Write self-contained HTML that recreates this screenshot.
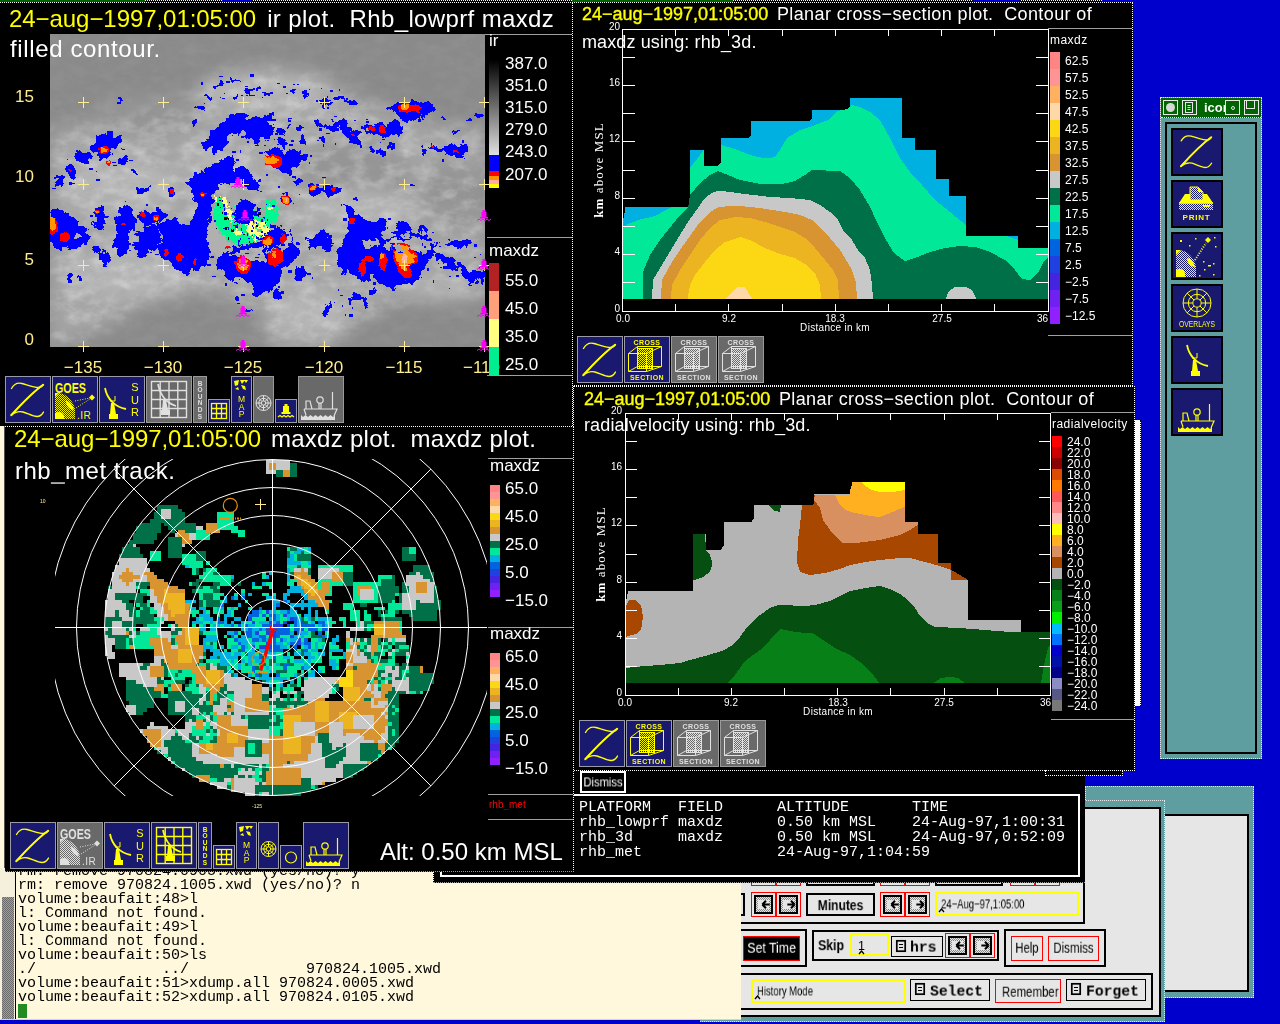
<!DOCTYPE html><html><head><meta charset="utf-8"><title>zeb</title><style>
html,body{margin:0;padding:0;}
body{width:1280px;height:1024px;overflow:hidden;background:#0000cd;position:relative;font-family:"Liberation Sans",sans-serif;}
div{position:absolute;box-sizing:border-box;}
svg{position:absolute;left:0;top:0;overflow:visible;}
.t{white-space:pre;line-height:1;transform:translateY(-0.847em);will-change:transform;}
.m{white-space:pre;line-height:1;font-family:"Liberation Mono",monospace;transform:translateY(-0.7665em);will-change:transform;}
.dot{border:1px dotted #fff;}
.ic{background:#191970;border:1px solid #9a9aa8;}
.ig{background:#696969;border:1px solid #9a9a9a;}
</style></head><body>
<div style="left:1085px;top:786px;width:169px;height:212px;background:#5f9ea0;border:1px dotted #e8e8e8;"></div>
<div style="left:1164px;top:814px;width:85px;height:178px;background:#e6e6e6;border:2px solid #000;border-left:none;"></div>
<div style="left:700px;top:800px;width:465px;height:222px;background:#5f9ea0;border:1px dotted #e8e8e8;"></div>
<div style="left:700px;top:807px;width:461px;height:210px;background:#e6e6e6;border:2px solid #000;"></div>
<div style="left:751px;top:870px;width:25px;height:16px;border:1px solid #f00;"></div>
<div style="left:776px;top:870px;width:25px;height:16px;border:1px solid #f00;"></div>
<div style="left:806px;top:870px;width:69px;height:16px;border:2px solid #000;"></div>
<div style="left:880px;top:870px;width:25px;height:16px;border:1px solid #f00;"></div>
<div style="left:905px;top:870px;width:25px;height:16px;border:1px solid #f00;"></div>
<div style="left:935px;top:870px;width:68px;height:16px;border:2px solid #000;"></div>
<div style="left:1010px;top:870px;width:25px;height:16px;border:1px solid #f00;"></div>
<div style="left:1035px;top:870px;width:25px;height:16px;border:1px solid #f00;"></div>
<div style="left:700px;top:860px;width:385px;height:64px;border:2px solid #000;"></div>
<div style="left:700px;top:893px;width:45px;height:23px;border:2px solid #000;"></div>
<div style="left:751px;top:892px;width:25px;height:25px;border:1px solid #f00;background:#e6e6e6"><div style="left:2px;top:2px;right:2px;bottom:2px;border:2px solid #000;background:#bdbdbd;background-image:conic-gradient(#888 25%,#e6e6e6 0 50%,#888 0 75%,#e6e6e6 0);background-size:2px 2px;"><div style="left:2px;top:3px;right:2px;bottom:3px;background:#e6e6e6"></div></div><svg width="25" height="25" viewBox="0 0 20 24" preserveAspectRatio="xMidYMid" style="left:2px;top:-1px"><path d="M13 12h-7M6 12l3.5-3.5M6 12l3.5 3.5" stroke="#000" stroke-width="2" fill="none"/></svg></div>
<div style="left:776px;top:892px;width:25px;height:25px;border:1px solid #f00;background:#e6e6e6"><div style="left:2px;top:2px;right:2px;bottom:2px;border:2px solid #000;background:#bdbdbd;background-image:conic-gradient(#888 25%,#e6e6e6 0 50%,#888 0 75%,#e6e6e6 0);background-size:2px 2px;"><div style="left:2px;top:3px;right:2px;bottom:3px;background:#e6e6e6"></div></div><svg width="25" height="25" viewBox="0 0 20 24" preserveAspectRatio="xMidYMid" style="left:2px;top:-1px"><path d="M6 12h7M13 12l-3.5-3.5M13 12l-3.5 3.5" stroke="#000" stroke-width="2" fill="none"/></svg></div>
<div style="left:806px;top:893px;width:69px;height:23px;border:2px solid #000;"></div>
<div class="t" style="left:806px;width:69px;text-align:center;top:909.5px;font-size:14px;color:#000;font-weight:bold;transform:translateY(-0.847em) scaleX(0.86);">Minutes</div>
<div style="left:880px;top:892px;width:25px;height:25px;border:1px solid #f00;background:#e6e6e6"><div style="left:2px;top:2px;right:2px;bottom:2px;border:2px solid #000;background:#bdbdbd;background-image:conic-gradient(#888 25%,#e6e6e6 0 50%,#888 0 75%,#e6e6e6 0);background-size:2px 2px;"><div style="left:2px;top:3px;right:2px;bottom:3px;background:#e6e6e6"></div></div><svg width="25" height="25" viewBox="0 0 20 24" preserveAspectRatio="xMidYMid" style="left:2px;top:-1px"><path d="M13 12h-7M6 12l3.5-3.5M6 12l3.5 3.5" stroke="#000" stroke-width="2" fill="none"/></svg></div>
<div style="left:905px;top:892px;width:25px;height:25px;border:1px solid #f00;background:#e6e6e6"><div style="left:2px;top:2px;right:2px;bottom:2px;border:2px solid #000;background:#bdbdbd;background-image:conic-gradient(#888 25%,#e6e6e6 0 50%,#888 0 75%,#e6e6e6 0);background-size:2px 2px;"><div style="left:2px;top:3px;right:2px;bottom:3px;background:#e6e6e6"></div></div><svg width="25" height="25" viewBox="0 0 20 24" preserveAspectRatio="xMidYMid" style="left:2px;top:-1px"><path d="M6 12h7M13 12l-3.5-3.5M13 12l-3.5 3.5" stroke="#000" stroke-width="2" fill="none"/></svg></div>
<div style="left:935px;top:892px;width:144px;height:24px;border:2px solid #ffff00;"></div>
<div class="t" style="left:941px;top:909px;font-size:12.5px;color:#000;transform-origin:0 0;transform:translateY(-0.847em) scaleX(0.76);">24−Aug−97,1:05:00</div>
<svg width="1280" height="1024"><path d="M939 912l2.5-3l2.5 3" stroke="#000" stroke-width="1.3" fill="none"/></svg>
<div style="left:700px;top:929px;width:107px;height:38px;border:2px solid #000;"></div>
<div style="left:743px;top:936px;width:57px;height:25px;background:#000;border:1px solid #f00;"></div>
<div class="t" style="left:743px;width:57px;text-align:center;top:953px;font-size:14.5px;color:#fff;transform:translateY(-0.847em) scaleX(0.85)">Set Time</div>
<div style="left:812px;top:930px;width:187px;height:31px;border:2px solid #000;"></div>
<div class="t" style="left:815px;width:32px;text-align:center;top:950px;font-size:14px;color:#000;font-weight:bold;transform:translateY(-0.847em) scaleX(0.88);">Skip</div>
<div style="left:850px;top:933px;width:39px;height:23px;border:2px solid #ffff00;"></div>
<div class="t" style="left:858px;top:951px;font-size:12.5px;color:#000;">1</div>
<svg width="1280" height="1024"><path d="M859 954l2.5-3l2.5 3" stroke="#000" stroke-width="1.3" fill="none"/></svg>
<div style="left:891px;top:936px;width:52px;height:21px;border:1px solid #000;"></div><svg width="1280" height="1024"><rect x="896.8" y="940.8" width="8.4" height="10.4" fill="none" stroke="#000" stroke-width="1.7"/><path d="M899 944.5h4M899 947.5h4" stroke="#000" stroke-width="1"/></svg><div class="m" style="left:910px;top:951.5px;font-size:15px;font-weight:bold;color:#000;font-family:'Liberation Mono';transform-origin:0 0;transform:translateY(-0.766em) scaleX(0.98)">hrs</div>
<div style="left:945px;top:933px;width:25px;height:25px;border:1px solid #f00;background:#e6e6e6"><div style="left:2px;top:2px;right:2px;bottom:2px;border:2px solid #000;background:#bdbdbd;background-image:conic-gradient(#888 25%,#e6e6e6 0 50%,#888 0 75%,#e6e6e6 0);background-size:2px 2px;"><div style="left:2px;top:3px;right:2px;bottom:3px;background:#e6e6e6"></div></div><svg width="25" height="25" viewBox="0 0 20 24" preserveAspectRatio="xMidYMid" style="left:2px;top:-1px"><path d="M13 12h-7M6 12l3.5-3.5M6 12l3.5 3.5" stroke="#000" stroke-width="2" fill="none"/></svg></div>
<div style="left:970px;top:933px;width:25px;height:25px;border:1px solid #f00;background:#e6e6e6"><div style="left:2px;top:2px;right:2px;bottom:2px;border:2px solid #000;background:#bdbdbd;background-image:conic-gradient(#888 25%,#e6e6e6 0 50%,#888 0 75%,#e6e6e6 0);background-size:2px 2px;"><div style="left:2px;top:3px;right:2px;bottom:3px;background:#e6e6e6"></div></div><svg width="25" height="25" viewBox="0 0 20 24" preserveAspectRatio="xMidYMid" style="left:2px;top:-1px"><path d="M6 12h7M13 12l-3.5-3.5M13 12l-3.5 3.5" stroke="#000" stroke-width="2" fill="none"/></svg></div>
<div style="left:1004px;top:929px;width:102px;height:38px;border:2px solid #000;"></div>
<div style="left:1011px;top:936px;width:32px;height:25px;border:1px solid #f00;"></div>
<div class="t" style="left:1011px;width:32px;text-align:center;top:953px;font-size:14.5px;color:#000;transform:translateY(-0.847em) scaleX(0.78);">Help</div>
<div style="left:1048px;top:936px;width:51px;height:25px;border:1px solid #f00;"></div>
<div class="t" style="left:1048px;width:51px;text-align:center;top:953px;font-size:14.5px;color:#000;transform:translateY(-0.847em) scaleX(0.8);">Dismiss</div>
<div style="left:700px;top:973px;width:453px;height:37px;border:2px solid #000;"></div>
<div style="left:751px;top:979px;width:155px;height:24px;border:2px solid #ffff00;"></div>
<div class="t" style="left:757px;top:996px;font-size:12.5px;color:#000;transform-origin:0 0;transform:translateY(-0.847em) scaleX(0.76);">History Mode</div>
<svg width="1280" height="1024"><path d="M755 999l2.5-3l2.5 3" stroke="#000" stroke-width="1.3" fill="none"/></svg>
<div style="left:910px;top:979px;width:80px;height:22px;border:1px solid #000;"></div><svg width="1280" height="1024"><rect x="915.8" y="983.8" width="8.4" height="10.4" fill="none" stroke="#000" stroke-width="1.7"/><path d="M918 987.5h4M918 990.5h4" stroke="#000" stroke-width="1"/></svg><div class="m" style="left:930px;top:995.5px;font-size:15px;font-weight:bold;color:#000;font-family:'Liberation Mono';transform-origin:0 0;transform:translateY(-0.766em) scaleX(0.98)">Select</div>
<div style="left:995px;top:979px;width:66px;height:24px;border:1px solid #f00;"></div>
<div class="t" style="left:995px;width:66px;text-align:center;top:997px;font-size:14.5px;color:#000;transform:translateY(-0.847em) scaleX(0.79);">Remember</div>
<div style="left:1066px;top:979px;width:80px;height:22px;border:1px solid #000;"></div><svg width="1280" height="1024"><rect x="1071.8" y="983.8" width="8.4" height="10.4" fill="none" stroke="#000" stroke-width="1.7"/><path d="M1074 987.5h4M1074 990.5h4" stroke="#000" stroke-width="1"/></svg><div class="m" style="left:1086px;top:995.5px;font-size:15px;font-weight:bold;color:#000;font-family:'Liberation Mono';transform-origin:0 0;transform:translateY(-0.766em) scaleX(0.98)">Forget</div>
<div style="left:0px;top:426px;width:741px;height:594px;background:#fff8dc;"></div>
<div style="left:4px;top:426px;width:1px;height:445px;background:#555;"></div>
<div style="left:0px;top:868px;width:16px;height:152px;background:#f4f0dc;"></div>
<div style="left:2px;top:897px;width:12px;height:122px;background:#808080;background-image:conic-gradient(#6a6a6a 25%,#a0a0a0 0 50%,#6a6a6a 0 75%,#a0a0a0 0);background-size:2px 2px;"></div>
<div style="left:15px;top:868px;width:1px;height:151px;background:#000;"></div>
<div style="left:0px;top:1019px;width:741px;height:1px;background:#d8d4c0;"></div>
<div class="m" style="left:18px;top:875px;font-size:15px;color:#000;">rm: remove 970824.0905.xwd (yes/no)? y</div>
<div class="m" style="left:18px;top:889px;font-size:15px;color:#000;">rm: remove 970824.1005.xwd (yes/no)? n</div>
<div class="m" style="left:18px;top:903px;font-size:15px;color:#000;">volume:beaufait:48&gt;l</div>
<div class="m" style="left:18px;top:917px;font-size:15px;color:#000;">l: Command not found.</div>
<div class="m" style="left:18px;top:931px;font-size:15px;color:#000;">volume:beaufait:49&gt;l</div>
<div class="m" style="left:18px;top:945px;font-size:15px;color:#000;">l: Command not found.</div>
<div class="m" style="left:18px;top:959px;font-size:15px;color:#000;">volume:beaufait:50&gt;ls</div>
<div class="m" style="left:18px;top:973px;font-size:15px;color:#000;">./              ../             970824.1005.xwd</div>
<div class="m" style="left:18px;top:987px;font-size:15px;color:#000;">volume:beaufait:51&gt;xdump.all 970824.0005.xwd</div>
<div class="m" style="left:18px;top:1001px;font-size:15px;color:#000;">volume:beaufait:52&gt;xdump.all 970824.0105.xwd</div>
<div style="left:18px;top:1004px;width:9px;height:14px;background:#228b22;"></div>
<div style="left:433px;top:770px;width:652px;height:113px;background:#000;border-left:1px dotted #fff;border-bottom:1px dotted #999;"></div>
<div style="left:440px;top:794px;width:640px;height:83px;border:2px solid #fff;"></div>
<div style="left:580px;top:771px;width:46px;height:22px;border:2px solid #fff;"></div>
<div class="t" style="left:580px;width:46px;text-align:center;top:787px;font-size:12.5px;color:#fff;transform:translateY(-0.847em) scaleX(0.9)">Dismiss</div>
<div class="m" style="left:579px;top:811px;font-size:15px;color:#fff;">PLATFORM   FIELD      ALTITUDE       TIME</div>
<div class="m" style="left:579px;top:826px;font-size:15px;color:#fff;">rhb_lowprf maxdz      0.50 km MSL    24-Aug-97,1:00:31</div>
<div class="m" style="left:579px;top:841px;font-size:15px;color:#fff;">rhb_3d     maxdz      0.50 km MSL    24-Aug-97,0:52:09</div>
<div class="m" style="left:579px;top:856px;font-size:15px;color:#fff;">rhb_met               24-Aug-97,1:04:59</div>
<div class="dot" style="left:573px;top:386px;width:562px;height:385px;background:#000;"></div>
<svg width="1280" height="1024" shape-rendering="crispEdges"><path d="M625.0 682.5 L625.0 608.0 L628.0 591.0 L692.5 591.0 L692.5 534.0 L706.2 534.0 L706.2 550.0 L720.5 550.0 L723.5 546.0 L723.5 522.0 L751.2 522.0 L753.5 519.0 L753.5 505.0 L812.5 505.0 L814.0 503.0 L814.0 494.0 L850.0 494.0 L852.5 491.0 L852.5 482.0 L904.5 482.0 L904.5 522.0 L917.5 522.0 L917.5 534.0 L938.2 534.0 L938.2 562.8 L951.2 562.8 L951.2 580.0 L968.2 580.0 L968.2 619.5 L1020.5 619.5 L1020.5 631.5 L1050.5 631.5 L1050.5 682.5Z" fill="#b4b4b4"/><path d="M692.5 534.0 L705.0 534.0 L706.0 550.0 L710.0 555.0 L712.5 563.0 L710.0 572.0 L703.0 577.0 L692.5 580.5Z" fill="#055010"/><path d="M768.5 505.0 L781.0 505.0 L780.0 512.0 L775.0 511.0Z" fill="#055010"/><path d="M625.0 682.5 L625.0 668.0 L640.0 666.5 L660.0 665.0 L680.0 663.0 L690.0 660.0 L705.0 656.0 L722.0 651.0 L733.0 645.0 L740.0 637.0 L745.0 630.0 L752.0 622.0 L760.0 615.0 L770.0 608.0 L780.0 604.5 L790.0 605.0 L800.0 606.5 L815.0 605.0 L830.0 601.0 L840.0 596.0 L850.0 591.0 L865.0 588.0 L880.0 586.0 L890.0 589.0 L900.0 594.0 L908.0 600.0 L915.0 608.0 L920.0 616.0 L927.0 623.0 L935.0 627.0 L960.0 628.0 L985.0 630.0 L1010.0 632.0 L1030.0 632.5 L1050.5 632.0 L1050.5 682.5Z" fill="#055010"/><path d="M728.0 682.5 L735.0 675.0 L745.0 661.0 L760.0 650.0 L770.0 640.0 L780.0 629.0 L795.0 632.0 L813.0 633.5 L820.0 638.0 L835.0 648.0 L850.0 655.0 L860.0 662.0 L870.0 671.0 L879.0 682.5Z" fill="#088018"/><path d="M934.0 682.5 L940.0 678.5 L950.0 676.5 L958.0 678.0 L964.0 682.5Z" fill="#088018"/><path d="M1041.0 682.5 L1045.0 660.0 L1048.0 648.0 L1050.5 645.0 L1050.5 682.5Z" fill="#088018"/><path d="M625.0 608.0 L629.0 600.0 L635.0 599.5 L641.0 605.0 L643.0 617.0 L641.0 630.0 L636.0 634.0 L625.0 637.0Z" fill="#a84800"/><path d="M802.0 505.0 L800.0 525.0 L798.0 540.0 L797.0 562.0 L800.0 572.0 L810.0 575.0 L825.0 573.0 L840.0 569.0 L850.0 565.0 L865.0 562.0 L880.0 560.0 L900.0 558.0 L912.0 558.5 L925.0 562.0 L940.0 566.0 L951.2 570.0 L960.0 575.0 L968.0 580.0 L951.2 580.0 L951.2 562.8 L938.2 562.8 L938.2 534.0 L917.5 534.0 L917.5 522.0 L904.5 522.0 L904.5 482.0 L852.5 482.0 L850.0 491.0 L850.0 494.5 L814.0 494.5 L814.0 503.0 L812.5 505.0Z" fill="#a84800"/><path d="M815.0 494.5 L814.0 500.0 L820.0 508.0 L823.0 520.0 L830.0 530.0 L837.0 538.0 L843.0 543.0 L860.0 542.5 L880.0 540.0 L900.0 535.0 L910.0 530.0 L917.5 525.0 L917.5 522.0 L904.5 522.0 L904.5 482.0 L852.5 482.0 L850.0 491.0 L850.0 494.5Z" fill="#d89060"/><path d="M835.0 494.5 L840.0 505.0 L845.0 510.0 L855.0 513.0 L870.0 516.0 L880.0 517.0 L890.0 513.0 L904.5 507.0 L904.5 482.0 L852.5 482.0 L850.0 491.0 L850.0 494.5Z" fill="#ffb020"/><path d="M861.0 482.0 L865.0 486.0 L872.0 490.0 L880.0 492.0 L890.0 492.5 L904.5 490.0 L904.5 482.0Z" fill="#ffff00"/><g stroke="#fff" stroke-width="1" fill="none"><rect x="625" y="413" width="425.5" height="282"/><path d="M625 441.2h12M1050.5 441.2h-12"/><path d="M625 469.4h12M1050.5 469.4h-12"/><path d="M625 497.6h12M1050.5 497.6h-12"/><path d="M625 525.8h12M1050.5 525.8h-12"/><path d="M625 554.0h12M1050.5 554.0h-12"/><path d="M625 582.2h12M1050.5 582.2h-12"/><path d="M625 610.4h12M1050.5 610.4h-12"/><path d="M625 638.6h12M1050.5 638.6h-12"/><path d="M625 666.8h12M1050.5 666.8h-12"/><path d="M678.2 413v7M678.2 695v-7"/><path d="M731.4 413v7M731.4 695v-7"/><path d="M784.6 413v7M784.6 695v-7"/><path d="M837.8 413v7M837.8 695v-7"/><path d="M890.9 413v7M890.9 695v-7"/><path d="M944.1 413v7M944.1 695v-7"/><path d="M997.3 413v7M997.3 695v-7"/></g><path d="M1050.5 412.5H1134M1050.5 719.5H1134" stroke="#a0a0a0" stroke-width="1"/><rect x="1052" y="436" width="10" height="11" fill="#ff0000"/><rect x="1052" y="447" width="10" height="11" fill="#cc0000"/><rect x="1052" y="458" width="10" height="11" fill="#8b0000"/><rect x="1052" y="469" width="10" height="11" fill="#dc4c00"/><rect x="1052" y="480" width="10" height="11" fill="#ff7800"/><rect x="1052" y="491" width="10" height="11" fill="#ff5858"/><rect x="1052" y="502" width="10" height="11" fill="#ff8888"/><rect x="1052" y="513" width="10" height="11" fill="#ffbcbc"/><rect x="1052" y="524" width="10" height="11" fill="#ffff00"/><rect x="1052" y="535" width="10" height="11" fill="#ffb020"/><rect x="1052" y="546" width="10" height="11" fill="#d89060"/><rect x="1052" y="557" width="10" height="11" fill="#a84800"/><rect x="1052" y="568" width="10" height="11" fill="#b4b4b4"/><rect x="1052" y="579" width="10" height="11" fill="#055010"/><rect x="1052" y="590" width="10" height="11" fill="#088018"/><rect x="1052" y="601" width="10" height="11" fill="#08a018"/><rect x="1052" y="612" width="10" height="11" fill="#00ee00"/><rect x="1052" y="623" width="10" height="11" fill="#00bcff"/><rect x="1052" y="634" width="10" height="11" fill="#0070ff"/><rect x="1052" y="645" width="10" height="11" fill="#0000cc"/><rect x="1052" y="656" width="10" height="11" fill="#0010a8"/><rect x="1052" y="667" width="10" height="11" fill="#000088"/><rect x="1052" y="678" width="10" height="11" fill="#8c8cc4"/><rect x="1052" y="689" width="10" height="11" fill="#585888"/><rect x="1052" y="700" width="10" height="11" fill="#787878"/></svg>
<div class="t" style="left:584px;top:405px;font-size:18px;color:#fff;letter-spacing:0.38px;"><span style="color:#ffff00;letter-spacing:0;margin-right:-2px;-webkit-text-stroke:0.35px #ffff00">24−aug−1997,01:05:00</span>  Planar cross−section plot.  Contour of</div>
<div class="t" style="left:584px;top:431px;font-size:18px;color:#fff;letter-spacing:0.12px;">radialvelocity using: rhb_3d.</div>
<div class="t" style="left:592px;width:30px;text-align:right;top:413.5px;font-size:10px;color:#fff">20</div>
<div class="t" style="left:592px;width:30px;text-align:right;top:469.9px;font-size:10px;color:#fff">16</div>
<div class="t" style="left:592px;width:30px;text-align:right;top:526.3px;font-size:10px;color:#fff">12</div>
<div class="t" style="left:592px;width:30px;text-align:right;top:582.7px;font-size:10px;color:#fff">8</div>
<div class="t" style="left:592px;width:30px;text-align:right;top:639.1px;font-size:10px;color:#fff">4</div>
<div class="t" style="left:592px;width:30px;text-align:right;top:695.5px;font-size:10px;color:#fff">0</div>
<div class="t" style="left:605.0px;width:40px;text-align:center;top:706px;font-size:10px;color:#fff">0.0</div>
<div class="t" style="left:711.4px;width:40px;text-align:center;top:706px;font-size:10px;color:#fff">9.2</div>
<div class="t" style="left:817.8px;width:40px;text-align:center;top:706px;font-size:10px;color:#fff">18.3</div>
<div class="t" style="left:924.1px;width:40px;text-align:center;top:706px;font-size:10px;color:#fff">27.5</div>
<div class="t" style="left:1039.5px;width:11px;overflow:hidden;top:706px;font-size:10px;color:#fff">36</div>
<div class="t" style="left:797.8px;width:80px;text-align:center;top:715px;font-size:10px;color:#fff;letter-spacing:0.3px">Distance in km</div>
<div style="left:601px;top:554.0px;width:0;height:0;"><div style="left:-60px;top:-8px;width:120px;height:16px;line-height:16px;text-align:center;transform:rotate(-90deg);color:#fff;font-family:'Liberation Serif',serif;font-size:13px;white-space:pre;letter-spacing:1.1px"><b>km</b> above MSL</div></div>
<div class="t" style="left:1052px;top:428px;font-size:12px;color:#fff;letter-spacing:0.45px;">radialvelocity</div>
<div class="t" style="left:1067px;top:446.0px;font-size:12px;color:#fff;">24.0</div>
<div class="t" style="left:1067px;top:457.0px;font-size:12px;color:#fff;">22.0</div>
<div class="t" style="left:1067px;top:468.0px;font-size:12px;color:#fff;">20.0</div>
<div class="t" style="left:1067px;top:479.0px;font-size:12px;color:#fff;">18.0</div>
<div class="t" style="left:1067px;top:490.0px;font-size:12px;color:#fff;">16.0</div>
<div class="t" style="left:1067px;top:501.0px;font-size:12px;color:#fff;">14.0</div>
<div class="t" style="left:1067px;top:512.0px;font-size:12px;color:#fff;">12.0</div>
<div class="t" style="left:1067px;top:523.0px;font-size:12px;color:#fff;">10.0</div>
<div class="t" style="left:1067px;top:534.0px;font-size:12px;color:#fff;">8.0</div>
<div class="t" style="left:1067px;top:545.0px;font-size:12px;color:#fff;">6.0</div>
<div class="t" style="left:1067px;top:556.0px;font-size:12px;color:#fff;">4.0</div>
<div class="t" style="left:1067px;top:567.0px;font-size:12px;color:#fff;">2.0</div>
<div class="t" style="left:1067px;top:578.0px;font-size:12px;color:#fff;">0.0</div>
<div class="t" style="left:1067px;top:589.0px;font-size:12px;color:#fff;">−2.0</div>
<div class="t" style="left:1067px;top:600.0px;font-size:12px;color:#fff;">−4.0</div>
<div class="t" style="left:1067px;top:611.0px;font-size:12px;color:#fff;">−6.0</div>
<div class="t" style="left:1067px;top:622.0px;font-size:12px;color:#fff;">−8.0</div>
<div class="t" style="left:1067px;top:633.0px;font-size:12px;color:#fff;">−10.0</div>
<div class="t" style="left:1067px;top:644.0px;font-size:12px;color:#fff;">−12.0</div>
<div class="t" style="left:1067px;top:655.0px;font-size:12px;color:#fff;">−14.0</div>
<div class="t" style="left:1067px;top:666.0px;font-size:12px;color:#fff;">−16.0</div>
<div class="t" style="left:1067px;top:677.0px;font-size:12px;color:#fff;">−18.0</div>
<div class="t" style="left:1067px;top:688.0px;font-size:12px;color:#fff;">−20.0</div>
<div class="t" style="left:1067px;top:699.0px;font-size:12px;color:#fff;">−22.0</div>
<div class="t" style="left:1067px;top:710.0px;font-size:12px;color:#fff;">−24.0</div>
<div class="ic" style="left:579px;top:720px;width:46px;height:47px;"><svg width="46" height="47" viewBox="0 0 46 47" style="left:-1px;top:-1px"><path d="M6.5 12.5C9 8 13 6.5 17 7.5S27 11 32 11.5S37 10 38.5 8.5C28 16 20 24 6 39.5C10 36 14 35 18 36S28 40.5 32 40.5S37 38.5 38.5 36" fill="none" stroke="#ffff00" stroke-width="1.4" stroke-linejoin="round" stroke-linecap="round"/><path d="M38.5 8.5C28 16 20 24 6 39.5" fill="none" stroke="#ffff00" stroke-width="2.0"/></svg></div>
<div class="ic" style="left:626px;top:720px;width:46px;height:47px;"><svg width="46" height="47" viewBox="0 0 46 47" style="left:-1px;top:-1px"><defs><pattern id="dots1" width="2" height="2" patternUnits="userSpaceOnUse"><rect width="1" height="1" fill="#ffff00"/><rect x="1" y="1" width="1" height="1" fill="#ffff00"/></pattern><pattern id="dots2" width="2" height="2" patternUnits="userSpaceOnUse"><rect width="1" height="1" fill="#e0e0e0"/><rect x="1" y="1" width="1" height="1" fill="#e0e0e0"/></pattern></defs><g fill="none" stroke="#ffff00" stroke-width="1"><path d="M4.5 17.5h18v18h-18zM13.5 10.5h24v20h-24zM4.5 17.5l9-7M22.5 17.5l15-7M22.5 35.5l15-5M4.5 35.5l9-5"/></g><rect x="13" y="12" width="15" height="20" fill="url(#dots1)"/><rect x="13.5" y="12.5" width="15" height="20" fill="none" stroke="#ffff00" stroke-width="1"/><text x="23" y="9" font-family="Liberation Sans" font-weight="bold" font-size="7" text-anchor="middle" fill="#ffff00" letter-spacing="0.4">CROSS</text><text x="23" y="44" font-family="Liberation Sans" font-weight="bold" font-size="7" text-anchor="middle" fill="#ffff00" letter-spacing="0.4">SECTION</text></svg></div>
<div class="ig" style="left:673px;top:720px;width:46px;height:47px;"><svg width="46" height="47" viewBox="0 0 46 47" style="left:-1px;top:-1px"><defs><pattern id="dots1" width="2" height="2" patternUnits="userSpaceOnUse"><rect width="1" height="1" fill="#ffff00"/><rect x="1" y="1" width="1" height="1" fill="#ffff00"/></pattern><pattern id="dots2" width="2" height="2" patternUnits="userSpaceOnUse"><rect width="1" height="1" fill="#e0e0e0"/><rect x="1" y="1" width="1" height="1" fill="#e0e0e0"/></pattern></defs><g fill="none" stroke="#e0e0e0" stroke-width="1"><path d="M4.5 17.5h18v18h-18zM13.5 10.5h24v20h-24zM4.5 17.5l9-7M22.5 17.5l15-7M22.5 35.5l15-5M4.5 35.5l9-5"/></g><rect x="13" y="12" width="15" height="20" fill="url(#dots2)"/><rect x="13.5" y="12.5" width="15" height="20" fill="none" stroke="#e0e0e0" stroke-width="1"/><text x="23" y="9" font-family="Liberation Sans" font-weight="bold" font-size="7" text-anchor="middle" fill="#e0e0e0" letter-spacing="0.4">CROSS</text><text x="23" y="44" font-family="Liberation Sans" font-weight="bold" font-size="7" text-anchor="middle" fill="#e0e0e0" letter-spacing="0.4">SECTION</text></svg></div>
<div class="ig" style="left:720px;top:720px;width:46px;height:47px;"><svg width="46" height="47" viewBox="0 0 46 47" style="left:-1px;top:-1px"><defs><pattern id="dots1" width="2" height="2" patternUnits="userSpaceOnUse"><rect width="1" height="1" fill="#ffff00"/><rect x="1" y="1" width="1" height="1" fill="#ffff00"/></pattern><pattern id="dots2" width="2" height="2" patternUnits="userSpaceOnUse"><rect width="1" height="1" fill="#e0e0e0"/><rect x="1" y="1" width="1" height="1" fill="#e0e0e0"/></pattern></defs><g fill="none" stroke="#e0e0e0" stroke-width="1"><path d="M4.5 17.5h18v18h-18zM13.5 10.5h24v20h-24zM4.5 17.5l9-7M22.5 17.5l15-7M22.5 35.5l15-5M4.5 35.5l9-5"/></g><rect x="13" y="12" width="15" height="20" fill="url(#dots2)"/><rect x="13.5" y="12.5" width="15" height="20" fill="none" stroke="#e0e0e0" stroke-width="1"/><text x="23" y="9" font-family="Liberation Sans" font-weight="bold" font-size="7" text-anchor="middle" fill="#e0e0e0" letter-spacing="0.4">CROSS</text><text x="23" y="44" font-family="Liberation Sans" font-weight="bold" font-size="7" text-anchor="middle" fill="#e0e0e0" letter-spacing="0.4">SECTION</text></svg></div>
<div class="dot" style="left:1045px;top:770px;width:78px;height:6px;background:#000;"></div>
<div class="dot" style="left:572px;top:2px;width:561px;height:384px;background:#000;"></div>
<svg width="1280" height="1024" shape-rendering="crispEdges"><path d="M622.5 299.0 L622.5 224.0 L625.5 207.0 L690.0 207.0 L690.0 150.0 L703.8 150.0 L703.8 166.0 L718.0 166.0 L721.0 162.0 L721.0 138.0 L748.8 138.0 L751.0 135.0 L751.0 121.0 L810.0 121.0 L811.5 119.0 L811.5 110.0 L847.5 110.0 L850.0 107.0 L850.0 98.0 L902.0 98.0 L902.0 138.0 L915.0 138.0 L915.0 150.0 L935.8 150.0 L935.8 178.8 L948.8 178.8 L948.8 196.0 L965.8 196.0 L965.8 235.5 L1018.0 235.5 L1018.0 247.5 L1048.0 247.5 L1048.0 299.0Z" fill="#00b0e0"/><path d="M622.5 299.0 L622.5 229.0 L628.0 224.0 L640.0 219.5 L655.0 216.0 L668.0 209.0 L672.0 207.0 L690.0 207.0 L690.0 168.0 L703.8 150.0 L703.8 166.0 L718.0 166.0 L721.0 162.0 L721.0 145.0 L735.0 149.0 L750.0 155.0 L765.0 158.5 L775.0 157.0 L780.0 150.0 L787.0 138.0 L800.0 130.0 L815.0 125.0 L828.0 120.0 L838.0 111.0 L847.0 109.0 L852.0 105.0 L860.0 107.0 L870.0 112.0 L880.0 120.0 L890.0 138.0 L900.0 158.0 L910.0 172.0 L922.0 185.0 L935.0 200.0 L950.0 212.0 L965.8 225.0 L965.8 235.5 L1005.0 235.5 L1018.0 240.0 L1018.0 247.5 L1048.0 247.5 L1048.0 299.0Z" fill="#00e898"/><path d="M642.5 299.0 L643.0 272.0 L650.0 255.0 L660.0 240.0 L672.0 225.0 L680.0 215.0 L688.0 208.0 L690.0 195.0 L700.0 183.0 L710.0 175.0 L718.0 171.0 L728.0 175.0 L740.0 180.0 L760.0 184.0 L780.0 184.5 L795.0 181.0 L805.0 175.0 L812.0 170.0 L840.0 171.0 L850.0 178.0 L860.0 190.0 L870.0 207.0 L877.0 222.0 L885.0 238.0 L892.0 250.0 L895.0 254.0 L905.0 261.0 L915.0 258.0 L930.0 252.0 L945.0 248.0 L960.0 246.0 L975.0 247.0 L990.0 252.0 L1005.0 260.0 L1015.0 270.0 L1022.0 279.0 L1030.0 280.0 L1038.0 273.0 L1043.0 263.0 L1048.0 257.0 L1048.0 299.0Z" fill="#007048"/><path d="M652.0 299.0 L653.0 280.0 L660.0 268.0 L668.0 255.0 L678.0 238.0 L688.0 222.0 L700.0 205.0 L705.0 198.0 L712.0 193.0 L718.0 190.5 L730.0 192.0 L745.0 194.0 L770.0 197.0 L790.0 198.0 L810.0 200.0 L820.0 205.0 L830.0 212.0 L838.0 220.0 L843.0 230.0 L852.0 240.0 L858.0 250.0 L865.0 258.0 L870.0 270.0 L872.0 285.0 L873.0 299.0Z" fill="#c8c8c8"/><path d="M660.8 299.0 L662.0 280.0 L672.0 262.0 L680.0 250.0 L690.0 236.0 L700.0 222.0 L710.0 212.0 L718.0 207.5 L728.0 206.0 L740.0 206.0 L760.0 208.0 L785.0 212.0 L800.0 215.0 L812.0 220.0 L820.0 227.0 L830.0 238.0 L840.0 250.0 L845.0 258.0 L852.0 270.0 L856.0 282.0 L857.0 299.0Z" fill="#d89430"/><path d="M670.8 299.0 L672.0 285.0 L680.0 270.0 L690.0 255.0 L700.0 240.0 L710.0 228.0 L720.0 220.0 L735.0 217.0 L750.0 218.0 L765.0 222.0 L780.0 227.0 L795.0 232.0 L808.0 240.0 L815.0 248.0 L825.0 260.0 L833.0 270.0 L838.0 280.0 L839.0 299.0Z" fill="#ecb420"/><path d="M687.5 299.0 L690.0 285.0 L695.0 275.0 L705.0 262.0 L715.0 250.0 L725.0 242.0 L740.0 237.0 L750.0 240.0 L765.0 248.0 L780.0 254.0 L795.0 258.0 L805.0 264.0 L815.0 273.0 L820.0 285.0 L821.0 299.0Z" fill="#fcd814"/><path d="M725.0 299.0 L738.0 287.0 L745.0 287.0 L752.0 299.0Z" fill="#ffd8a8"/><path d="M946.0 299.0 L948.0 292.0 L955.0 287.0 L965.0 286.5 L972.0 290.0 L976.5 299.0Z" fill="#c8c8c8"/><g stroke="#fff" stroke-width="1" fill="none"><rect x="622.5" y="29" width="425.5" height="282"/><path d="M622.5 57.2h12M1048 57.2h-12"/><path d="M622.5 85.4h12M1048 85.4h-12"/><path d="M622.5 113.6h12M1048 113.6h-12"/><path d="M622.5 141.8h12M1048 141.8h-12"/><path d="M622.5 170.0h12M1048 170.0h-12"/><path d="M622.5 198.2h12M1048 198.2h-12"/><path d="M622.5 226.4h12M1048 226.4h-12"/><path d="M622.5 254.6h12M1048 254.6h-12"/><path d="M622.5 282.8h12M1048 282.8h-12"/><path d="M675.7 29v7M675.7 311v-7"/><path d="M728.9 29v7M728.9 311v-7"/><path d="M782.1 29v7M782.1 311v-7"/><path d="M835.2 29v7M835.2 311v-7"/><path d="M888.4 29v7M888.4 311v-7"/><path d="M941.6 29v7M941.6 311v-7"/><path d="M994.8 29v7M994.8 311v-7"/></g><path d="M1048 28.5H1132M1048 335.5H1132" stroke="#a0a0a0" stroke-width="1"/><rect x="1050" y="52" width="10" height="17" fill="#ff8484"/><rect x="1050" y="69" width="10" height="17" fill="#ff9494"/><rect x="1050" y="86" width="10" height="17" fill="#ffb060"/><rect x="1050" y="103" width="10" height="17" fill="#ffd8a8"/><rect x="1050" y="120" width="10" height="17" fill="#fcd814"/><rect x="1050" y="137" width="10" height="17" fill="#ecb420"/><rect x="1050" y="154" width="10" height="17" fill="#d89430"/><rect x="1050" y="171" width="10" height="17" fill="#c8c8c8"/><rect x="1050" y="188" width="10" height="17" fill="#007048"/><rect x="1050" y="205" width="10" height="17" fill="#00e898"/><rect x="1050" y="222" width="10" height="17" fill="#00b0e0"/><rect x="1050" y="239" width="10" height="17" fill="#0064e0"/><rect x="1050" y="256" width="10" height="17" fill="#2040e0"/><rect x="1050" y="273" width="10" height="17" fill="#4424e0"/><rect x="1050" y="290" width="10" height="17" fill="#7020f0"/><rect x="1050" y="307" width="10" height="17" fill="#9020ff"/></svg>
<div class="t" style="left:582px;top:20px;font-size:18px;color:#fff;letter-spacing:0.38px;"><span style="color:#ffff00;letter-spacing:0;margin-right:-2px;-webkit-text-stroke:0.35px #ffff00">24−aug−1997,01:05:00</span>  Planar cross−section plot.  Contour of</div>
<div class="t" style="left:582px;top:47.5px;font-size:18px;color:#fff;letter-spacing:0.12px;">maxdz using: rhb_3d.</div>
<div class="t" style="left:589.5px;width:30px;text-align:right;top:29.5px;font-size:10px;color:#fff">20</div>
<div class="t" style="left:589.5px;width:30px;text-align:right;top:85.9px;font-size:10px;color:#fff">16</div>
<div class="t" style="left:589.5px;width:30px;text-align:right;top:142.3px;font-size:10px;color:#fff">12</div>
<div class="t" style="left:589.5px;width:30px;text-align:right;top:198.7px;font-size:10px;color:#fff">8</div>
<div class="t" style="left:589.5px;width:30px;text-align:right;top:255.1px;font-size:10px;color:#fff">4</div>
<div class="t" style="left:589.5px;width:30px;text-align:right;top:311.5px;font-size:10px;color:#fff">0</div>
<div class="t" style="left:602.5px;width:40px;text-align:center;top:322px;font-size:10px;color:#fff">0.0</div>
<div class="t" style="left:708.9px;width:40px;text-align:center;top:322px;font-size:10px;color:#fff">9.2</div>
<div class="t" style="left:815.2px;width:40px;text-align:center;top:322px;font-size:10px;color:#fff">18.3</div>
<div class="t" style="left:921.6px;width:40px;text-align:center;top:322px;font-size:10px;color:#fff">27.5</div>
<div class="t" style="left:1037.0px;width:11px;overflow:hidden;top:322px;font-size:10px;color:#fff">36</div>
<div class="t" style="left:795.2px;width:80px;text-align:center;top:331px;font-size:10px;color:#fff;letter-spacing:0.3px">Distance in km</div>
<div style="left:598.5px;top:170.0px;width:0;height:0;"><div style="left:-60px;top:-8px;width:120px;height:16px;line-height:16px;text-align:center;transform:rotate(-90deg);color:#fff;font-family:'Liberation Serif',serif;font-size:13px;white-space:pre;letter-spacing:1.1px"><b>km</b> above MSL</div></div>
<div class="t" style="left:1050px;top:44px;font-size:12px;color:#fff;letter-spacing:0.45px;">maxdz</div>
<div class="t" style="left:1065px;top:65.0px;font-size:12px;color:#fff;">62.5</div>
<div class="t" style="left:1065px;top:82.0px;font-size:12px;color:#fff;">57.5</div>
<div class="t" style="left:1065px;top:99.0px;font-size:12px;color:#fff;">52.5</div>
<div class="t" style="left:1065px;top:116.0px;font-size:12px;color:#fff;">47.5</div>
<div class="t" style="left:1065px;top:133.0px;font-size:12px;color:#fff;">42.5</div>
<div class="t" style="left:1065px;top:150.0px;font-size:12px;color:#fff;">37.5</div>
<div class="t" style="left:1065px;top:167.0px;font-size:12px;color:#fff;">32.5</div>
<div class="t" style="left:1065px;top:184.0px;font-size:12px;color:#fff;">27.5</div>
<div class="t" style="left:1065px;top:201.0px;font-size:12px;color:#fff;">22.5</div>
<div class="t" style="left:1065px;top:218.0px;font-size:12px;color:#fff;">17.5</div>
<div class="t" style="left:1065px;top:235.0px;font-size:12px;color:#fff;">12.5</div>
<div class="t" style="left:1065px;top:252.0px;font-size:12px;color:#fff;">7.5</div>
<div class="t" style="left:1065px;top:269.0px;font-size:12px;color:#fff;">2.5</div>
<div class="t" style="left:1065px;top:286.0px;font-size:12px;color:#fff;">−2.5</div>
<div class="t" style="left:1065px;top:303.0px;font-size:12px;color:#fff;">−7.5</div>
<div class="t" style="left:1065px;top:320.0px;font-size:12px;color:#fff;">−12.5</div>
<div class="ic" style="left:577px;top:336px;width:46px;height:47px;"><svg width="46" height="47" viewBox="0 0 46 47" style="left:-1px;top:-1px"><path d="M6.5 12.5C9 8 13 6.5 17 7.5S27 11 32 11.5S37 10 38.5 8.5C28 16 20 24 6 39.5C10 36 14 35 18 36S28 40.5 32 40.5S37 38.5 38.5 36" fill="none" stroke="#ffff00" stroke-width="1.4" stroke-linejoin="round" stroke-linecap="round"/><path d="M38.5 8.5C28 16 20 24 6 39.5" fill="none" stroke="#ffff00" stroke-width="2.0"/></svg></div>
<div class="ic" style="left:624px;top:336px;width:46px;height:47px;"><svg width="46" height="47" viewBox="0 0 46 47" style="left:-1px;top:-1px"><defs><pattern id="dots1" width="2" height="2" patternUnits="userSpaceOnUse"><rect width="1" height="1" fill="#ffff00"/><rect x="1" y="1" width="1" height="1" fill="#ffff00"/></pattern><pattern id="dots2" width="2" height="2" patternUnits="userSpaceOnUse"><rect width="1" height="1" fill="#e0e0e0"/><rect x="1" y="1" width="1" height="1" fill="#e0e0e0"/></pattern></defs><g fill="none" stroke="#ffff00" stroke-width="1"><path d="M4.5 17.5h18v18h-18zM13.5 10.5h24v20h-24zM4.5 17.5l9-7M22.5 17.5l15-7M22.5 35.5l15-5M4.5 35.5l9-5"/></g><rect x="13" y="12" width="15" height="20" fill="url(#dots1)"/><rect x="13.5" y="12.5" width="15" height="20" fill="none" stroke="#ffff00" stroke-width="1"/><text x="23" y="9" font-family="Liberation Sans" font-weight="bold" font-size="7" text-anchor="middle" fill="#ffff00" letter-spacing="0.4">CROSS</text><text x="23" y="44" font-family="Liberation Sans" font-weight="bold" font-size="7" text-anchor="middle" fill="#ffff00" letter-spacing="0.4">SECTION</text></svg></div>
<div class="ig" style="left:671px;top:336px;width:46px;height:47px;"><svg width="46" height="47" viewBox="0 0 46 47" style="left:-1px;top:-1px"><defs><pattern id="dots1" width="2" height="2" patternUnits="userSpaceOnUse"><rect width="1" height="1" fill="#ffff00"/><rect x="1" y="1" width="1" height="1" fill="#ffff00"/></pattern><pattern id="dots2" width="2" height="2" patternUnits="userSpaceOnUse"><rect width="1" height="1" fill="#e0e0e0"/><rect x="1" y="1" width="1" height="1" fill="#e0e0e0"/></pattern></defs><g fill="none" stroke="#e0e0e0" stroke-width="1"><path d="M4.5 17.5h18v18h-18zM13.5 10.5h24v20h-24zM4.5 17.5l9-7M22.5 17.5l15-7M22.5 35.5l15-5M4.5 35.5l9-5"/></g><rect x="13" y="12" width="15" height="20" fill="url(#dots2)"/><rect x="13.5" y="12.5" width="15" height="20" fill="none" stroke="#e0e0e0" stroke-width="1"/><text x="23" y="9" font-family="Liberation Sans" font-weight="bold" font-size="7" text-anchor="middle" fill="#e0e0e0" letter-spacing="0.4">CROSS</text><text x="23" y="44" font-family="Liberation Sans" font-weight="bold" font-size="7" text-anchor="middle" fill="#e0e0e0" letter-spacing="0.4">SECTION</text></svg></div>
<div class="ig" style="left:718px;top:336px;width:46px;height:47px;"><svg width="46" height="47" viewBox="0 0 46 47" style="left:-1px;top:-1px"><defs><pattern id="dots1" width="2" height="2" patternUnits="userSpaceOnUse"><rect width="1" height="1" fill="#ffff00"/><rect x="1" y="1" width="1" height="1" fill="#ffff00"/></pattern><pattern id="dots2" width="2" height="2" patternUnits="userSpaceOnUse"><rect width="1" height="1" fill="#e0e0e0"/><rect x="1" y="1" width="1" height="1" fill="#e0e0e0"/></pattern></defs><g fill="none" stroke="#e0e0e0" stroke-width="1"><path d="M4.5 17.5h18v18h-18zM13.5 10.5h24v20h-24zM4.5 17.5l9-7M22.5 17.5l15-7M22.5 35.5l15-5M4.5 35.5l9-5"/></g><rect x="13" y="12" width="15" height="20" fill="url(#dots2)"/><rect x="13.5" y="12.5" width="15" height="20" fill="none" stroke="#e0e0e0" stroke-width="1"/><text x="23" y="9" font-family="Liberation Sans" font-weight="bold" font-size="7" text-anchor="middle" fill="#e0e0e0" letter-spacing="0.4">CROSS</text><text x="23" y="44" font-family="Liberation Sans" font-weight="bold" font-size="7" text-anchor="middle" fill="#e0e0e0" letter-spacing="0.4">SECTION</text></svg></div>
<div style="left:0px;top:2px;width:573px;height:424px;background:#000;border-top:1px dotted #fff;border-right:1px dotted #fff;"></div>
<svg width="1280" height="1024"><defs><clipPath id="irclip"><rect x="50" y="34" width="435" height="313"/></clipPath><filter id="rag" x="-5%" y="-5%" width="110%" height="110%"><feTurbulence type="fractalNoise" baseFrequency="0.11" numOctaves="3" seed="7" result="n"/><feDisplacementMap in="SourceGraphic" in2="n" scale="13" xChannelSelector="R" yChannelSelector="G"/></filter><filter id="rag2" x="-5%" y="-5%" width="110%" height="110%"><feTurbulence type="fractalNoise" baseFrequency="0.2" numOctaves="2" seed="3" result="n"/><feDisplacementMap in="SourceGraphic" in2="n" scale="5" xChannelSelector="R" yChannelSelector="G"/></filter><filter id="rag3" x="-5%" y="-5%" width="110%" height="110%"><feTurbulence type="fractalNoise" baseFrequency="0.3" numOctaves="2" seed="9" result="n"/><feDisplacementMap in="SourceGraphic" in2="n" scale="7" xChannelSelector="R" yChannelSelector="G"/></filter><filter id="blur8" x="-20%" y="-20%" width="140%" height="140%"><feGaussianBlur stdDeviation="9"/></filter><filter id="tex" x="0" y="0" width="100%" height="100%"><feTurbulence type="fractalNoise" baseFrequency="0.06 0.09" numOctaves="4" seed="11"/><feColorMatrix type="matrix" values="0 0 0 0 1  0 0 0 0 1  0 0 0 0 1  1.6 0 0 0 -0.62"/></filter><filter id="tex2" x="0" y="0" width="100%" height="100%"><feTurbulence type="fractalNoise" baseFrequency="0.05 0.07" numOctaves="4" seed="23"/><feColorMatrix type="matrix" values="0 0 0 0 0.35  0 0 0 0 0.35  0 0 0 0 0.35  0 1.4 0 0 -0.55"/></filter></defs><g clip-path="url(#irclip)"><rect x="50" y="34" width="435" height="313" fill="#8a8a8a"/><g filter="url(#blur8)"><path d="M50 130 L120 120 L180 105 L215 78 L270 70 L330 80 L360 100 L420 120 L485 130 L485 300 L440 290 L400 300 L360 320 L330 347 L270 347 L260 310 L200 290 L150 300 L100 330 L50 347Z" fill="#a6a6a6"/><path d="M300.0 177.5a55.0 37.5 0 1 0 110.0 0a55.0 37.5 0 1 0 -110.0 0Z M90.0 115.0a55.0 20.0 0 1 0 110.0 0a55.0 20.0 0 1 0 -110.0 0Z M420.0 195.0a32.5 35.0 0 1 0 65.0 0a32.5 35.0 0 1 0 -65.0 0Z" fill="#949494"/><path d="M60.0 185.0a60.0 25.0 0 1 0 120.0 0a60.0 25.0 0 1 0 -120.0 0Z M60.0 275.0a70.0 25.0 0 1 0 140.0 0a70.0 25.0 0 1 0 -140.0 0Z M270.0 315.0a40.0 25.0 0 1 0 80.0 0a40.0 25.0 0 1 0 -80.0 0Z M200.0 90.0a65.0 20.0 0 1 0 130.0 0a65.0 20.0 0 1 0 -130.0 0Z M180.0 165.0a40.0 15.0 0 1 0 80.0 0a40.0 15.0 0 1 0 -80.0 0Z M300.0 207.5a60.0 17.5 0 1 0 120.0 0a60.0 17.5 0 1 0 -120.0 0Z M395.0 290.0a45.0 10.0 0 1 0 90.0 0a45.0 10.0 0 1 0 -90.0 0Z" fill="#b6b6b6"/></g><mask id="cm" maskUnits="userSpaceOnUse" x="50" y="34" width="435" height="313"><rect x="50" y="34" width="435" height="313" fill="#303030"/><g filter="url(#blur8)"><path d="M50 130 L120 120 L180 105 L215 78 L270 70 L330 80 L360 100 L420 120 L485 130 L485 300 L440 290 L400 300 L360 320 L330 347 L270 347 L260 310 L200 290 L150 300 L100 330 L50 347Z" fill="#fff"/></g></mask><g mask="url(#cm)"><rect x="50" y="34" width="435" height="313" filter="url(#tex)" opacity="0.42"/><rect x="50" y="34" width="435" height="313" filter="url(#tex2)" opacity="0.6"/></g><g filter="url(#rag)" shape-rendering="crispEdges"><path d="M96 141a12 8 0 1 0 24 0a12 8 0 1 0 -24 0Z M97 153a8 6 0 1 0 16 0a8 6 0 1 0 -16 0Z M116 160a6 5 0 1 0 12 0a6 5 0 1 0 -12 0Z M74 157a10 5 0 1 0 20 0a10 5 0 1 0 -20 0Z M66 172a5 8 0 1 0 10 0a5 8 0 1 0 -10 0Z M55 181a4 6 0 1 0 8 0a4 6 0 1 0 -8 0Z M130 172a3 3 0 1 0 6 0a3 3 0 1 0 -6 0Z M137 190a5 5 0 1 0 10 0a5 5 0 1 0 -10 0Z M167 192a5 5 0 1 0 10 0a5 5 0 1 0 -10 0Z M92 147a4 6 0 1 0 8 0a4 6 0 1 0 -8 0Z M240 112 L246 118 L255 115 L262 118 L270 114 L275 125 L270 140 L262 138 L255 142 L248 137 L240 130 L232 135 L225 148 L215 153 L207 148 L203 143 L210 135 L220 125 L228 118Z M187 182 L200 173 L212 167 L222 160 L232 158 L237 165 L233 172 L245 168 L252 172 L252 182 L247 186 L238 180 L230 183 L222 186 L214 192 L212 214 L207 222 L205 235 L212 252 L200 254 L195 240 L190 225 L194 215 L197 200 L192 190Z M233.0 213.0a12.0 10.0 0 1 0 24.0 0a12.0 10.0 0 1 0 -24.0 0Z M250.0 185.0a6.0 5.0 0 1 0 12.0 0a6.0 5.0 0 1 0 -12.0 0Z M230.0 252.0a25.0 10.0 0 1 0 50.0 0a25.0 10.0 0 1 0 -50.0 0Z M262.0 235.0a11.5 10.0 0 1 0 23.0 0a11.5 10.0 0 1 0 -23.0 0Z M50 212 L58 208 L62 215 L70 212 L75 222 L85 228 L90 235 L88 243 L75 247 L62 248 L50 245Z M94 218a7 12 0 1 0 14 0a7 12 0 1 0 -14 0Z M115 222a10 16 0 1 0 20 0a10 16 0 1 0 -20 0Z M114.0 243.5a7.5 13.5 0 1 0 15.0 0a7.5 13.5 0 1 0 -15.0 0Z M138.0 216.0a14.0 7.0 0 1 0 28.0 0a14.0 7.0 0 1 0 -28.0 0Z M141.0 238.0a10.5 14.0 0 1 0 21.0 0a10.5 14.0 0 1 0 -21.0 0Z M134.0 244.0a8.0 12.0 0 1 0 16.0 0a8.0 12.0 0 1 0 -16.0 0Z M160 222 L175 220 L190 224 L205 220 L210 236 L200 248 L180 250 L165 248 L158 238Z M205.0 243.0a33.5 9.0 0 1 0 67.0 0a33.5 9.0 0 1 0 -67.0 0Z M232.0 213.5a12.0 13.5 0 1 0 24.0 0a12.0 13.5 0 1 0 -24.0 0Z M90.0 251.0a5.0 5.0 0 1 0 10.0 0a5.0 5.0 0 1 0 -10.0 0Z M100.0 258.0a5.0 6.0 0 1 0 10.0 0a5.0 6.0 0 1 0 -10.0 0Z M385 107 L395 104 L410 102 L425 102 L433 105 L435 111 L428 115 L418 118 L410 122 L403 120 L395 113Z M359 128 L370 125 L385 124 L392 122 L400 123 L403 130 L402 135 L395 138 L390 134 L383 137 L375 133 L365 131Z M310 122 L320 120 L325 125 L332 122 L345 120 L350 125 L352 132 L360 133 L360 143 L353 143 L350 138 L345 135 L340 128 L332 130 L325 128 L318 126Z M430 144 L440 147 L450 147 L455 144 L467 145 L467 150 L462 155 L462 161 L455 160 L448 153 L440 150 L432 149Z M420.0 150.0a3.0 3.0 0 1 0 6.0 0a3.0 3.0 0 1 0 -6.0 0Z M265 150 L275 149 L285 152 L295 153 L305 152 L308 156 L300 162 L298 168 L290 174 L283 172 L275 165 L265 160Z M309.0 189.5a6.5 5.5 0 1 0 13.0 0a6.5 5.5 0 1 0 -13.0 0Z M323.0 191.0a9.0 6.0 0 1 0 18.0 0a9.0 6.0 0 1 0 -18.0 0Z M281.0 200.0a5.5 5.0 0 1 0 11.0 0a5.5 5.0 0 1 0 -11.0 0Z M345 202 L352 208 L355 215 L365 218 L372 222 L380 218 L388 222 L385 230 L378 235 L372 245 L365 252 L341 252 L345 240 L348 230 L348 220Z M397.0 229.5a8.0 8.5 0 1 0 16.0 0a8.0 8.5 0 1 0 -16.0 0Z M418.0 231.0a4.5 5.0 0 1 0 9.0 0a4.5 5.0 0 1 0 -9.0 0Z M385.0 245.0a26.0 7.0 0 1 0 52.0 0a26.0 7.0 0 1 0 -52.0 0Z M445.0 243.5a13.0 3.5 0 1 0 26.0 0a13.0 3.5 0 1 0 -26.0 0Z M265.0 239.5a13.5 12.5 0 1 0 27.0 0a13.5 12.5 0 1 0 -27.0 0Z M308.0 240.5a13.0 7.5 0 1 0 26.0 0a13.0 7.5 0 1 0 -26.0 0Z M205.0 97.0a3.5 2.0 0 1 0 7.0 0a3.5 2.0 0 1 0 -7.0 0Z M215.0 86.0a3.5 2.0 0 1 0 7.0 0a3.5 2.0 0 1 0 -7.0 0Z M232.0 79.5a3.0 1.5 0 1 0 6.0 0a3.0 1.5 0 1 0 -6.0 0Z M243.0 92.0a3.5 2.0 0 1 0 7.0 0a3.5 2.0 0 1 0 -7.0 0Z M256.0 90.0a2.0 2.0 0 1 0 4.0 0a2.0 2.0 0 1 0 -4.0 0Z M276.0 84.0a2.5 2.0 0 1 0 5.0 0a2.5 2.0 0 1 0 -5.0 0Z M290.0 91.0a3.0 3.0 0 1 0 6.0 0a3.0 3.0 0 1 0 -6.0 0Z M303.0 94.0a3.5 2.0 0 1 0 7.0 0a3.5 2.0 0 1 0 -7.0 0Z M320.0 100.5a4.0 2.5 0 1 0 8.0 0a4.0 2.5 0 1 0 -8.0 0Z M334.0 98.5a5.0 2.5 0 1 0 10.0 0a5.0 2.5 0 1 0 -10.0 0Z M348.0 103.0a4.0 3.0 0 1 0 8.0 0a4.0 3.0 0 1 0 -8.0 0Z M323.0 106.0a3.5 2.0 0 1 0 7.0 0a3.5 2.0 0 1 0 -7.0 0Z M268.0 124.5a3.5 2.5 0 1 0 7.0 0a3.5 2.5 0 1 0 -7.0 0Z M276.0 131.0a4.0 3.0 0 1 0 8.0 0a4.0 3.0 0 1 0 -8.0 0Z M286.0 124.0a2.0 2.0 0 1 0 4.0 0a2.0 2.0 0 1 0 -4.0 0Z M266.0 138.0a3.0 2.0 0 1 0 6.0 0a3.0 2.0 0 1 0 -6.0 0Z M280.0 143.0a3.0 3.0 0 1 0 6.0 0a3.0 3.0 0 1 0 -6.0 0Z M300.0 141.0a3.0 3.0 0 1 0 6.0 0a3.0 3.0 0 1 0 -6.0 0Z M298.0 128.0a2.5 2.0 0 1 0 5.0 0a2.5 2.0 0 1 0 -5.0 0Z M319.0 142.5a2.5 3.5 0 1 0 5.0 0a2.5 3.5 0 1 0 -5.0 0Z M368.0 150.0a4.0 2.0 0 1 0 8.0 0a4.0 2.0 0 1 0 -8.0 0Z M378.0 152.5a4.0 2.5 0 1 0 8.0 0a4.0 2.5 0 1 0 -8.0 0Z M388.0 146.0a3.5 2.0 0 1 0 7.0 0a3.5 2.0 0 1 0 -7.0 0Z M440.0 119.5a4.0 1.5 0 1 0 8.0 0a4.0 1.5 0 1 0 -8.0 0Z M452.0 132.5a4.0 1.5 0 1 0 8.0 0a4.0 1.5 0 1 0 -8.0 0Z M466.0 121.5a3.0 1.5 0 1 0 6.0 0a3.0 1.5 0 1 0 -6.0 0Z M478.0 115.0a3.5 2.0 0 1 0 7.0 0a3.5 2.0 0 1 0 -7.0 0Z M292.0 180.5a6.0 3.5 0 1 0 12.0 0a6.0 3.5 0 1 0 -12.0 0Z M353.0 198.5a3.0 2.5 0 1 0 6.0 0a3.0 2.5 0 1 0 -6.0 0Z M410.0 185.5a3.0 2.5 0 1 0 6.0 0a3.0 2.5 0 1 0 -6.0 0Z M118.0 100.0a2.0 2.0 0 1 0 4.0 0a2.0 2.0 0 1 0 -4.0 0Z M230.0 98.0a3.0 2.0 0 1 0 6.0 0a3.0 2.0 0 1 0 -6.0 0Z M196.0 106.5a3.5 2.5 0 1 0 7.0 0a3.5 2.5 0 1 0 -7.0 0Z M193.0 123.0a3.0 3.0 0 1 0 6.0 0a3.0 3.0 0 1 0 -6.0 0Z M157 245 L165 243 L175 236 L190 232 L205 232 L210 240 L208 250 L212 258 L205 265 L195 270 L185 272 L175 270 L170 262 L160 258Z M215 237 L225 240 L240 243 L270 240 L272 290 L262 292 L258 298 L254 295 L252 285 L245 280 L235 278 L228 280 L222 272 L216 268 L218 258 L224 250 L220 243Z M67.0 278.5a3.0 3.5 0 1 0 6.0 0a3.0 3.5 0 1 0 -6.0 0Z M79.0 279.0a1.5 3.0 0 1 0 3.0 0a1.5 3.0 0 1 0 -3.0 0Z M235.0 299.0a2.5 3.0 0 1 0 5.0 0a2.5 3.0 0 1 0 -5.0 0Z M245.0 310.0a2.5 2.0 0 1 0 5.0 0a2.5 2.0 0 1 0 -5.0 0Z M265 228 L290 230 L295 240 L300 255 L293 262 L285 268 L280 278 L272 286 L265 288Z M296.0 273.5a4.5 6.5 0 1 0 9.0 0a4.5 6.5 0 1 0 -9.0 0Z M320.0 242.5a6.0 7.5 0 1 0 12.0 0a6.0 7.5 0 1 0 -12.0 0Z M348 228 L380 230 L383 240 L395 238 L405 232 L425 232 L430 238 L428 245 L436 252 L432 260 L425 265 L420 275 L412 285 L400 287 L390 290 L382 285 L375 275 L365 282 L355 280 L350 270 L342 275 L337 265 L340 250 L343 240Z M430 255 L440 262 L450 265 L460 270 L465 278 L472 284 L478 280 L485 283 L485 270 L475 272 L462 268 L455 262 L445 258 L437 252Z M445.0 244.0a8.5 3.0 0 1 0 17.0 0a8.5 3.0 0 1 0 -17.0 0Z M273.0 296.0a4.5 6.0 0 1 0 9.0 0a4.5 6.0 0 1 0 -9.0 0Z M350.0 296.0a4.0 4.0 0 1 0 8.0 0a4.0 4.0 0 1 0 -8.0 0Z M363.0 301.5a2.5 6.5 0 1 0 5.0 0a2.5 6.5 0 1 0 -5.0 0Z M325.0 309.5a2.5 6.5 0 1 0 5.0 0a2.5 6.5 0 1 0 -5.0 0Z M370.0 293.0a2.0 3.0 0 1 0 4.0 0a2.0 3.0 0 1 0 -4.0 0Z" fill="#0000ff"/><path d="M207 226 L215 219 L225 223 L232 233 L230 246 L222 256 L212 253 L206 240Z M362 240 L380 238 L378 246 L366 250Z M238.0 252.0a4.0 2.0 0 1 0 8.0 0a4.0 2.0 0 1 0 -8.0 0Z M224.0 139.0a4.0 3.0 0 1 0 8.0 0a4.0 3.0 0 1 0 -8.0 0Z M75.0 235.0a3.5 3.0 0 1 0 7.0 0a3.5 3.0 0 1 0 -7.0 0Z" fill="#b0b0b0"/></g><path d="M108.3 148.4h2.6v1.3h-2.6zM113.3 164.5h3.9v1.3h-3.9zM107.4 148.8h1.3v1.3h-1.3zM111.8 162.1h3.9v1.3h-3.9zM106.0 136.3h2.6v1.3h-2.6zM100.8 152.3h1.3v1.3h-1.3zM106.5 142.2h1.3v1.3h-1.3zM120.5 147.8h1.3v1.3h-1.3zM129.1 160.0h3.9v1.3h-3.9zM116.8 136.4h3.9v1.3h-3.9zM121.5 148.5h3.9v1.3h-3.9zM118.0 139.0h2.6v2.6h-2.6zM111.6 153.2h1.3v1.3h-1.3zM95.6 170.6h1.3v1.3h-1.3zM72.4 182.5h2.6v1.3h-2.6zM70.1 175.7h2.6v2.6h-2.6zM89.0 167.8h3.9v2.6h-3.9zM83.1 182.7h1.3v1.3h-1.3zM52.0 187.6h3.9v1.3h-3.9zM66.9 158.8h1.3v1.3h-1.3zM83.3 159.8h2.6v1.3h-2.6zM96.2 178.7h3.9v2.6h-3.9zM68.9 182.1h2.6v2.6h-2.6zM225.2 137.4h1.3v2.6h-1.3zM225.9 131.5h3.9v1.3h-3.9zM255.8 127.7h1.3v1.3h-1.3zM231.5 134.7h1.3v1.3h-1.3zM246.6 140.8h2.6v2.6h-2.6zM257.6 139.6h2.6v2.6h-2.6zM239.8 150.2h1.3v2.6h-1.3zM234.6 117.1h3.9v1.3h-3.9zM242.1 124.1h2.6v1.3h-2.6zM240.9 135.8h2.6v2.6h-2.6zM241.7 120.8h1.3v2.6h-1.3zM231.7 151.3h3.9v1.3h-3.9zM259.0 151.7h3.9v2.6h-3.9zM263.0 127.1h2.6v1.3h-2.6zM254.1 142.4h2.6v1.3h-2.6zM277.4 143.8h1.3v1.3h-1.3zM235.9 113.1h3.9v1.3h-3.9zM255.3 144.8h3.9v1.3h-3.9zM236.3 159.2h2.6v1.3h-2.6zM269.5 126.3h1.3v2.6h-1.3zM215.9 171.3h2.6v1.3h-2.6zM257.3 127.2h1.3v1.3h-1.3zM243.7 136.0h3.9v1.3h-3.9zM238.0 134.2h1.3v1.3h-1.3zM244.5 136.2h2.6v1.3h-2.6zM224.3 134.1h2.6v1.3h-2.6zM209.7 130.3h3.9v2.6h-3.9zM206.3 138.6h2.6v1.3h-2.6zM263.7 144.8h2.6v1.3h-2.6zM192.1 197.7h1.3v2.6h-1.3zM203.9 170.8h1.3v1.3h-1.3zM211.7 163.7h1.3v1.3h-1.3zM221.0 198.9h1.3v1.3h-1.3zM221.1 197.2h1.3v1.3h-1.3zM224.5 162.9h1.3v1.3h-1.3zM205.3 172.8h1.3v1.3h-1.3zM238.5 174.6h1.3v1.3h-1.3zM205.7 185.7h2.6v1.3h-2.6zM215.5 185.7h2.6v1.3h-2.6zM236.2 175.6h2.6v1.3h-2.6zM207.8 166.7h3.9v2.6h-3.9zM213.5 178.2h2.6v1.3h-2.6zM232.4 181.9h3.9v1.3h-3.9zM214.9 180.9h3.9v1.3h-3.9zM188.6 184.6h1.3v1.3h-1.3zM220.4 183.8h1.3v1.3h-1.3zM198.3 174.9h1.3v1.3h-1.3zM235.7 202.3h1.3v2.6h-1.3zM199.4 175.7h2.6v2.6h-2.6zM55.8 222.5h2.6v1.3h-2.6zM64.3 221.2h2.6v1.3h-2.6zM83.2 237.5h2.6v1.3h-2.6zM98.5 218.9h1.3v1.3h-1.3zM57.4 220.0h1.3v1.3h-1.3zM54.4 225.5h1.3v1.3h-1.3zM90.3 215.4h2.6v1.3h-2.6zM84.0 242.3h2.6v2.6h-2.6zM94.4 226.3h3.9v1.3h-3.9zM61.5 218.0h1.3v1.3h-1.3zM67.4 246.8h3.9v1.3h-3.9zM67.4 240.1h2.6v1.3h-2.6zM59.9 211.7h3.9v1.3h-3.9zM69.8 247.7h1.3v1.3h-1.3zM53.1 215.4h1.3v1.3h-1.3zM121.8 233.5h2.6v1.3h-2.6zM124.2 212.8h2.6v2.6h-2.6zM129.7 228.3h1.3v2.6h-1.3zM136.2 230.6h3.9v1.3h-3.9zM121.8 229.5h2.6v1.3h-2.6zM131.6 223.1h1.3v2.6h-1.3zM141.7 240.6h2.6v2.6h-2.6zM124.9 200.6h1.3v1.3h-1.3zM146.7 224.7h2.6v1.3h-2.6zM136.7 252.6h2.6v2.6h-2.6zM139.4 211.5h2.6v1.3h-2.6zM126.3 222.4h1.3v1.3h-1.3zM128.8 249.8h2.6v1.3h-2.6zM117.7 248.1h1.3v1.3h-1.3zM132.8 229.2h2.6v1.3h-2.6zM145.6 204.4h2.6v1.3h-2.6zM117.4 218.6h3.9v1.3h-3.9zM130.5 225.8h2.6v1.3h-2.6zM124.9 217.4h1.3v1.3h-1.3zM145.9 226.5h2.6v1.3h-2.6zM143.7 224.2h2.6v2.6h-2.6zM156.3 234.9h2.6v1.3h-2.6zM133.4 229.6h1.3v1.3h-1.3zM128.4 242.7h2.6v2.6h-2.6zM145.9 250.8h2.6v2.6h-2.6zM150.5 242.0h2.6v2.6h-2.6zM153.2 237.3h2.6v2.6h-2.6zM171.8 226.2h1.3v2.6h-1.3zM143.9 227.5h1.3v1.3h-1.3zM152.1 242.8h3.9v2.6h-3.9zM147.4 222.3h2.6v2.6h-2.6zM158.1 243.6h1.3v2.6h-1.3zM167.4 238.4h3.9v1.3h-3.9zM179.6 246.3h1.3v2.6h-1.3zM174.9 265.7h1.3v1.3h-1.3zM226.3 256.6h3.9v1.3h-3.9zM155.0 254.1h3.9v1.3h-3.9zM182.1 237.9h2.6v1.3h-2.6zM198.7 260.8h1.3v1.3h-1.3zM190.3 266.6h3.9v1.3h-3.9zM195.8 250.5h1.3v1.3h-1.3zM196.2 256.7h3.9v2.6h-3.9zM154.7 233.5h2.6v2.6h-2.6zM197.6 227.7h2.6v2.6h-2.6zM176.7 250.1h2.6v1.3h-2.6zM184.3 255.9h2.6v2.6h-2.6zM174.0 248.8h2.6v1.3h-2.6zM182.5 240.5h2.6v1.3h-2.6zM189.8 245.3h1.3v1.3h-1.3zM178.6 252.1h1.3v1.3h-1.3zM173.4 252.8h2.6v1.3h-2.6zM211.2 255.6h2.6v2.6h-2.6zM187.8 247.3h3.9v1.3h-3.9zM149.5 251.6h2.6v1.3h-2.6zM272.0 243.4h2.6v2.6h-2.6zM244.6 253.0h3.9v1.3h-3.9zM230.7 270.8h2.6v1.3h-2.6zM224.5 282.9h2.6v2.6h-2.6zM255.3 283.0h1.3v2.6h-1.3zM206.7 263.7h3.9v2.6h-3.9zM241.1 265.2h2.6v1.3h-2.6zM252.6 263.7h2.6v1.3h-2.6zM235.7 283.1h2.6v1.3h-2.6zM237.2 302.7h2.6v1.3h-2.6zM255.3 256.9h3.9v1.3h-3.9zM261.7 270.0h1.3v2.6h-1.3zM249.4 270.8h1.3v1.3h-1.3zM258.3 254.1h1.3v1.3h-1.3zM236.2 271.1h1.3v1.3h-1.3zM235.4 248.1h1.3v2.6h-1.3zM221.6 256.0h1.3v1.3h-1.3zM253.4 268.6h1.3v1.3h-1.3zM210.1 256.5h2.6v1.3h-2.6zM256.2 266.8h3.9v2.6h-3.9zM251.5 261.2h2.6v2.6h-2.6zM237.6 266.0h3.9v1.3h-3.9zM234.1 281.7h2.6v1.3h-2.6zM228.6 269.5h2.6v1.3h-2.6zM281.1 291.2h2.6v2.6h-2.6zM251.4 276.9h3.9v2.6h-3.9zM240.9 294.3h3.9v1.3h-3.9zM212.2 275.5h3.9v1.3h-3.9zM239.1 279.1h1.3v1.3h-1.3zM254.9 263.2h2.6v2.6h-2.6zM276.0 246.6h1.3v1.3h-1.3zM289.5 248.1h1.3v1.3h-1.3zM288.2 243.2h3.9v2.6h-3.9zM296.2 243.2h3.9v1.3h-3.9zM301.4 266.0h2.6v2.6h-2.6zM285.9 234.3h2.6v1.3h-2.6zM286.4 249.2h1.3v1.3h-1.3zM281.3 244.2h3.9v1.3h-3.9zM270.4 257.8h2.6v2.6h-2.6zM274.4 251.1h2.6v1.3h-2.6zM282.0 264.2h1.3v1.3h-1.3zM295.9 266.4h1.3v1.3h-1.3zM287.9 270.2h3.9v2.6h-3.9zM257.4 233.4h1.3v1.3h-1.3zM286.1 263.4h1.3v2.6h-1.3zM275.6 252.7h1.3v2.6h-1.3zM277.5 286.3h2.6v1.3h-2.6zM295.9 242.4h2.6v1.3h-2.6zM277.9 258.1h1.3v1.3h-1.3zM297.8 249.4h1.3v1.3h-1.3zM360.5 263.0h1.3v1.3h-1.3zM407.1 277.6h2.6v1.3h-2.6zM401.3 261.7h2.6v2.6h-2.6zM364.3 250.2h3.9v1.3h-3.9zM366.8 267.0h3.9v1.3h-3.9zM379.3 281.6h3.9v2.6h-3.9zM421.0 276.9h1.3v1.3h-1.3zM383.0 254.6h1.3v2.6h-1.3zM391.5 262.5h2.6v2.6h-2.6zM374.5 255.1h1.3v1.3h-1.3zM380.6 239.5h2.6v1.3h-2.6zM370.4 230.6h3.9v2.6h-3.9zM395.0 252.6h1.3v2.6h-1.3zM392.0 270.4h2.6v1.3h-2.6zM402.2 265.9h2.6v2.6h-2.6zM389.8 242.5h2.6v1.3h-2.6zM414.4 278.1h2.6v1.3h-2.6zM363.7 261.9h1.3v2.6h-1.3zM413.2 266.0h2.6v2.6h-2.6zM390.0 268.6h3.9v2.6h-3.9zM474.4 244.0h2.6v2.6h-2.6zM426.6 268.3h2.6v2.6h-2.6zM360.9 234.8h1.3v2.6h-1.3zM352.0 272.8h1.3v1.3h-1.3zM378.3 273.0h1.3v1.3h-1.3zM373.4 282.2h2.6v2.6h-2.6zM428.8 252.7h3.9v1.3h-3.9zM371.2 265.7h2.6v1.3h-2.6zM412.5 259.2h3.9v1.3h-3.9zM374.6 246.3h2.6v1.3h-2.6zM398.1 275.1h2.6v2.6h-2.6zM383.2 263.7h2.6v2.6h-2.6zM402.6 271.1h2.6v1.3h-2.6zM421.2 265.8h1.3v2.6h-1.3zM405.5 277.9h3.9v1.3h-3.9zM448.5 287.9h1.3v1.3h-1.3zM420.7 254.9h1.3v1.3h-1.3zM407.0 256.9h2.6v1.3h-2.6zM422.0 225.8h1.3v1.3h-1.3zM369.0 257.3h3.9v2.6h-3.9zM389.7 253.9h1.3v1.3h-1.3zM396.3 232.9h2.6v2.6h-2.6zM454.9 268.5h2.6v2.6h-2.6zM437.6 262.7h1.3v1.3h-1.3zM442.9 266.3h3.9v2.6h-3.9zM432.5 280.2h1.3v2.6h-1.3zM455.9 275.4h2.6v1.3h-2.6zM448.7 275.7h2.6v1.3h-2.6zM478.9 267.0h1.3v1.3h-1.3zM461.8 267.1h3.9v1.3h-3.9zM473.8 256.8h2.6v1.3h-2.6zM440.3 266.7h1.3v1.3h-1.3zM479.6 253.6h1.3v1.3h-1.3zM457.1 262.2h3.9v2.6h-3.9zM405.6 113.5h2.6v2.6h-2.6zM418.4 107.5h2.6v2.6h-2.6zM405.5 102.1h3.9v1.3h-3.9zM402.7 109.0h2.6v1.3h-2.6zM409.7 105.6h1.3v2.6h-1.3zM408.2 109.4h1.3v2.6h-1.3zM409.0 113.4h2.6v1.3h-2.6zM406.5 117.6h1.3v1.3h-1.3zM392.9 110.5h1.3v1.3h-1.3zM418.4 119.3h2.6v2.6h-2.6zM373.5 123.6h3.9v1.3h-3.9zM382.1 138.5h2.6v1.3h-2.6zM365.6 118.9h2.6v1.3h-2.6zM376.5 126.8h2.6v1.3h-2.6zM391.3 129.6h2.6v2.6h-2.6zM380.0 141.6h1.3v1.3h-1.3zM383.9 127.7h2.6v2.6h-2.6zM372.8 133.9h2.6v1.3h-2.6zM399.6 128.8h2.6v1.3h-2.6zM361.2 126.3h1.3v2.6h-1.3zM334.1 115.8h2.6v1.3h-2.6zM324.1 125.6h1.3v2.6h-1.3zM334.9 142.6h1.3v2.6h-1.3zM352.3 136.0h1.3v1.3h-1.3zM335.9 128.1h2.6v2.6h-2.6zM357.3 142.1h2.6v2.6h-2.6zM326.3 132.5h3.9v1.3h-3.9zM302.4 126.8h1.3v1.3h-1.3zM365.9 120.7h2.6v2.6h-2.6zM353.6 120.1h2.6v1.3h-2.6zM359.8 145.1h2.6v2.6h-2.6zM317.4 139.9h1.3v1.3h-1.3zM318.9 128.1h2.6v2.6h-2.6zM319.3 137.3h2.6v1.3h-2.6zM443.8 146.0h3.9v2.6h-3.9zM442.2 159.3h1.3v2.6h-1.3zM461.8 140.2h2.6v2.6h-2.6zM444.5 153.8h1.3v1.3h-1.3zM456.0 151.9h1.3v2.6h-1.3zM458.7 157.0h3.9v1.3h-3.9zM433.5 147.0h2.6v2.6h-2.6zM461.3 156.1h2.6v1.3h-2.6zM461.3 153.2h2.6v1.3h-2.6zM310.3 154.6h1.3v2.6h-1.3zM265.5 174.4h2.6v1.3h-2.6zM278.0 163.5h1.3v1.3h-1.3zM292.8 163.4h3.9v1.3h-3.9zM296.6 162.5h1.3v2.6h-1.3zM292.1 176.3h3.9v1.3h-3.9zM263.8 151.5h1.3v1.3h-1.3zM288.6 144.3h3.9v1.3h-3.9zM278.4 185.5h1.3v2.6h-1.3zM285.0 165.6h1.3v1.3h-1.3zM308.7 161.5h1.3v2.6h-1.3zM281.3 165.0h1.3v1.3h-1.3zM284.1 149.0h1.3v1.3h-1.3zM272.9 162.7h3.9v1.3h-3.9zM275.9 161.9h3.9v1.3h-3.9zM321.7 177.0h3.9v1.3h-3.9zM298.9 194.0h1.3v1.3h-1.3zM331.4 184.8h1.3v1.3h-1.3zM322.3 183.7h1.3v1.3h-1.3zM322.0 188.6h2.6v2.6h-2.6zM316.1 184.4h2.6v1.3h-2.6zM337.9 189.8h2.6v2.6h-2.6zM321.2 188.3h1.3v2.6h-1.3zM351.5 211.3h1.3v1.3h-1.3zM355.7 230.6h2.6v1.3h-2.6zM347.4 239.5h2.6v1.3h-2.6zM361.0 236.5h1.3v2.6h-1.3zM369.5 225.9h1.3v1.3h-1.3zM344.7 236.2h2.6v1.3h-2.6zM348.2 222.5h3.9v2.6h-3.9zM361.7 233.4h2.6v2.6h-2.6zM378.2 223.5h1.3v1.3h-1.3zM354.9 221.4h3.9v2.6h-3.9zM369.6 245.1h1.3v1.3h-1.3zM354.9 240.4h1.3v1.3h-1.3zM343.1 218.2h3.9v2.6h-3.9zM350.4 216.7h1.3v2.6h-1.3zM387.9 218.3h2.6v1.3h-2.6zM373.9 244.9h2.6v1.3h-2.6zM359.9 234.1h1.3v2.6h-1.3zM362.2 224.2h1.3v1.3h-1.3zM364.8 219.6h2.6v1.3h-2.6zM358.0 237.7h2.6v2.6h-2.6zM387.0 227.2h1.3v1.3h-1.3zM410.1 233.6h1.3v1.3h-1.3zM396.7 238.8h3.9v1.3h-3.9zM401.9 238.7h3.9v1.3h-3.9zM406.3 239.0h3.9v1.3h-3.9zM398.6 234.9h1.3v1.3h-1.3zM414.5 235.8h1.3v1.3h-1.3zM431.7 231.7h2.6v1.3h-2.6zM409.2 236.8h2.6v1.3h-2.6zM421.5 242.7h1.3v2.6h-1.3zM391.3 232.0h2.6v1.3h-2.6zM392.3 243.4h2.6v1.3h-2.6zM265.4 92.6h2.6v2.6h-2.6zM245.5 94.6h2.6v1.3h-2.6zM285.8 92.8h2.6v1.3h-2.6zM296.5 84.1h2.6v1.3h-2.6zM263.6 93.1h2.6v2.6h-2.6zM267.7 93.4h2.6v2.6h-2.6zM262.0 96.6h1.3v1.3h-1.3zM261.6 91.8h3.9v1.3h-3.9zM308.9 88.9h1.3v1.3h-1.3zM303.0 94.8h1.3v2.6h-1.3zM316.3 100.3h1.3v1.3h-1.3zM330.3 89.5h2.6v2.6h-2.6zM282.5 85.5h3.9v2.6h-3.9zM245.4 85.7h2.6v1.3h-2.6zM240.8 94.5h2.6v1.3h-2.6zM250.7 89.0h1.3v1.3h-1.3zM269.9 92.4h2.6v1.3h-2.6zM346.4 97.6h1.3v2.6h-1.3zM249.3 88.7h3.9v2.6h-3.9zM338.9 89.2h1.3v1.3h-1.3zM321.1 87.8h1.3v1.3h-1.3zM245.0 87.7h1.3v1.3h-1.3zM343.9 99.8h2.6v2.6h-2.6zM326.6 96.4h1.3v1.3h-1.3zM249.7 74.2h3.9v2.6h-3.9zM252.5 88.4h2.6v1.3h-2.6zM251.4 95.0h3.9v1.3h-3.9zM293.2 83.6h1.3v1.3h-1.3zM248.7 95.1h2.6v1.3h-2.6zM226.4 81.3h3.9v1.3h-3.9zM220.1 96.9h1.3v1.3h-1.3zM221.9 98.1h2.6v1.3h-2.6zM200.7 82.0h2.6v2.6h-2.6zM211.0 97.4h1.3v2.6h-1.3zM219.4 76.1h3.9v1.3h-3.9zM220.4 85.0h2.6v1.3h-2.6zM223.9 92.9h1.3v1.3h-1.3zM246.4 87.8h1.3v1.3h-1.3zM237.1 94.2h1.3v2.6h-1.3zM288.0 118.1h3.9v1.3h-3.9zM272.1 119.3h3.9v1.3h-3.9zM279.3 132.0h1.3v2.6h-1.3zM287.9 118.8h1.3v2.6h-1.3zM273.6 138.5h1.3v1.3h-1.3zM269.6 125.4h2.6v1.3h-2.6zM274.9 133.4h2.6v1.3h-2.6zM265.4 151.1h2.6v1.3h-2.6zM287.5 119.5h3.9v2.6h-3.9zM278.8 137.6h1.3v2.6h-1.3zM290.9 140.2h2.6v1.3h-2.6zM279.7 133.6h3.9v1.3h-3.9zM280.5 149.9h2.6v1.3h-2.6zM355.6 297.6h2.6v1.3h-2.6zM358.0 298.2h2.6v1.3h-2.6zM361.3 296.7h2.6v2.6h-2.6zM341.7 305.3h1.3v1.3h-1.3zM351.7 306.5h1.3v2.6h-1.3zM337.5 289.3h1.3v1.3h-1.3zM344.8 313.7h1.3v2.6h-1.3zM333.7 302.0h1.3v1.3h-1.3zM349.2 314.2h3.9v2.6h-3.9zM340.2 295.0h2.6v1.3h-2.6zM348.8 302.2h2.6v2.6h-2.6zM102.3 248.6h1.3v1.3h-1.3zM98.9 254.4h3.9v2.6h-3.9zM100.2 258.3h2.6v1.3h-2.6zM95.8 252.1h2.6v1.3h-2.6zM98.4 252.8h2.6v1.3h-2.6zM307.2 272.8h3.9v2.6h-3.9zM312.1 276.6h1.3v2.6h-1.3zM295.6 278.8h1.3v1.3h-1.3zM301.3 269.6h1.3v2.6h-1.3zM439.1 241.6h1.3v1.3h-1.3zM421.6 243.0h1.3v2.6h-1.3zM424.2 246.3h1.3v1.3h-1.3zM456.8 247.5h2.6v1.3h-2.6zM439.2 246.1h1.3v1.3h-1.3z" fill="#0000ff" shape-rendering="crispEdges"/><g filter="url(#rag2)" shape-rendering="crispEdges"><path d="M99 150a5 4 0 1 0 10 0a5 4 0 1 0 -10 0Z M105.5 163a2.5 2.5 0 1 0 5.0 0a2.5 2.5 0 1 0 -5.0 0Z M68.5 170a1.5 1.5 0 1 0 3.0 0a1.5 1.5 0 1 0 -3.0 0Z M60 237a5 5 0 1 0 10 0a5 5 0 1 0 -10 0Z M48 226a5 9 0 1 0 10 0a5 9 0 1 0 -10 0Z M94 212a3 2 0 1 0 6 0a3 2 0 1 0 -6 0Z M121 224a2 2 0 1 0 4 0a2 2 0 1 0 -4 0Z M140 215a3 2 0 1 0 6 0a3 2 0 1 0 -6 0Z M153 218a3 3 0 1 0 6 0a3 3 0 1 0 -6 0Z M170 192a2 2 0 1 0 4 0a2 2 0 1 0 -4 0Z M200.5 195a2.5 2.5 0 1 0 5.0 0a2.5 2.5 0 1 0 -5.0 0Z M398 108 L402 103 L412 104 L421 107 L420 113 L410 111 L400 113Z M368.0 129.0a4.0 2.0 0 1 0 8.0 0a4.0 2.0 0 1 0 -8.0 0Z M379.0 129.5a3.5 3.5 0 1 0 7.0 0a3.5 3.5 0 1 0 -7.0 0Z M350.0 135.5a2.5 1.5 0 1 0 5.0 0a2.5 1.5 0 1 0 -5.0 0Z M430.5 146a1.5 1.5 0 1 0 3.0 0a1.5 1.5 0 1 0 -3.0 0Z M453.0 151.0a3.0 1.0 0 1 0 6.0 0a3.0 1.0 0 1 0 -6.0 0Z M265 155 L275 155 L283 158 L282 165 L275 167 L265 164Z M309 188a4 3.5 0 1 0 8 0a4 3.5 0 1 0 -8 0Z M331 189a2 2 0 1 0 4 0a2 2 0 1 0 -4 0Z M281.5 200a4.5 4.5 0 1 0 9.0 0a4.5 4.5 0 1 0 -9.0 0Z M348.5 221a3.5 3.5 0 1 0 7.0 0a3.5 3.5 0 1 0 -7.0 0Z M392.0 247.5a9.0 4.5 0 1 0 18.0 0a9.0 4.5 0 1 0 -18.0 0Z M268.0 257.0a7.5 9.0 0 1 0 15.0 0a7.5 9.0 0 1 0 -15.0 0Z M263.0 241.5a5.0 5.5 0 1 0 10.0 0a5.0 5.5 0 1 0 -10.0 0Z M280.0 239.0a3.5 5.0 0 1 0 7.0 0a3.5 5.0 0 1 0 -7.0 0Z M392 250 L396 243 L404 246 L410 248 L418 255 L417 262 L410 266 L411 275 L405 279 L399 272 L394 262Z M379.0 262.0a4.0 10.0 0 1 0 8.0 0a4.0 10.0 0 1 0 -8.0 0Z M359.0 268.0a3.5 8.0 0 1 0 7.0 0a3.5 8.0 0 1 0 -7.0 0Z M362.0 259.0a6.0 3.0 0 1 0 12.0 0a6.0 3.0 0 1 0 -12.0 0Z M235 265a8 9 0 1 0 16 0a8 9 0 1 0 -16 0Z M164 253a2 4 0 1 0 4 0a2 4 0 1 0 -4 0Z M177 257a3 4 0 1 0 6 0a3 4 0 1 0 -6 0Z M193 262a2 3 0 1 0 4 0a2 3 0 1 0 -4 0Z M226 247a2 2 0 1 0 4 0a2 2 0 1 0 -4 0Z M268 262a2 4 0 1 0 4 0a2 4 0 1 0 -4 0Z" fill="#ff0000"/><path d="M101 150a3 2.5 0 1 0 6 0a3 2.5 0 1 0 -6 0Z M106.5 163a1.5 1.5 0 1 0 3.0 0a1.5 1.5 0 1 0 -3.0 0Z M49.5 224a3.5 7 0 1 0 7.0 0a3.5 7 0 1 0 -7.0 0Z M95 212a2 1.2 0 1 0 4 0a2 1.2 0 1 0 -4 0Z M154 218a2 2 0 1 0 4 0a2 2 0 1 0 -4 0Z M201.5 195a1.5 1.5 0 1 0 3.0 0a1.5 1.5 0 1 0 -3.0 0Z M402.0 107.0a3.5 3.0 0 1 0 7.0 0a3.5 3.0 0 1 0 -7.0 0Z M265 157 L274 157 L279 160 L276 164 L266 163Z M310.5 188a2.5 2 0 1 0 5.0 0a2.5 2 0 1 0 -5.0 0Z M283 200a3 3 0 1 0 6 0a3 3 0 1 0 -6 0Z M396.0 248.5a5.5 3.5 0 1 0 11.0 0a5.5 3.5 0 1 0 -11.0 0Z M264.0 242.0a4.0 4.0 0 1 0 8.0 0a4.0 4.0 0 1 0 -8.0 0Z M394 252 L398 246 L404 249 L409 251 L416 256 L413 262 L407 264 L408 272 L402 270 L398 262Z M237.5 264a5.5 6.5 0 1 0 11.0 0a5.5 6.5 0 1 0 -11.0 0Z M380 256a2 3 0 1 0 4 0a2 3 0 1 0 -4 0Z M271 255a3 4 0 1 0 6 0a3 4 0 1 0 -6 0Z" fill="#ff9800"/><path d="M240 263a3 4 0 1 0 6 0a3 4 0 1 0 -6 0Z M284.5 200a1.5 1.5 0 1 0 3.0 0a1.5 1.5 0 1 0 -3.0 0Z M401 258a3 4 0 1 0 6 0a3 4 0 1 0 -6 0Z" fill="#ffb0a0"/></g><g filter="url(#rag3)" shape-rendering="crispEdges"><path d="M220.5 194.7 L217.9 198.4 L215.8 202.5 L214.4 206.9 L213.6 211.4 L213.6 216.0 L214.2 220.5 L215.5 224.9 L217.5 229.0 L220.1 232.8 L223.2 236.1 L226.8 238.9 L230.8 241.2 L235.1 242.8 L239.6 243.7 L244.2 244.0 L248.7 243.5 L253.1 242.4 L257.4 240.6 L261.2 238.2 L264.7 235.2 L267.7 231.7 L270.1 227.9 L271.9 223.6 L273.0 219.2 L254.3 215.9 L253.9 217.5 L253.3 219.1 L252.4 220.5 L251.3 221.8 L250.0 222.9 L248.6 223.8 L247.0 224.4 L245.4 224.8 L243.7 225.0 L242.1 224.9 L240.4 224.6 L238.9 224.0 L237.4 223.1 L236.1 222.1 L234.9 220.9 L234.0 219.5 L233.2 218.0 L232.8 216.4 L232.5 214.7 L232.5 213.0 L232.8 211.4 L233.3 209.8 L234.1 208.3 L235.1 206.9Z M277.3 223.1 L278.0 219.7 L278.4 216.3 L278.5 212.9 L278.2 209.4 L277.6 206.1 L276.6 202.7 L275.4 199.6 L273.8 196.5 L261.7 203.5 L262.6 205.3 L263.4 207.2 L264.0 209.2 L264.3 211.3 L264.5 213.3 L264.5 215.4 L264.2 217.4 L263.8 219.4Z" fill="#00f890"/><path d="M226 197 L236 192 L240 200 L234 206 L236 214 L230 212Z M259.0 207.0a3.5 7.0 0 1 0 7.0 0a3.5 7.0 0 1 0 -7.0 0Z" fill="#a8a8a8"/><path d="M221 197 L225 197 L231 210 L234 222 L230 222 L224 208Z M246 224 L256 220 L266 222 L270 230 L264 236 L254 238 L247 234Z M234.0 232.0a3.5 3.0 0 1 0 7.0 0a3.5 3.0 0 1 0 -7.0 0Z M268.0 208.0a2.5 2.0 0 1 0 5.0 0a2.5 2.0 0 1 0 -5.0 0Z M214.0 199.0a1.5 2.0 0 1 0 3.0 0a1.5 2.0 0 1 0 -3.0 0Z M252.0 238.0a3.0 2.0 0 1 0 6.0 0a3.0 2.0 0 1 0 -6.0 0Z" fill="#ffff80"/></g><g shape-rendering="crispEdges"><path d="M236.4 224.9h1.3v2.6h-1.3zM220.2 212.1h1.3v1.3h-1.3zM253.3 208.8h1.3v1.3h-1.3zM228.8 224.8h1.3v1.3h-1.3zM252.9 237.3h1.3v1.3h-1.3zM213.6 217.2h1.3v1.3h-1.3zM257.2 237.0h1.3v1.3h-1.3zM235.8 244.0h2.6v1.3h-2.6zM227.7 224.7h1.3v1.3h-1.3zM264.8 217.9h2.6v1.3h-2.6zM261.6 207.7h2.6v1.3h-2.6zM268.1 232.4h1.3v1.3h-1.3zM256.6 212.3h1.3v1.3h-1.3zM253.5 234.5h2.6v1.3h-2.6zM259.2 229.3h2.6v2.6h-2.6zM228.7 224.3h1.3v1.3h-1.3zM227.0 239.3h2.6v2.6h-2.6zM232.6 218.5h1.3v1.3h-1.3zM240.6 236.0h1.3v1.3h-1.3zM228.4 220.3h2.6v1.3h-2.6zM272.1 213.9h1.3v1.3h-1.3zM263.3 225.4h1.3v1.3h-1.3zM248.2 238.3h2.6v2.6h-2.6zM257.2 222.9h1.3v2.6h-1.3zM252.5 221.9h1.3v2.6h-1.3zM258.6 226.7h2.6v1.3h-2.6zM231.7 217.4h1.3v1.3h-1.3zM243.9 227.7h1.3v1.3h-1.3zM228.2 230.5h1.3v1.3h-1.3zM253.4 220.9h1.3v2.6h-1.3zM268.3 221.8h2.6v1.3h-2.6zM232.8 209.2h1.3v1.3h-1.3zM241.0 226.7h2.6v1.3h-2.6zM228.5 220.9h1.3v2.6h-1.3zM224.1 221.0h1.3v1.3h-1.3zM234.3 221.9h2.6v1.3h-2.6zM238.5 243.5h2.6v1.3h-2.6zM232.2 216.2h2.6v1.3h-2.6zM260.5 202.8h1.3v2.6h-1.3zM253.3 208.7h1.3v2.6h-1.3zM235.1 223.8h1.3v1.3h-1.3zM226.6 205.4h1.3v1.3h-1.3zM233.5 233.2h1.3v1.3h-1.3zM214.3 204.6h2.6v1.3h-2.6zM258.8 214.4h1.3v2.6h-1.3zM225.5 224.5h1.3v2.6h-1.3zM218.8 212.5h2.6v1.3h-2.6zM230.8 225.4h1.3v1.3h-1.3zM254.8 226.3h2.6v2.6h-2.6zM245.9 225.3h1.3v1.3h-1.3z" fill="#00f890"/><path d="M256.0 236.6h2.6v2.6h-2.6zM230.9 207.6h1.3v1.3h-1.3zM214.4 220.3h1.3v1.3h-1.3zM263.7 218.0h1.3v1.3h-1.3zM241.1 228.3h1.3v2.6h-1.3zM272.0 205.2h2.6v1.3h-2.6zM267.0 227.1h1.3v1.3h-1.3zM255.5 209.4h2.6v2.6h-2.6zM235.0 225.1h2.6v2.6h-2.6zM219.8 207.0h1.3v1.3h-1.3zM256.1 236.1h1.3v1.3h-1.3zM221.6 200.4h1.3v1.3h-1.3zM251.7 225.3h1.3v1.3h-1.3zM232.8 224.7h2.6v1.3h-2.6zM266.0 203.6h1.3v1.3h-1.3zM270.0 224.0h1.3v1.3h-1.3zM261.3 230.5h1.3v2.6h-1.3zM267.4 232.3h2.6v1.3h-2.6zM260.7 219.1h1.3v2.6h-1.3zM256.5 206.5h1.3v1.3h-1.3zM261.9 231.5h1.3v1.3h-1.3zM225.9 227.3h1.3v2.6h-1.3zM252.5 226.5h1.3v2.6h-1.3zM246.8 233.0h1.3v2.6h-1.3zM228.8 201.8h1.3v1.3h-1.3zM266.8 219.2h1.3v1.3h-1.3zM251.2 230.3h1.3v1.3h-1.3zM238.2 228.6h1.3v2.6h-1.3zM219.0 196.9h1.3v1.3h-1.3zM232.0 213.3h2.6v1.3h-2.6zM226.1 226.9h2.6v1.3h-2.6zM253.1 220.4h1.3v2.6h-1.3zM265.0 235.0h1.3v1.3h-1.3zM239.8 238.4h1.3v1.3h-1.3zM238.3 239.6h1.3v2.6h-1.3zM264.6 222.2h1.3v1.3h-1.3zM260.6 238.7h1.3v1.3h-1.3zM248.4 237.7h1.3v1.3h-1.3zM223.2 204.4h1.3v2.6h-1.3zM224.0 212.0h2.6v2.6h-2.6zM241.9 232.0h1.3v1.3h-1.3zM255.9 221.8h1.3v2.6h-1.3zM261.3 219.4h1.3v2.6h-1.3zM224.3 227.7h2.6v1.3h-2.6zM251.6 235.0h1.3v1.3h-1.3zM223.3 227.8h1.3v1.3h-1.3zM257.0 239.9h1.3v2.6h-1.3zM227.8 227.0h1.3v2.6h-1.3zM223.9 208.2h1.3v2.6h-1.3zM263.2 216.6h1.3v1.3h-1.3zM257.3 208.4h2.6v2.6h-2.6zM232.3 212.8h2.6v1.3h-2.6zM233.7 222.1h1.3v1.3h-1.3zM227.1 217.2h1.3v1.3h-1.3z" fill="#0000ff"/><path d="M254.7 211.0h1.3v2.6h-1.3zM227.5 218.4h1.3v1.3h-1.3zM227.9 237.1h1.3v2.6h-1.3zM259.4 211.9h1.3v2.6h-1.3zM236.5 224.0h1.3v1.3h-1.3zM258.1 213.7h1.3v2.6h-1.3zM256.2 224.8h1.3v2.6h-1.3zM224.8 214.0h1.3v1.3h-1.3zM216.0 227.5h1.3v1.3h-1.3zM224.5 227.2h2.6v2.6h-2.6zM224.1 217.0h2.6v2.6h-2.6zM260.1 207.9h1.3v1.3h-1.3zM243.2 234.1h1.3v1.3h-1.3zM218.6 199.6h2.6v1.3h-2.6zM217.2 203.4h1.3v2.6h-1.3zM231.3 229.2h2.6v2.6h-2.6zM221.9 211.7h1.3v2.6h-1.3zM255.8 224.8h2.6v1.3h-2.6z" fill="#000"/><path d="M218.4 230.8h2.6v2.6h-2.6zM227.9 207.2h2.6v1.3h-2.6zM231.5 228.9h1.3v1.3h-1.3zM253.7 221.5h2.6v1.3h-2.6zM247.0 224.7h1.3v1.3h-1.3zM256.9 229.2h2.6v2.6h-2.6zM269.9 199.4h1.3v2.6h-1.3zM257.1 240.4h2.6v1.3h-2.6zM255.9 205.7h1.3v2.6h-1.3zM230.0 224.1h1.3v2.6h-1.3zM221.7 209.2h2.6v1.3h-2.6zM222.6 233.5h1.3v1.3h-1.3zM223.0 212.7h1.3v1.3h-1.3zM245.9 233.4h1.3v1.3h-1.3zM237.6 226.9h1.3v1.3h-1.3zM226.7 212.6h2.6v2.6h-2.6zM243.0 243.2h2.6v2.6h-2.6zM255.4 208.3h1.3v2.6h-1.3zM257.1 216.6h1.3v1.3h-1.3zM260.2 216.0h2.6v1.3h-2.6zM227.8 200.9h1.3v1.3h-1.3zM231.9 216.7h1.3v2.6h-1.3zM238.4 224.7h2.6v2.6h-2.6zM274.2 210.0h1.3v1.3h-1.3zM224.9 207.8h2.6v1.3h-2.6zM236.8 229.9h1.3v1.3h-1.3zM259.2 235.0h1.3v1.3h-1.3zM238.3 229.3h1.3v1.3h-1.3z" fill="#a8a8a8"/></g></g><path d="M78 102h11M83.5 96.5v11M78 184h11M83.5 178.5v11M78 265.5h11M83.5 260.0v11M78 346h11M83.5 340.5v11M158 102h11M163.5 96.5v11M158 184h11M163.5 178.5v11M158 265.5h11M163.5 260.0v11M158 346h11M163.5 340.5v11M238 102h11M243.5 96.5v11M238 184h11M243.5 178.5v11M238 265.5h11M243.5 260.0v11M238 346h11M243.5 340.5v11M319 102h11M324.5 96.5v11M319 184h11M324.5 178.5v11M319 265.5h11M324.5 260.0v11M319 346h11M324.5 340.5v11M399 102h11M404.5 96.5v11M399 184h11M404.5 178.5v11M399 265.5h11M404.5 260.0v11M399 346h11M404.5 340.5v11M479 102h11M484.5 96.5v11M479 184h11M484.5 178.5v11M479 265.5h11M484.5 260.0v11M479 346h11M484.5 340.5v11" stroke="#ffec8b" stroke-width="1" fill="none" shape-rendering="crispEdges"/><path d="M236.5 177h3v2h1v5h1.5v1.5h-8v-1.5h1.5v-5h1z" fill="#ff00ff"/><path d="M231 187.5l2-1.5l2 1.5l2-1.5l2 1.5l2-1.5l2 1.5l2-1.5" fill="none" stroke="#ff00ff" stroke-width="1"/><path d="M243.5 210h3v2h1v5h1.5v1.5h-8v-1.5h1.5v-5h1z" fill="#ff00ff"/><path d="M238 220.5l2-1.5l2 1.5l2-1.5l2 1.5l2-1.5l2 1.5l2-1.5" fill="none" stroke="#ff00ff" stroke-width="1"/><path d="M241.5 256h3v2h1v5h1.5v1.5h-8v-1.5h1.5v-5h1z" fill="#ff00ff"/><path d="M236 266.5l2-1.5l2 1.5l2-1.5l2 1.5l2-1.5l2 1.5l2-1.5" fill="none" stroke="#ff00ff" stroke-width="1"/><path d="M241.5 306h3v2h1v5h1.5v1.5h-8v-1.5h1.5v-5h1z" fill="#ff00ff"/><path d="M236 316.5l2-1.5l2 1.5l2-1.5l2 1.5l2-1.5l2 1.5l2-1.5" fill="none" stroke="#ff00ff" stroke-width="1"/><path d="M241.5 340h3v2h1v5h1.5v1.5h-8v-1.5h1.5v-5h1z" fill="#ff00ff"/><path d="M236 350.5l2-1.5l2 1.5l2-1.5l2 1.5l2-1.5l2 1.5l2-1.5" fill="none" stroke="#ff00ff" stroke-width="1"/><path d="M482.5 210h3v2h1v5h1.5v1.5h-8v-1.5h1.5v-5h1z" fill="#ff00ff"/><path d="M477 220.5l2-1.5l2 1.5l2-1.5l2 1.5l2-1.5l2 1.5l2-1.5" fill="none" stroke="#ff00ff" stroke-width="1"/><path d="M482.5 259h3v2h1v5h1.5v1.5h-8v-1.5h1.5v-5h1z" fill="#ff00ff"/><path d="M477 269.5l2-1.5l2 1.5l2-1.5l2 1.5l2-1.5l2 1.5l2-1.5" fill="none" stroke="#ff00ff" stroke-width="1"/><path d="M482.5 306h3v2h1v5h1.5v1.5h-8v-1.5h1.5v-5h1z" fill="#ff00ff"/><path d="M477 316.5l2-1.5l2 1.5l2-1.5l2 1.5l2-1.5l2 1.5l2-1.5" fill="none" stroke="#ff00ff" stroke-width="1"/><path d="M482.5 340h3v2h1v5h1.5v1.5h-8v-1.5h1.5v-5h1z" fill="#ff00ff"/><path d="M477 350.5l2-1.5l2 1.5l2-1.5l2 1.5l2-1.5l2 1.5l2-1.5" fill="none" stroke="#ff00ff" stroke-width="1"/><g shape-rendering="crispEdges"><path d="M485 34.5H572M487 237.5H572M487 375.5H572" stroke="#a0a0a0" stroke-width="1"/><defs><linearGradient id="irg" x1="0" y1="0" x2="0" y2="1"><stop offset="0" stop-color="#000"/><stop offset="1" stop-color="#e0e0e0"/></linearGradient></defs><rect x="489" y="60" width="10" height="95" fill="url(#irg)"/><rect x="489" y="155" width="10" height="17" fill="#0000ff"/><rect x="489" y="171" width="10" height="5" fill="#ff0000"/><rect x="489" y="176" width="10" height="4" fill="#ff9000"/><rect x="489" y="180" width="10" height="4" fill="#ffb0a0"/><rect x="489" y="184" width="10" height="3.5" fill="#ffff00"/><rect x="489" y="263" width="10" height="28" fill="#b22222"/><rect x="489" y="291" width="10" height="28" fill="#ffa07a"/><rect x="489" y="319" width="10" height="28" fill="#ffff80"/><rect x="489" y="347" width="10" height="28" fill="#00ee90"/></g></svg>
<div class="t" style="left:8.6px;top:26.5px;font-size:24px;color:#fff;letter-spacing:0.37px;"><span style="color:#ffff00;letter-spacing:-0.06px;margin-right:-3px">24−aug−1997,01:05:00</span>  ir plot.  Rhb_lowprf maxdz</div>
<div class="t" style="left:10.25px;top:57px;font-size:24px;color:#fff;letter-spacing:0.63px;">filled contour.</div>
<div class="t" style="left:2px;width:32px;text-align:right;top:102px;font-size:17px;color:#ffec8b">15</div>
<div class="t" style="left:2px;width:32px;text-align:right;top:182px;font-size:17px;color:#ffec8b">10</div>
<div class="t" style="left:2px;width:32px;text-align:right;top:265px;font-size:17px;color:#ffec8b">5</div>
<div class="t" style="left:2px;width:32px;text-align:right;top:345px;font-size:17px;color:#ffec8b">0</div>
<div class="t" style="left:53px;width:60px;text-align:center;top:373px;font-size:17px;color:#ffec8b">−135</div>
<div class="t" style="left:133px;width:60px;text-align:center;top:373px;font-size:17px;color:#ffec8b">−130</div>
<div class="t" style="left:213px;width:60px;text-align:center;top:373px;font-size:17px;color:#ffec8b">−125</div>
<div class="t" style="left:294px;width:60px;text-align:center;top:373px;font-size:17px;color:#ffec8b">−120</div>
<div class="t" style="left:374px;width:60px;text-align:center;top:373px;font-size:17px;color:#ffec8b">−115</div>
<div class="t" style="left:463px;top:373px;font-size:17px;color:#ffec8b">−110</div>
<div style="left:489px;top:347px;width:10px;height:28px;background:#00ee90;"></div>
<div class="t" style="left:489px;top:46px;font-size:17px;color:#fff;">ir</div>
<div class="t" style="left:505px;top:68.5px;font-size:17px;color:#fff;">387.0</div>
<div class="t" style="left:505px;top:90.7px;font-size:17px;color:#fff;">351.0</div>
<div class="t" style="left:505px;top:112.9px;font-size:17px;color:#fff;">315.0</div>
<div class="t" style="left:505px;top:135.1px;font-size:17px;color:#fff;">279.0</div>
<div class="t" style="left:505px;top:157.3px;font-size:17px;color:#fff;">243.0</div>
<div class="t" style="left:505px;top:179.5px;font-size:17px;color:#fff;">207.0</div>
<div class="t" style="left:489px;top:256px;font-size:17px;color:#fff;">maxdz</div>
<div class="t" style="left:505px;top:285.5px;font-size:17px;color:#fff;">55.0</div>
<div class="t" style="left:505px;top:313.5px;font-size:17px;color:#fff;">45.0</div>
<div class="t" style="left:505px;top:341.5px;font-size:17px;color:#fff;">35.0</div>
<div class="t" style="left:505px;top:369.5px;font-size:17px;color:#fff;">25.0</div>
<div class="ic" style="left:5px;top:376px;width:46px;height:47px;"><svg width="46" height="47" viewBox="0 0 46 47" style="left:-1px;top:-1px"><path d="M6.5 12.5C9 8 13 6.5 17 7.5S27 11 32 11.5S37 10 38.5 8.5C28 16 20 24 6 39.5C10 36 14 35 18 36S28 40.5 32 40.5S37 38.5 38.5 36" fill="none" stroke="#ffff00" stroke-width="1.4" stroke-linejoin="round" stroke-linecap="round"/><path d="M38.5 8.5C28 16 20 24 6 39.5" fill="none" stroke="#ffff00" stroke-width="2.0"/></svg></div><div class="ic" style="left:52px;top:376px;width:46px;height:47px;"><svg width="46" height="47" viewBox="0 0 46 47" style="left:-1px;top:-1px"><defs><pattern id="gd1" width="2" height="2" patternUnits="userSpaceOnUse"><rect width="1" height="1" fill="#ffff00"/><rect x="1" y="1" width="1" height="1" fill="#ffff00"/></pattern></defs><text x="3" y="16.5" font-family="Liberation Sans" font-weight="bold" font-size="14.5" fill="#ffff00" textLength="31" lengthAdjust="spacingAndGlyphs">GOES</text><path d="M3 17h4c8 1 14 8 16 16v10h-20z" fill="url(#gd1)"/><path d="M3 37c4-2 8-1 9 3v3h-9zM14 25c3 0 7 4 8 9c-4 0-8-4-8-9zM3 17h4l-4 4z" fill="#ffff00"/><path d="M23 25l15-3M24 32l14-9" stroke="#ffff00" stroke-width="1" stroke-dasharray="1 1.5" fill="none"/><path d="M40 18.5l3 3l-3 3l-3-3z" fill="#ffff00"/><text x="25" y="43" font-family="Liberation Sans" font-size="10" fill="#ffff00" letter-spacing="0.5">.IR</text></svg></div><div class="ic" style="left:99px;top:376px;width:46px;height:47px;"><svg width="46" height="47" viewBox="0 0 46 47" style="left:-1px;top:-1px"><g transform="translate(0 3)"><path d="M6 9C8 20 16 28 27 30" fill="none" stroke="#ffff00" stroke-width="1.8"/><path d="M11 22h5v-5" fill="none" stroke="#ffff00" stroke-width="1"/><path d="M12 24h3l2 11h2v5h-9v-5h1z" fill="#ffff00"/></g><text x="36" y="15.0" font-family="Liberation Sans" font-size="11" text-anchor="middle" fill="#ffff00">S</text><text x="36" y="27.5" font-family="Liberation Sans" font-size="11" text-anchor="middle" fill="#ffff00">U</text><text x="36" y="40.0" font-family="Liberation Sans" font-size="11" text-anchor="middle" fill="#ffff00">R</text></svg></div><div class="ig" style="left:146px;top:376px;width:46px;height:47px;"><svg width="46" height="47" viewBox="0 0 46 47" style="left:-1px;top:-1px"><g fill="none" stroke="#e0e0e0" stroke-width="1.4"><rect x="5.5" y="5.5" width="35" height="36"/><path d="M14.2 5.5v36M23 5.5v36M31.8 5.5v36M5.5 14.5h35M5.5 23.5h35M5.5 32.5h35"/></g><path d="M12 8C14 18 20 27 30 30" fill="none" stroke="#e0e0e0" stroke-width="1.8"/><path d="M17 24h3l2 10h2v5h-9v-5h1z" fill="#e0e0e0"/></svg></div><div class="ig" style="left:193px;top:376px;width:14px;height:47px;"><svg width="14" height="47" viewBox="0 0 14 47" style="left:-1px;top:-1px"><text x="7" y="9.5" font-family="Liberation Sans" font-weight="bold" font-size="6.5" text-anchor="middle" fill="#e0e0e0">B</text><text x="7" y="16.1" font-family="Liberation Sans" font-weight="bold" font-size="6.5" text-anchor="middle" fill="#e0e0e0">O</text><text x="7" y="22.7" font-family="Liberation Sans" font-weight="bold" font-size="6.5" text-anchor="middle" fill="#e0e0e0">U</text><text x="7" y="29.299999999999997" font-family="Liberation Sans" font-weight="bold" font-size="6.5" text-anchor="middle" fill="#e0e0e0">N</text><text x="7" y="35.9" font-family="Liberation Sans" font-weight="bold" font-size="6.5" text-anchor="middle" fill="#e0e0e0">D</text><text x="7" y="42.5" font-family="Liberation Sans" font-weight="bold" font-size="6.5" text-anchor="middle" fill="#e0e0e0">S</text></svg></div><div class="ic" style="left:208px;top:399px;width:22px;height:24px;"><svg width="22" height="24" viewBox="0 0 22 24" style="left:-1px;top:-1px"><g fill="none" stroke="#ffff00" stroke-width="1.3"><rect x="3.5" y="4.5" width="15" height="15"/><path d="M8.5 4.5v15M13.5 4.5v15M3.5 9.5h15M3.5 14.5h15"/></g></svg></div><div class="ic" style="left:231px;top:376px;width:21px;height:47px;"><svg width="21" height="47" viewBox="0 0 21 47" style="left:-1px;top:-1px"><path d="M3 5l5-1l-1 5l-3 1zM9 4h5l-3 4zM4 13l3-2l1 3zM10 9l4 1l1 4l-3-1zM13 4l4 0l-2 3z" fill="#ffff00"/><text x="10.5" y="26.0" font-family="Liberation Sans" font-size="8.5" text-anchor="middle" fill="#ffff00">M</text><text x="10.5" y="33.5" font-family="Liberation Sans" font-size="8.5" text-anchor="middle" fill="#ffff00">A</text><text x="10.5" y="41.0" font-family="Liberation Sans" font-size="8.5" text-anchor="middle" fill="#ffff00">P</text></svg></div><div class="ig" style="left:253px;top:376px;width:21px;height:47px;"><svg width="21" height="47" viewBox="0 0 21 47" style="left:-1px;top:-1px"><g fill="none" stroke="#e0e0e0" stroke-width="1"><circle cx="10.5" cy="27" r="7.5"/><circle cx="10.5" cy="27" r="4.7"/><circle cx="10.5" cy="27" r="2.2"/><path d="M12.8 27.0L18.0 27.0"/><path d="M12.1 28.6L15.8 32.3"/><path d="M10.5 29.2L10.5 34.5"/><path d="M8.9 28.6L5.2 32.3"/><path d="M8.2 27.0L3.0 27.0"/><path d="M8.9 25.4L5.2 21.7"/><path d="M10.5 24.8L10.5 19.5"/><path d="M12.1 25.4L15.8 21.7"/></g></svg></div><div class="ic" style="left:275px;top:399px;width:22px;height:24px;"><svg width="22" height="24" viewBox="0 0 22 24" style="left:-1px;top:-1px"><path d="M9.5 5h3v2h1.5v6h1.5v2h-9v-2h1.5v-6h1.5z" fill="#ffff00"/><path d="M3 18l2-1.5l2 1.5l2-1.5l2 1.5l2-1.5l2 1.5l2-1.5l2 1.5" fill="none" stroke="#ffff00" stroke-width="1.2"/></svg></div><div class="ig" style="left:298px;top:376px;width:46px;height:47px;"><svg width="46" height="47" viewBox="0 0 46 47" style="left:-1px;top:-1px"><g transform="translate(0 0)"><path d="M3 44v-5l2 2l2.5-2l2.5 2l2.5-2l2.5 2l2.5-2l2.5 2l2.5-2l2.5 2l2.5-2l2.5 2l2.5-2l2.5 2l2-2v5z" fill="#e0e0e0"/><g fill="none" stroke="#e0e0e0" stroke-width="1.2"><path d="M6 33h33l-3 7M6 33l2 6M8 33v-8h4l2 8"/><circle cx="22" cy="24" r="3.2"/><path d="M21 27v6M23 27v6M34.5 16v17"/></g></g></svg></div>
<div style="left:5px;top:426px;width:569px;height:446px;background:#000;border-top:1px dotted #fff;border-right:1px dotted #fff;border-bottom:1px dotted #999;"></div>
<svg width="1280" height="1024"><g shape-rendering="crispEdges"><path d="M290 463h7v3.5h-7zM290 466.5h7v3.5h-7zM276 470h7v3.5h-7zM290 470h7v3.5h-7zM276 473.5h7v3.5h-7zM290 473.5h7v3.5h-7zM157 505h21v3.5h-21zM157 508.5h3.5v3.5h-3.5zM171 508.5h10.5v3.5h-10.5zM153.5 512h7v3.5h-7zM171 512h14v3.5h-14zM153.5 515.5h7v3.5h-7zM171 515.5h14v3.5h-14zM150 519h35v3.5h-35zM139.5 522.5h21v3.5h-21zM164 522.5h31.5v3.5h-31.5zM136 526h24.5v3.5h-24.5zM167.5 526h28v3.5h-28zM136 529.5h24.5v3.5h-24.5zM171 529.5h3.5v3.5h-3.5zM185 529.5h10.5v3.5h-10.5zM132.5 533h24.5v3.5h-24.5zM132.5 536.5h24.5v3.5h-24.5zM167.5 536.5h14v3.5h-14zM129 540h24.5v3.5h-24.5zM167.5 540h14v3.5h-14zM125.5 543.5h7v3.5h-7zM167.5 543.5h14v3.5h-14zM122 547h17.5v3.5h-17.5zM167.5 547h14v3.5h-14zM290 547h7v3.5h-7zM402 547h7v3.5h-7zM122 550.5h17.5v3.5h-17.5zM167.5 550.5h14v3.5h-14zM195.5 550.5h10.5v3.5h-10.5zM286.5 550.5h3.5v3.5h-3.5zM300.5 550.5h3.5v3.5h-3.5zM402 550.5h7v3.5h-7zM118.5 554h24.5v3.5h-24.5zM167.5 554h14v3.5h-14zM195.5 554h10.5v3.5h-10.5zM286.5 554h3.5v3.5h-3.5zM297 554h14v3.5h-14zM402 554h14v3.5h-14zM195.5 557.5h10.5v3.5h-10.5zM297 557.5h14v3.5h-14zM402 557.5h14v3.5h-14zM297 564.5h3.5v3.5h-3.5zM412.5 564.5h17.5v3.5h-17.5zM195.5 568h3.5v3.5h-3.5zM202.5 568h3.5v3.5h-3.5zM307.5 568h3.5v3.5h-3.5zM412.5 568h17.5v3.5h-17.5zM195.5 571.5h3.5v3.5h-3.5zM213 571.5h7v3.5h-7zM290 571.5h3.5v3.5h-3.5zM307.5 571.5h3.5v3.5h-3.5zM342.5 571.5h10.5v3.5h-10.5zM409 571.5h7v3.5h-7zM419.5 571.5h14v3.5h-14zM342.5 575h10.5v3.5h-10.5zM391.5 575h3.5v3.5h-3.5zM423 575h10.5v3.5h-10.5zM195.5 578.5h7v3.5h-7zM230.5 578.5h3.5v3.5h-3.5zM342.5 578.5h10.5v3.5h-10.5zM381 578.5h14v3.5h-14zM430 578.5h3.5v3.5h-3.5zM136 582h14v3.5h-14zM192 582h7v3.5h-7zM213 582h7v3.5h-7zM237.5 582h3.5v3.5h-3.5zM342.5 582h10.5v3.5h-10.5zM381 582h14v3.5h-14zM402 582h3.5v3.5h-3.5zM108 585.5h3.5v3.5h-3.5zM139.5 585.5h7v3.5h-7zM195.5 585.5h7v3.5h-7zM209.5 585.5h7v3.5h-7zM377.5 585.5h21v3.5h-21zM402 585.5h7v3.5h-7zM433.5 585.5h3.5v3.5h-3.5zM192 589h3.5v3.5h-3.5zM213 589h7v3.5h-7zM377.5 589h21v3.5h-21zM402 589h7v3.5h-7zM433.5 589h3.5v3.5h-3.5zM115 592.5h31.5v3.5h-31.5zM202.5 592.5h10.5v3.5h-10.5zM377.5 592.5h17.5v3.5h-17.5zM398.5 592.5h3.5v3.5h-3.5zM433.5 592.5h3.5v3.5h-3.5zM115 596h28v3.5h-28zM202.5 596h10.5v3.5h-10.5zM377.5 596h17.5v3.5h-17.5zM398.5 596h3.5v3.5h-3.5zM433.5 596h3.5v3.5h-3.5zM122 599.5h7v3.5h-7zM136 599.5h7v3.5h-7zM199 599.5h3.5v3.5h-3.5zM206 599.5h14v3.5h-14zM377.5 599.5h14v3.5h-14zM398.5 599.5h3.5v3.5h-3.5zM416 599.5h3.5v3.5h-3.5zM433.5 599.5h7v3.5h-7zM125.5 603h7v3.5h-7zM139.5 603h7v3.5h-7zM199 603h3.5v3.5h-3.5zM206 603h14v3.5h-14zM360 603h7v3.5h-7zM416 603h24.5v3.5h-24.5zM125.5 606.5h10.5v3.5h-10.5zM143 606.5h7v3.5h-7zM416 606.5h24.5v3.5h-24.5zM115 610h3.5v3.5h-3.5zM129 610h7v3.5h-7zM139.5 610h10.5v3.5h-10.5zM377.5 610h3.5v3.5h-3.5zM384.5 610h3.5v3.5h-3.5zM395 610h3.5v3.5h-3.5zM402 610h35v3.5h-35zM115 613.5h3.5v3.5h-3.5zM129 613.5h7v3.5h-7zM139.5 613.5h14v3.5h-14zM377.5 613.5h3.5v3.5h-3.5zM409 613.5h28v3.5h-28zM104.5 617h17.5v3.5h-17.5zM132.5 617h21v3.5h-21zM300.5 617h3.5v3.5h-3.5zM311 617h3.5v3.5h-3.5zM381 617h21v3.5h-21zM412.5 617h24.5v3.5h-24.5zM104.5 620.5h7v3.5h-7zM122 620.5h35v3.5h-35zM304 620.5h3.5v3.5h-3.5zM363.5 620.5h10.5v3.5h-10.5zM104.5 624h7v3.5h-7zM122 624h14v3.5h-14zM143 624h3.5v3.5h-3.5zM174.5 624h3.5v3.5h-3.5zM363.5 624h3.5v3.5h-3.5zM108 627.5h3.5v3.5h-3.5zM125.5 627.5h3.5v3.5h-3.5zM174.5 627.5h7v3.5h-7zM363.5 627.5h3.5v3.5h-3.5zM370.5 627.5h3.5v3.5h-3.5zM104.5 631h7v3.5h-7zM129 631h3.5v3.5h-3.5zM136 631h3.5v3.5h-3.5zM171 631h7v3.5h-7zM199 631h3.5v3.5h-3.5zM311 631h3.5v3.5h-3.5zM108 634.5h21v3.5h-21zM311 634.5h10.5v3.5h-10.5zM115 638h10.5v3.5h-10.5zM129 638h3.5v3.5h-3.5zM171 638h3.5v3.5h-3.5zM321.5 638h3.5v3.5h-3.5zM353 638h3.5v3.5h-3.5zM360 638h3.5v3.5h-3.5zM367 638h3.5v3.5h-3.5zM377.5 638h3.5v3.5h-3.5zM384.5 638h3.5v3.5h-3.5zM115 641.5h10.5v3.5h-10.5zM129 641.5h3.5v3.5h-3.5zM171 641.5h3.5v3.5h-3.5zM209.5 641.5h3.5v3.5h-3.5zM367 641.5h3.5v3.5h-3.5zM377.5 641.5h3.5v3.5h-3.5zM388 641.5h3.5v3.5h-3.5zM395 641.5h10.5v3.5h-10.5zM115 645h10.5v3.5h-10.5zM356.5 645h3.5v3.5h-3.5zM363.5 645h3.5v3.5h-3.5zM381 645h7v3.5h-7zM395 645h3.5v3.5h-3.5zM237.5 648.5h3.5v3.5h-3.5zM293.5 648.5h3.5v3.5h-3.5zM300.5 648.5h3.5v3.5h-3.5zM321.5 648.5h3.5v3.5h-3.5zM360 648.5h3.5v3.5h-3.5zM388 648.5h3.5v3.5h-3.5zM398.5 648.5h10.5v3.5h-10.5zM202.5 652h3.5v3.5h-3.5zM244.5 652h3.5v3.5h-3.5zM300.5 652h3.5v3.5h-3.5zM363.5 652h7v3.5h-7zM374 652h7v3.5h-7zM395 652h10.5v3.5h-10.5zM216.5 655.5h3.5v3.5h-3.5zM262 655.5h3.5v3.5h-3.5zM367 655.5h3.5v3.5h-3.5zM377.5 655.5h3.5v3.5h-3.5zM388 655.5h3.5v3.5h-3.5zM160.5 659h3.5v3.5h-3.5zM199 659h3.5v3.5h-3.5zM269 659h7v3.5h-7zM286.5 659h3.5v3.5h-3.5zM370.5 659h3.5v3.5h-3.5zM377.5 659h10.5v3.5h-10.5zM143 662.5h7v3.5h-7zM160.5 662.5h7v3.5h-7zM195.5 662.5h3.5v3.5h-3.5zM206 662.5h3.5v3.5h-3.5zM216.5 662.5h3.5v3.5h-3.5zM244.5 662.5h3.5v3.5h-3.5zM258.5 662.5h7v3.5h-7zM269 662.5h3.5v3.5h-3.5zM279.5 662.5h3.5v3.5h-3.5zM290 662.5h3.5v3.5h-3.5zM395 662.5h3.5v3.5h-3.5zM402 662.5h7v3.5h-7zM139.5 666h7v3.5h-7zM164 666h3.5v3.5h-3.5zM206 666h3.5v3.5h-3.5zM216.5 666h10.5v3.5h-10.5zM255 666h3.5v3.5h-3.5zM353 666h3.5v3.5h-3.5zM391.5 666h3.5v3.5h-3.5zM398.5 666h7v3.5h-7zM409 666h10.5v3.5h-10.5zM164 669.5h3.5v3.5h-3.5zM178 669.5h3.5v3.5h-3.5zM223.5 669.5h3.5v3.5h-3.5zM276 669.5h10.5v3.5h-10.5zM377.5 669.5h7v3.5h-7zM398.5 669.5h3.5v3.5h-3.5zM409 669.5h10.5v3.5h-10.5zM164 673h3.5v3.5h-3.5zM174.5 673h3.5v3.5h-3.5zM230.5 673h3.5v3.5h-3.5zM258.5 673h3.5v3.5h-3.5zM297 673h3.5v3.5h-3.5zM377.5 673h3.5v3.5h-3.5zM388 673h3.5v3.5h-3.5zM398.5 673h3.5v3.5h-3.5zM405.5 673h28v3.5h-28zM157 676.5h3.5v3.5h-3.5zM374 676.5h3.5v3.5h-3.5zM381 676.5h3.5v3.5h-3.5zM395 676.5h7v3.5h-7zM409 676.5h24.5v3.5h-24.5zM125.5 680h10.5v3.5h-10.5zM157 680h7v3.5h-7zM174.5 680h10.5v3.5h-10.5zM188.5 680h3.5v3.5h-3.5zM262 680h3.5v3.5h-3.5zM367 680h3.5v3.5h-3.5zM377.5 680h3.5v3.5h-3.5zM388 680h3.5v3.5h-3.5zM409 680h24.5v3.5h-24.5zM125.5 683.5h17.5v3.5h-17.5zM167.5 683.5h3.5v3.5h-3.5zM185 683.5h3.5v3.5h-3.5zM195.5 683.5h3.5v3.5h-3.5zM223.5 683.5h3.5v3.5h-3.5zM290 683.5h7v3.5h-7zM332 683.5h7v3.5h-7zM409 683.5h21v3.5h-21zM125.5 687h28v3.5h-28zM220 687h7v3.5h-7zM269 687h7v3.5h-7zM279.5 687h3.5v3.5h-3.5zM335.5 687h3.5v3.5h-3.5zM377.5 687h3.5v3.5h-3.5zM391.5 687h3.5v3.5h-3.5zM409 687h21v3.5h-21zM125.5 690.5h35v3.5h-35zM167.5 690.5h24.5v3.5h-24.5zM206 690.5h3.5v3.5h-3.5zM216.5 690.5h7v3.5h-7zM227 690.5h7v3.5h-7zM297 690.5h7v3.5h-7zM388 690.5h17.5v3.5h-17.5zM416 690.5h3.5v3.5h-3.5zM125.5 694h35v3.5h-35zM167.5 694h35v3.5h-35zM206 694h3.5v3.5h-3.5zM216.5 694h10.5v3.5h-10.5zM262 694h7v3.5h-7zM286.5 694h3.5v3.5h-3.5zM297 694h3.5v3.5h-3.5zM384.5 694h14v3.5h-14zM125.5 697.5h28v3.5h-28zM167.5 697.5h31.5v3.5h-31.5zM206 697.5h3.5v3.5h-3.5zM216.5 697.5h3.5v3.5h-3.5zM262 697.5h7v3.5h-7zM276 697.5h3.5v3.5h-3.5zM286.5 697.5h3.5v3.5h-3.5zM297 697.5h3.5v3.5h-3.5zM363.5 697.5h7v3.5h-7zM388 697.5h10.5v3.5h-10.5zM129 701h24.5v3.5h-24.5zM167.5 701h7v3.5h-7zM185 701h14v3.5h-14zM202.5 701h3.5v3.5h-3.5zM213 701h7v3.5h-7zM269 701h38.5v3.5h-38.5zM388 701h10.5v3.5h-10.5zM136 704.5h17.5v3.5h-17.5zM167.5 704.5h7v3.5h-7zM185 704.5h28v3.5h-28zM227 704.5h3.5v3.5h-3.5zM276 704.5h10.5v3.5h-10.5zM293.5 704.5h3.5v3.5h-3.5zM388 704.5h3.5v3.5h-3.5zM395 704.5h3.5v3.5h-3.5zM136 708h10.5v3.5h-10.5zM167.5 708h7v3.5h-7zM185 708h7v3.5h-7zM199 708h14v3.5h-14zM388 708h7v3.5h-7zM136 711.5h7v3.5h-7zM167.5 711.5h24.5v3.5h-24.5zM199 711.5h3.5v3.5h-3.5zM206 711.5h3.5v3.5h-3.5zM223.5 711.5h3.5v3.5h-3.5zM230.5 711.5h3.5v3.5h-3.5zM269 711.5h7v3.5h-7zM388 711.5h3.5v3.5h-3.5zM395 711.5h3.5v3.5h-3.5zM185 715h10.5v3.5h-10.5zM209.5 715h3.5v3.5h-3.5zM241 715h3.5v3.5h-3.5zM248 715h24.5v3.5h-24.5zM276 715h3.5v3.5h-3.5zM388 715h10.5v3.5h-10.5zM185 718.5h3.5v3.5h-3.5zM192 718.5h3.5v3.5h-3.5zM202.5 718.5h3.5v3.5h-3.5zM209.5 718.5h3.5v3.5h-3.5zM248 718.5h21v3.5h-21zM276 718.5h7v3.5h-7zM388 718.5h10.5v3.5h-10.5zM248 722h31.5v3.5h-31.5zM391.5 722h7v3.5h-7zM209.5 725.5h3.5v3.5h-3.5zM248 725.5h21v3.5h-21zM388 725.5h10.5v3.5h-10.5zM206 729h3.5v3.5h-3.5zM213 729h3.5v3.5h-3.5zM279.5 729h3.5v3.5h-3.5zM388 729h3.5v3.5h-3.5zM395 729h3.5v3.5h-3.5zM174.5 732.5h3.5v3.5h-3.5zM188.5 732.5h3.5v3.5h-3.5zM279.5 732.5h3.5v3.5h-3.5zM318 732.5h10.5v3.5h-10.5zM388 732.5h3.5v3.5h-3.5zM395 732.5h3.5v3.5h-3.5zM171 736h10.5v3.5h-10.5zM188.5 736h7v3.5h-7zM199 736h3.5v3.5h-3.5zM213 736h3.5v3.5h-3.5zM318 736h10.5v3.5h-10.5zM388 736h10.5v3.5h-10.5zM164 739.5h21v3.5h-21zM192 739.5h7v3.5h-7zM209.5 739.5h7v3.5h-7zM244.5 739.5h17.5v3.5h-17.5zM318 739.5h10.5v3.5h-10.5zM388 739.5h10.5v3.5h-10.5zM164 743h28v3.5h-28zM244.5 743h3.5v3.5h-3.5zM255 743h7v3.5h-7zM321.5 743h10.5v3.5h-10.5zM342.5 743h3.5v3.5h-3.5zM360 743h17.5v3.5h-17.5zM384.5 743h10.5v3.5h-10.5zM167.5 746.5h24.5v3.5h-24.5zM244.5 746.5h3.5v3.5h-3.5zM255 746.5h7v3.5h-7zM321.5 746.5h10.5v3.5h-10.5zM335.5 746.5h10.5v3.5h-10.5zM360 746.5h17.5v3.5h-17.5zM384.5 746.5h3.5v3.5h-3.5zM157 750h3.5v3.5h-3.5zM167.5 750h24.5v3.5h-24.5zM244.5 750h3.5v3.5h-3.5zM255 750h7v3.5h-7zM321.5 750h24.5v3.5h-24.5zM360 750h21v3.5h-21zM167.5 753.5h24.5v3.5h-24.5zM244.5 753.5h17.5v3.5h-17.5zM321.5 753.5h24.5v3.5h-24.5zM360 753.5h17.5v3.5h-17.5zM171 757h24.5v3.5h-24.5zM325 757h17.5v3.5h-17.5zM360 757h17.5v3.5h-17.5zM174.5 760.5h28v3.5h-28zM286.5 760.5h3.5v3.5h-3.5zM325 760.5h14v3.5h-14zM174.5 764h45.5v3.5h-45.5zM223.5 764h7v3.5h-7zM234 764h24.5v3.5h-24.5zM262 764h3.5v3.5h-3.5zM325 764h10.5v3.5h-10.5zM342.5 764h24.5v3.5h-24.5zM185 767.5h52.5v3.5h-52.5zM244.5 767.5h3.5v3.5h-3.5zM251.5 767.5h3.5v3.5h-3.5zM262 767.5h7v3.5h-7zM342.5 767.5h21v3.5h-21zM188.5 771h49v3.5h-49zM262 771h3.5v3.5h-3.5zM342.5 771h14v3.5h-14zM192 774.5h3.5v3.5h-3.5zM209.5 774.5h24.5v3.5h-24.5zM237.5 774.5h7v3.5h-7zM248 774.5h3.5v3.5h-3.5zM258.5 774.5h7v3.5h-7zM342.5 774.5h10.5v3.5h-10.5zM216.5 778h7v3.5h-7zM262 778h3.5v3.5h-3.5zM300.5 778h10.5v3.5h-10.5zM258.5 781.5h3.5v3.5h-3.5zM300.5 781.5h10.5v3.5h-10.5zM227 785h3.5v3.5h-3.5zM255 785h56v3.5h-56zM314.5 785h3.5v3.5h-3.5zM255 788.5h56v3.5h-56zM255 792h3.5v3.5h-3.5zM269 792h31.5v3.5h-31.5z" fill="#007048"/><path d="M216.5 512h17.5v3.5h-17.5zM216.5 515.5h17.5v3.5h-17.5zM216.5 519h17.5v3.5h-17.5zM216.5 522.5h17.5v3.5h-17.5zM216.5 526h21v3.5h-21zM195.5 529.5h10.5v3.5h-10.5zM230.5 529.5h14v3.5h-14zM195.5 533h14v3.5h-14zM237.5 533h7v3.5h-7zM195.5 536.5h14v3.5h-14zM286.5 547h3.5v3.5h-3.5zM304 547h3.5v3.5h-3.5zM409 547h7v3.5h-7zM150 550.5h10.5v3.5h-10.5zM290 550.5h3.5v3.5h-3.5zM304 550.5h7v3.5h-7zM409 550.5h7v3.5h-7zM150 554h10.5v3.5h-10.5zM181.5 554h14v3.5h-14zM293.5 554h3.5v3.5h-3.5zM150 557.5h10.5v3.5h-10.5zM181.5 557.5h14v3.5h-14zM293.5 557.5h3.5v3.5h-3.5zM181.5 561h21v3.5h-21zM206 561h3.5v3.5h-3.5zM300.5 561h7v3.5h-7zM188.5 564.5h14v3.5h-14zM286.5 564.5h10.5v3.5h-10.5zM300.5 564.5h10.5v3.5h-10.5zM318 564.5h35v3.5h-35zM192 568h3.5v3.5h-3.5zM206 568h10.5v3.5h-10.5zM290 568h3.5v3.5h-3.5zM339 568h14v3.5h-14zM192 571.5h3.5v3.5h-3.5zM202.5 571.5h10.5v3.5h-10.5zM262 571.5h3.5v3.5h-3.5zM199 575h31.5v3.5h-31.5zM262 575h3.5v3.5h-3.5zM377.5 575h14v3.5h-14zM202.5 578.5h28v3.5h-28zM290 578.5h7v3.5h-7zM318 578.5h14v3.5h-14zM377.5 578.5h3.5v3.5h-3.5zM188.5 582h3.5v3.5h-3.5zM220 582h10.5v3.5h-10.5zM265.5 582h7v3.5h-7zM286.5 582h7v3.5h-7zM318 582h3.5v3.5h-3.5zM328.5 582h14v3.5h-14zM353 582h28v3.5h-28zM136 585.5h3.5v3.5h-3.5zM202.5 585.5h7v3.5h-7zM216.5 585.5h3.5v3.5h-3.5zM251.5 585.5h10.5v3.5h-10.5zM269 585.5h3.5v3.5h-3.5zM318 585.5h3.5v3.5h-3.5zM328.5 585.5h3.5v3.5h-3.5zM353 585.5h3.5v3.5h-3.5zM370.5 585.5h7v3.5h-7zM139.5 589h10.5v3.5h-10.5zM195.5 589h17.5v3.5h-17.5zM241 589h3.5v3.5h-3.5zM328.5 589h3.5v3.5h-3.5zM353 589h3.5v3.5h-3.5zM374 589h3.5v3.5h-3.5zM146.5 592.5h3.5v3.5h-3.5zM199 592.5h3.5v3.5h-3.5zM213 592.5h10.5v3.5h-10.5zM234 592.5h3.5v3.5h-3.5zM262 592.5h7v3.5h-7zM272.5 592.5h3.5v3.5h-3.5zM325 592.5h7v3.5h-7zM353 592.5h3.5v3.5h-3.5zM374 592.5h3.5v3.5h-3.5zM395 592.5h3.5v3.5h-3.5zM199 596h3.5v3.5h-3.5zM213 596h7v3.5h-7zM353 596h7v3.5h-7zM374 596h3.5v3.5h-3.5zM146.5 599.5h3.5v3.5h-3.5zM202.5 599.5h3.5v3.5h-3.5zM220 599.5h3.5v3.5h-3.5zM244.5 599.5h3.5v3.5h-3.5zM328.5 599.5h3.5v3.5h-3.5zM353 599.5h24.5v3.5h-24.5zM391.5 599.5h3.5v3.5h-3.5zM136 603h3.5v3.5h-3.5zM146.5 603h3.5v3.5h-3.5zM188.5 603h3.5v3.5h-3.5zM202.5 603h3.5v3.5h-3.5zM342.5 603h10.5v3.5h-10.5zM388 603h14v3.5h-14zM139.5 606.5h3.5v3.5h-3.5zM150 606.5h3.5v3.5h-3.5zM213 606.5h3.5v3.5h-3.5zM227 606.5h3.5v3.5h-3.5zM234 606.5h3.5v3.5h-3.5zM248 606.5h3.5v3.5h-3.5zM342.5 606.5h10.5v3.5h-10.5zM374 606.5h10.5v3.5h-10.5zM388 606.5h14v3.5h-14zM136 610h3.5v3.5h-3.5zM150 610h7v3.5h-7zM188.5 610h10.5v3.5h-10.5zM206 610h3.5v3.5h-3.5zM213 610h3.5v3.5h-3.5zM220 610h3.5v3.5h-3.5zM230.5 610h3.5v3.5h-3.5zM262 610h3.5v3.5h-3.5zM276 610h3.5v3.5h-3.5zM325 610h3.5v3.5h-3.5zM349.5 610h10.5v3.5h-10.5zM363.5 610h3.5v3.5h-3.5zM388 610h7v3.5h-7zM136 613.5h3.5v3.5h-3.5zM192 613.5h3.5v3.5h-3.5zM216.5 613.5h3.5v3.5h-3.5zM230.5 613.5h3.5v3.5h-3.5zM258.5 613.5h3.5v3.5h-3.5zM265.5 613.5h3.5v3.5h-3.5zM279.5 613.5h3.5v3.5h-3.5zM297 613.5h3.5v3.5h-3.5zM349.5 613.5h10.5v3.5h-10.5zM363.5 613.5h7v3.5h-7zM381 613.5h14v3.5h-14zM153.5 617h10.5v3.5h-10.5zM199 617h3.5v3.5h-3.5zM251.5 617h14v3.5h-14zM279.5 617h7v3.5h-7zM304 617h3.5v3.5h-3.5zM314.5 617h3.5v3.5h-3.5zM328.5 617h3.5v3.5h-3.5zM339 617h7v3.5h-7zM349.5 617h10.5v3.5h-10.5zM363.5 617h7v3.5h-7zM157 620.5h3.5v3.5h-3.5zM202.5 620.5h7v3.5h-7zM213 620.5h3.5v3.5h-3.5zM244.5 620.5h7v3.5h-7zM255 620.5h3.5v3.5h-3.5zM279.5 620.5h3.5v3.5h-3.5zM307.5 620.5h3.5v3.5h-3.5zM325 620.5h10.5v3.5h-10.5zM342.5 620.5h3.5v3.5h-3.5zM356.5 620.5h3.5v3.5h-3.5zM398.5 620.5h3.5v3.5h-3.5zM146.5 624h14v3.5h-14zM167.5 624h3.5v3.5h-3.5zM192 624h3.5v3.5h-3.5zM199 624h3.5v3.5h-3.5zM209.5 624h3.5v3.5h-3.5zM220 624h3.5v3.5h-3.5zM234 624h3.5v3.5h-3.5zM241 624h3.5v3.5h-3.5zM255 624h7v3.5h-7zM290 624h3.5v3.5h-3.5zM314.5 624h3.5v3.5h-3.5zM328.5 624h3.5v3.5h-3.5zM342.5 624h3.5v3.5h-3.5zM356.5 624h3.5v3.5h-3.5zM367 624h7v3.5h-7zM398.5 624h3.5v3.5h-3.5zM132.5 627.5h3.5v3.5h-3.5zM150 627.5h7v3.5h-7zM290 627.5h3.5v3.5h-3.5zM304 627.5h3.5v3.5h-3.5zM318 627.5h3.5v3.5h-3.5zM367 627.5h3.5v3.5h-3.5zM398.5 627.5h3.5v3.5h-3.5zM139.5 631h17.5v3.5h-17.5zM202.5 631h14v3.5h-14zM237.5 631h3.5v3.5h-3.5zM258.5 631h7v3.5h-7zM307.5 631h3.5v3.5h-3.5zM325 631h3.5v3.5h-3.5zM136 634.5h24.5v3.5h-24.5zM171 634.5h3.5v3.5h-3.5zM223.5 634.5h3.5v3.5h-3.5zM234 634.5h3.5v3.5h-3.5zM265.5 634.5h3.5v3.5h-3.5zM279.5 634.5h10.5v3.5h-10.5zM297 634.5h3.5v3.5h-3.5zM304 634.5h7v3.5h-7zM125.5 638h3.5v3.5h-3.5zM132.5 638h17.5v3.5h-17.5zM227 638h7v3.5h-7zM248 638h3.5v3.5h-3.5zM276 638h3.5v3.5h-3.5zM286.5 638h3.5v3.5h-3.5zM300.5 638h3.5v3.5h-3.5zM311 638h7v3.5h-7zM391.5 638h3.5v3.5h-3.5zM125.5 641.5h3.5v3.5h-3.5zM132.5 641.5h17.5v3.5h-17.5zM174.5 641.5h3.5v3.5h-3.5zM206 641.5h3.5v3.5h-3.5zM213 641.5h3.5v3.5h-3.5zM227 641.5h10.5v3.5h-10.5zM248 641.5h3.5v3.5h-3.5zM255 641.5h10.5v3.5h-10.5zM283 641.5h3.5v3.5h-3.5zM311 641.5h3.5v3.5h-3.5zM318 641.5h7v3.5h-7zM328.5 641.5h3.5v3.5h-3.5zM346 641.5h3.5v3.5h-3.5zM360 641.5h7v3.5h-7zM381 641.5h7v3.5h-7zM391.5 641.5h3.5v3.5h-3.5zM125.5 645h3.5v3.5h-3.5zM132.5 645h21v3.5h-21zM213 645h3.5v3.5h-3.5zM227 645h3.5v3.5h-3.5zM237.5 645h3.5v3.5h-3.5zM248 645h3.5v3.5h-3.5zM255 645h3.5v3.5h-3.5zM286.5 645h3.5v3.5h-3.5zM300.5 645h3.5v3.5h-3.5zM311 645h3.5v3.5h-3.5zM318 645h3.5v3.5h-3.5zM328.5 645h10.5v3.5h-10.5zM346 645h3.5v3.5h-3.5zM360 645h3.5v3.5h-3.5zM377.5 645h3.5v3.5h-3.5zM388 645h3.5v3.5h-3.5zM398.5 645h10.5v3.5h-10.5zM223.5 648.5h3.5v3.5h-3.5zM230.5 648.5h7v3.5h-7zM244.5 648.5h7v3.5h-7zM265.5 648.5h3.5v3.5h-3.5zM297 648.5h3.5v3.5h-3.5zM307.5 648.5h3.5v3.5h-3.5zM363.5 648.5h3.5v3.5h-3.5zM377.5 648.5h10.5v3.5h-10.5zM395 648.5h3.5v3.5h-3.5zM230.5 652h3.5v3.5h-3.5zM241 652h3.5v3.5h-3.5zM255 652h3.5v3.5h-3.5zM276 652h7v3.5h-7zM286.5 652h3.5v3.5h-3.5zM311 652h7v3.5h-7zM328.5 652h3.5v3.5h-3.5zM381 652h3.5v3.5h-3.5zM391.5 652h3.5v3.5h-3.5zM202.5 655.5h3.5v3.5h-3.5zM241 655.5h7v3.5h-7zM269 655.5h3.5v3.5h-3.5zM276 655.5h7v3.5h-7zM290 655.5h3.5v3.5h-3.5zM300.5 655.5h3.5v3.5h-3.5zM314.5 655.5h7v3.5h-7zM328.5 655.5h14v3.5h-14zM370.5 655.5h7v3.5h-7zM391.5 655.5h3.5v3.5h-3.5zM405.5 655.5h3.5v3.5h-3.5zM206 659h14v3.5h-14zM227 659h3.5v3.5h-3.5zM234 659h3.5v3.5h-3.5zM244.5 659h3.5v3.5h-3.5zM251.5 659h3.5v3.5h-3.5zM262 659h7v3.5h-7zM276 659h10.5v3.5h-10.5zM290 659h3.5v3.5h-3.5zM304 659h3.5v3.5h-3.5zM311 659h10.5v3.5h-10.5zM335.5 659h3.5v3.5h-3.5zM374 659h3.5v3.5h-3.5zM388 659h7v3.5h-7zM199 662.5h7v3.5h-7zM213 662.5h3.5v3.5h-3.5zM230.5 662.5h7v3.5h-7zM241 662.5h3.5v3.5h-3.5zM251.5 662.5h7v3.5h-7zM265.5 662.5h3.5v3.5h-3.5zM272.5 662.5h3.5v3.5h-3.5zM293.5 662.5h10.5v3.5h-10.5zM307.5 662.5h3.5v3.5h-3.5zM381 662.5h14v3.5h-14zM227 666h3.5v3.5h-3.5zM234 666h3.5v3.5h-3.5zM241 666h10.5v3.5h-10.5zM258.5 666h7v3.5h-7zM269 666h14v3.5h-14zM286.5 666h14v3.5h-14zM318 666h7v3.5h-7zM335.5 666h3.5v3.5h-3.5zM377.5 666h7v3.5h-7zM167.5 669.5h10.5v3.5h-10.5zM181.5 669.5h10.5v3.5h-10.5zM230.5 669.5h3.5v3.5h-3.5zM241 669.5h10.5v3.5h-10.5zM255 669.5h14v3.5h-14zM272.5 669.5h3.5v3.5h-3.5zM286.5 669.5h10.5v3.5h-10.5zM300.5 669.5h3.5v3.5h-3.5zM307.5 669.5h3.5v3.5h-3.5zM321.5 669.5h3.5v3.5h-3.5zM402 669.5h7v3.5h-7zM167.5 673h7v3.5h-7zM178 673h17.5v3.5h-17.5zM251.5 673h3.5v3.5h-3.5zM279.5 673h14v3.5h-14zM402 673h3.5v3.5h-3.5zM171 676.5h14v3.5h-14zM192 676.5h3.5v3.5h-3.5zM255 676.5h3.5v3.5h-3.5zM286.5 676.5h3.5v3.5h-3.5zM297 676.5h3.5v3.5h-3.5zM304 676.5h3.5v3.5h-3.5zM370.5 676.5h3.5v3.5h-3.5zM377.5 676.5h3.5v3.5h-3.5zM384.5 676.5h7v3.5h-7zM402 676.5h3.5v3.5h-3.5zM164 680h10.5v3.5h-10.5zM192 680h3.5v3.5h-3.5zM269 680h10.5v3.5h-10.5zM297 680h3.5v3.5h-3.5zM370.5 680h3.5v3.5h-3.5zM381 680h3.5v3.5h-3.5zM164 683.5h3.5v3.5h-3.5zM188.5 683.5h7v3.5h-7zM276 683.5h3.5v3.5h-3.5zM286.5 683.5h3.5v3.5h-3.5zM297 683.5h3.5v3.5h-3.5zM377.5 683.5h3.5v3.5h-3.5zM167.5 687h3.5v3.5h-3.5zM185 687h14v3.5h-14zM206 687h3.5v3.5h-3.5zM276 687h3.5v3.5h-3.5zM283 687h10.5v3.5h-10.5zM332 687h3.5v3.5h-3.5zM192 690.5h7v3.5h-7zM272.5 690.5h3.5v3.5h-3.5zM286.5 690.5h3.5v3.5h-3.5zM332 690.5h3.5v3.5h-3.5zM409 690.5h7v3.5h-7zM419.5 690.5h3.5v3.5h-3.5zM160.5 694h7v3.5h-7zM213 694h3.5v3.5h-3.5zM227 694h7v3.5h-7zM293.5 694h3.5v3.5h-3.5zM213 697.5h3.5v3.5h-3.5zM227 697.5h7v3.5h-7zM283 697.5h3.5v3.5h-3.5zM290 697.5h3.5v3.5h-3.5zM300.5 697.5h3.5v3.5h-3.5zM206 701h3.5v3.5h-3.5zM269 704.5h3.5v3.5h-3.5zM286.5 704.5h3.5v3.5h-3.5zM391.5 704.5h3.5v3.5h-3.5zM269 708h14v3.5h-14zM395 708h3.5v3.5h-3.5zM202.5 711.5h3.5v3.5h-3.5zM209.5 711.5h3.5v3.5h-3.5zM276 711.5h7v3.5h-7zM391.5 711.5h3.5v3.5h-3.5zM195.5 715h10.5v3.5h-10.5zM213 715h3.5v3.5h-3.5zM244.5 715h3.5v3.5h-3.5zM272.5 715h3.5v3.5h-3.5zM279.5 715h3.5v3.5h-3.5zM213 718.5h3.5v3.5h-3.5zM269 718.5h7v3.5h-7zM206 722h3.5v3.5h-3.5zM279.5 722h3.5v3.5h-3.5zM388 722h3.5v3.5h-3.5zM192 725.5h3.5v3.5h-3.5zM202.5 725.5h7v3.5h-7zM269 725.5h14v3.5h-14zM174.5 729h3.5v3.5h-3.5zM192 729h14v3.5h-14zM209.5 729h3.5v3.5h-3.5zM269 729h10.5v3.5h-10.5zM391.5 729h3.5v3.5h-3.5zM192 732.5h14v3.5h-14zM209.5 732.5h7v3.5h-7zM269 732.5h10.5v3.5h-10.5zM391.5 732.5h3.5v3.5h-3.5zM202.5 736h10.5v3.5h-10.5zM185 739.5h7v3.5h-7zM199 739.5h10.5v3.5h-10.5zM248 743h7v3.5h-7zM153.5 746.5h3.5v3.5h-3.5zM248 746.5h7v3.5h-7zM388 746.5h3.5v3.5h-3.5zM248 750h7v3.5h-7zM164 753.5h3.5v3.5h-3.5zM377.5 753.5h3.5v3.5h-3.5zM171 760.5h3.5v3.5h-3.5zM265.5 764h3.5v3.5h-3.5zM237.5 767.5h3.5v3.5h-3.5zM255 767.5h7v3.5h-7zM255 771h3.5v3.5h-3.5zM251.5 774.5h7v3.5h-7zM209.5 778h7v3.5h-7zM255 778h7v3.5h-7zM227 781.5h3.5v3.5h-3.5zM311 785h3.5v3.5h-3.5zM258.5 792h3.5v3.5h-3.5z" fill="#00e898"/><path d="M265.5 459.5h24.5v3.5h-24.5zM265.5 463h3.5v3.5h-3.5zM276 463h14v3.5h-14zM265.5 466.5h3.5v3.5h-3.5zM276 466.5h14v3.5h-14zM265.5 470h10.5v3.5h-10.5zM160.5 508.5h10.5v3.5h-10.5zM160.5 512h10.5v3.5h-10.5zM160.5 515.5h10.5v3.5h-10.5zM195.5 526h7v3.5h-7zM174.5 533h3.5v3.5h-3.5zM188.5 533h7v3.5h-7zM188.5 536.5h7v3.5h-7zM132.5 543.5h3.5v3.5h-3.5zM181.5 543.5h3.5v3.5h-3.5zM118.5 557.5h28v3.5h-28zM118.5 561h28v3.5h-28zM115 564.5h31.5v3.5h-31.5zM115 568h10.5v3.5h-10.5zM129 568h21v3.5h-21zM293.5 568h7v3.5h-7zM304 568h3.5v3.5h-3.5zM318 568h21v3.5h-21zM111.5 571.5h10.5v3.5h-10.5zM132.5 571.5h10.5v3.5h-10.5zM318 571.5h14v3.5h-14zM416 571.5h3.5v3.5h-3.5zM111.5 575h7v3.5h-7zM139.5 575h7v3.5h-7zM318 575h14v3.5h-14zM405.5 575h17.5v3.5h-17.5zM111.5 578.5h10.5v3.5h-10.5zM132.5 578.5h14v3.5h-14zM405.5 578.5h24.5v3.5h-24.5zM111.5 582h14v3.5h-14zM129 582h7v3.5h-7zM405.5 582h10.5v3.5h-10.5zM426.5 582h7v3.5h-7zM111.5 585.5h24.5v3.5h-24.5zM409 585.5h7v3.5h-7zM426.5 585.5h7v3.5h-7zM108 589h28v3.5h-28zM150 589h3.5v3.5h-3.5zM360 589h14v3.5h-14zM409 589h7v3.5h-7zM426.5 589h7v3.5h-7zM108 592.5h7v3.5h-7zM150 592.5h3.5v3.5h-3.5zM360 592.5h14v3.5h-14zM402 592.5h31.5v3.5h-31.5zM108 596h7v3.5h-7zM150 596h7v3.5h-7zM360 596h14v3.5h-14zM402 596h31.5v3.5h-31.5zM104.5 599.5h17.5v3.5h-17.5zM150 599.5h7v3.5h-7zM402 599.5h14v3.5h-14zM419.5 599.5h14v3.5h-14zM104.5 603h21v3.5h-21zM153.5 603h7v3.5h-7zM402 603h14v3.5h-14zM104.5 606.5h21v3.5h-21zM153.5 606.5h10.5v3.5h-10.5zM402 606.5h14v3.5h-14zM104.5 610h10.5v3.5h-10.5zM118.5 610h10.5v3.5h-10.5zM157 610h7v3.5h-7zM104.5 613.5h10.5v3.5h-10.5zM118.5 613.5h10.5v3.5h-10.5zM157 613.5h10.5v3.5h-10.5zM122 617h10.5v3.5h-10.5zM164 617h3.5v3.5h-3.5zM111.5 620.5h10.5v3.5h-10.5zM160.5 620.5h3.5v3.5h-3.5zM360 620.5h3.5v3.5h-3.5zM111.5 624h10.5v3.5h-10.5zM171 624h3.5v3.5h-3.5zM360 624h3.5v3.5h-3.5zM104.5 627.5h3.5v3.5h-3.5zM111.5 627.5h14v3.5h-14zM129 627.5h3.5v3.5h-3.5zM139.5 627.5h10.5v3.5h-10.5zM157 627.5h3.5v3.5h-3.5zM171 627.5h3.5v3.5h-3.5zM349.5 627.5h14v3.5h-14zM111.5 631h14v3.5h-14zM132.5 631h3.5v3.5h-3.5zM157 631h14v3.5h-14zM178 631h3.5v3.5h-3.5zM346 631h3.5v3.5h-3.5zM104.5 634.5h3.5v3.5h-3.5zM129 634.5h7v3.5h-7zM160.5 634.5h10.5v3.5h-10.5zM346 634.5h3.5v3.5h-3.5zM104.5 638h10.5v3.5h-10.5zM167.5 638h3.5v3.5h-3.5zM349.5 638h3.5v3.5h-3.5zM356.5 638h3.5v3.5h-3.5zM363.5 638h3.5v3.5h-3.5zM388 638h3.5v3.5h-3.5zM395 638h10.5v3.5h-10.5zM104.5 641.5h10.5v3.5h-10.5zM349.5 641.5h3.5v3.5h-3.5zM104.5 645h7v3.5h-7zM171 645h7v3.5h-7zM353 645h3.5v3.5h-3.5zM367 645h3.5v3.5h-3.5zM104.5 648.5h7v3.5h-7zM346 648.5h10.5v3.5h-10.5zM367 648.5h3.5v3.5h-3.5zM391.5 648.5h3.5v3.5h-3.5zM104.5 652h10.5v3.5h-10.5zM353 652h3.5v3.5h-3.5zM360 652h3.5v3.5h-3.5zM388 652h3.5v3.5h-3.5zM405.5 652h3.5v3.5h-3.5zM108 655.5h7v3.5h-7zM153.5 655.5h10.5v3.5h-10.5zM199 655.5h3.5v3.5h-3.5zM353 655.5h14v3.5h-14zM153.5 659h7v3.5h-7zM353 659h14v3.5h-14zM405.5 659h3.5v3.5h-3.5zM118.5 662.5h24.5v3.5h-24.5zM150 662.5h10.5v3.5h-10.5zM209.5 662.5h3.5v3.5h-3.5zM346 662.5h7v3.5h-7zM118.5 666h21v3.5h-21zM146.5 666h3.5v3.5h-3.5zM209.5 666h7v3.5h-7zM384.5 666h7v3.5h-7zM395 666h3.5v3.5h-3.5zM405.5 666h3.5v3.5h-3.5zM118.5 669.5h31.5v3.5h-31.5zM384.5 669.5h14v3.5h-14zM118.5 673h31.5v3.5h-31.5zM223.5 673h7v3.5h-7zM381 673h7v3.5h-7zM391.5 673h7v3.5h-7zM125.5 676.5h31.5v3.5h-31.5zM160.5 676.5h3.5v3.5h-3.5zM223.5 676.5h21v3.5h-21zM307.5 676.5h31.5v3.5h-31.5zM391.5 676.5h3.5v3.5h-3.5zM405.5 676.5h3.5v3.5h-3.5zM136 680h21v3.5h-21zM223.5 680h28v3.5h-28zM304 680h31.5v3.5h-31.5zM384.5 680h3.5v3.5h-3.5zM391.5 680h17.5v3.5h-17.5zM143 683.5h14v3.5h-14zM199 683.5h3.5v3.5h-3.5zM227 683.5h24.5v3.5h-24.5zM304 683.5h28v3.5h-28zM367 683.5h3.5v3.5h-3.5zM374 683.5h3.5v3.5h-3.5zM391.5 683.5h17.5v3.5h-17.5zM199 687h7v3.5h-7zM227 687h24.5v3.5h-24.5zM262 687h7v3.5h-7zM300.5 687h31.5v3.5h-31.5zM367 687h3.5v3.5h-3.5zM374 687h3.5v3.5h-3.5zM395 687h14v3.5h-14zM199 690.5h7v3.5h-7zM223.5 690.5h3.5v3.5h-3.5zM234 690.5h17.5v3.5h-17.5zM262 690.5h7v3.5h-7zM276 690.5h3.5v3.5h-3.5zM283 690.5h3.5v3.5h-3.5zM290 690.5h7v3.5h-7zM304 690.5h28v3.5h-28zM370.5 690.5h10.5v3.5h-10.5zM405.5 690.5h3.5v3.5h-3.5zM202.5 694h3.5v3.5h-3.5zM234 694h17.5v3.5h-17.5zM272.5 694h7v3.5h-7zM304 694h24.5v3.5h-24.5zM374 694h7v3.5h-7zM199 697.5h7v3.5h-7zM220 697.5h7v3.5h-7zM234 697.5h10.5v3.5h-10.5zM269 697.5h7v3.5h-7zM279.5 697.5h3.5v3.5h-3.5zM293.5 697.5h3.5v3.5h-3.5zM304 697.5h10.5v3.5h-10.5zM370.5 697.5h3.5v3.5h-3.5zM174.5 701h10.5v3.5h-10.5zM199 701h3.5v3.5h-3.5zM220 701h7v3.5h-7zM234 701h10.5v3.5h-10.5zM370.5 701h3.5v3.5h-3.5zM377.5 701h10.5v3.5h-10.5zM125.5 704.5h10.5v3.5h-10.5zM174.5 704.5h10.5v3.5h-10.5zM213 704.5h14v3.5h-14zM234 704.5h10.5v3.5h-10.5zM272.5 704.5h3.5v3.5h-3.5zM290 704.5h3.5v3.5h-3.5zM370.5 704.5h14v3.5h-14zM125.5 708h10.5v3.5h-10.5zM174.5 708h10.5v3.5h-10.5zM192 708h7v3.5h-7zM213 708h14v3.5h-14zM234 708h10.5v3.5h-10.5zM384.5 708h3.5v3.5h-3.5zM129 711.5h7v3.5h-7zM192 711.5h7v3.5h-7zM216.5 711.5h7v3.5h-7zM227 711.5h3.5v3.5h-3.5zM234 711.5h35v3.5h-35zM381 711.5h3.5v3.5h-3.5zM206 715h3.5v3.5h-3.5zM230.5 715h10.5v3.5h-10.5zM353 715h21v3.5h-21zM384.5 715h3.5v3.5h-3.5zM188.5 718.5h3.5v3.5h-3.5zM206 718.5h3.5v3.5h-3.5zM230.5 718.5h17.5v3.5h-17.5zM353 718.5h21v3.5h-21zM150 722h3.5v3.5h-3.5zM185 722h10.5v3.5h-10.5zM202.5 722h3.5v3.5h-3.5zM209.5 722h7v3.5h-7zM230.5 722h17.5v3.5h-17.5zM293.5 722h21v3.5h-21zM328.5 722h14v3.5h-14zM353 722h21v3.5h-21zM146.5 725.5h21v3.5h-21zM185 725.5h7v3.5h-7zM213 725.5h3.5v3.5h-3.5zM293.5 725.5h21v3.5h-21zM328.5 725.5h14v3.5h-14zM353 725.5h21v3.5h-21zM384.5 725.5h3.5v3.5h-3.5zM139.5 729h3.5v3.5h-3.5zM160.5 729h14v3.5h-14zM178 729h14v3.5h-14zM216.5 729h3.5v3.5h-3.5zM248 729h21v3.5h-21zM293.5 729h21v3.5h-21zM328.5 729h14v3.5h-14zM384.5 729h3.5v3.5h-3.5zM160.5 732.5h14v3.5h-14zM178 732.5h10.5v3.5h-10.5zM206 732.5h3.5v3.5h-3.5zM216.5 732.5h3.5v3.5h-3.5zM248 732.5h21v3.5h-21zM293.5 732.5h21v3.5h-21zM328.5 732.5h14v3.5h-14zM346 732.5h14v3.5h-14zM381 732.5h7v3.5h-7zM160.5 736h10.5v3.5h-10.5zM181.5 736h7v3.5h-7zM195.5 736h3.5v3.5h-3.5zM248 736h21v3.5h-21zM314.5 736h3.5v3.5h-3.5zM328.5 736h35v3.5h-35zM381 736h7v3.5h-7zM160.5 739.5h3.5v3.5h-3.5zM262 739.5h7v3.5h-7zM314.5 739.5h3.5v3.5h-3.5zM328.5 739.5h45.5v3.5h-45.5zM377.5 739.5h7v3.5h-7zM160.5 743h3.5v3.5h-3.5zM192 743h7v3.5h-7zM311 743h10.5v3.5h-10.5zM332 743h10.5v3.5h-10.5zM346 743h14v3.5h-14zM157 746.5h10.5v3.5h-10.5zM192 746.5h7v3.5h-7zM234 746.5h10.5v3.5h-10.5zM311 746.5h10.5v3.5h-10.5zM332 746.5h3.5v3.5h-3.5zM346 746.5h14v3.5h-14zM160.5 750h7v3.5h-7zM192 750h7v3.5h-7zM234 750h10.5v3.5h-10.5zM311 750h10.5v3.5h-10.5zM346 750h14v3.5h-14zM192 753.5h24.5v3.5h-24.5zM234 753.5h10.5v3.5h-10.5zM262 753.5h7v3.5h-7zM307.5 753.5h14v3.5h-14zM346 753.5h14v3.5h-14zM167.5 757h3.5v3.5h-3.5zM195.5 757h73.5v3.5h-73.5zM307.5 757h17.5v3.5h-17.5zM342.5 757h17.5v3.5h-17.5zM202.5 760.5h66.5v3.5h-66.5zM293.5 760.5h31.5v3.5h-31.5zM339 760.5h28v3.5h-28zM230.5 764h3.5v3.5h-3.5zM258.5 764h3.5v3.5h-3.5zM283 764h42v3.5h-42zM335.5 764h7v3.5h-7zM181.5 767.5h3.5v3.5h-3.5zM241 767.5h3.5v3.5h-3.5zM248 767.5h3.5v3.5h-3.5zM300.5 767.5h42v3.5h-42zM237.5 771h17.5v3.5h-17.5zM258.5 771h3.5v3.5h-3.5zM300.5 771h42v3.5h-42zM234 774.5h3.5v3.5h-3.5zM244.5 774.5h3.5v3.5h-3.5zM300.5 774.5h42v3.5h-42zM223.5 778h7v3.5h-7zM234 778h21v3.5h-21zM311 778h24.5v3.5h-24.5zM209.5 781.5h17.5v3.5h-17.5zM234 781.5h24.5v3.5h-24.5zM262 781.5h3.5v3.5h-3.5zM311 781.5h10.5v3.5h-10.5zM216.5 785h10.5v3.5h-10.5zM234 785h21v3.5h-21zM234 788.5h21v3.5h-21zM244.5 792h10.5v3.5h-10.5zM262 792h7v3.5h-7z" fill="#c8c8c8"/><path d="M269 463h7v3.5h-7zM269 466.5h7v3.5h-7zM283 470h7v3.5h-7zM283 473.5h7v3.5h-7zM206 522.5h10.5v3.5h-10.5zM206 526h10.5v3.5h-10.5zM178 529.5h7v3.5h-7zM206 529.5h14v3.5h-14zM178 533h10.5v3.5h-10.5zM181.5 536.5h7v3.5h-7zM181.5 540h10.5v3.5h-10.5zM125.5 568h3.5v3.5h-3.5zM300.5 568h3.5v3.5h-3.5zM122 571.5h10.5v3.5h-10.5zM143 571.5h10.5v3.5h-10.5zM293.5 571.5h14v3.5h-14zM332 571.5h10.5v3.5h-10.5zM118.5 575h21v3.5h-21zM146.5 575h10.5v3.5h-10.5zM293.5 575h3.5v3.5h-3.5zM300.5 575h10.5v3.5h-10.5zM332 575h10.5v3.5h-10.5zM122 578.5h10.5v3.5h-10.5zM146.5 578.5h17.5v3.5h-17.5zM297 578.5h3.5v3.5h-3.5zM307.5 578.5h7v3.5h-7zM332 578.5h10.5v3.5h-10.5zM125.5 582h3.5v3.5h-3.5zM150 582h17.5v3.5h-17.5zM297 582h3.5v3.5h-3.5zM311 582h7v3.5h-7zM321.5 582h7v3.5h-7zM416 582h10.5v3.5h-10.5zM150 585.5h28v3.5h-28zM300.5 585.5h3.5v3.5h-3.5zM314.5 585.5h3.5v3.5h-3.5zM321.5 585.5h7v3.5h-7zM356.5 585.5h14v3.5h-14zM416 585.5h10.5v3.5h-10.5zM153.5 589h10.5v3.5h-10.5zM167.5 589h17.5v3.5h-17.5zM304 589h3.5v3.5h-3.5zM318 589h10.5v3.5h-10.5zM356.5 589h3.5v3.5h-3.5zM416 589h10.5v3.5h-10.5zM153.5 592.5h10.5v3.5h-10.5zM307.5 592.5h3.5v3.5h-3.5zM314.5 592.5h10.5v3.5h-10.5zM356.5 592.5h3.5v3.5h-3.5zM157 596h7v3.5h-7zM307.5 596h17.5v3.5h-17.5zM157 599.5h7v3.5h-7zM314.5 599.5h14v3.5h-14zM160.5 603h7v3.5h-7zM185 603h3.5v3.5h-3.5zM318 603h10.5v3.5h-10.5zM164 606.5h3.5v3.5h-3.5zM185 606.5h3.5v3.5h-3.5zM325 606.5h3.5v3.5h-3.5zM164 610h7v3.5h-7zM185 610h3.5v3.5h-3.5zM167.5 613.5h3.5v3.5h-3.5zM174.5 613.5h14v3.5h-14zM167.5 617h21v3.5h-21zM174.5 620.5h14v3.5h-14zM374 620.5h24.5v3.5h-24.5zM178 624h10.5v3.5h-10.5zM384.5 624h14v3.5h-14zM181.5 627.5h3.5v3.5h-3.5zM384.5 627.5h14v3.5h-14zM125.5 631h3.5v3.5h-3.5zM181.5 631h3.5v3.5h-3.5zM384.5 631h17.5v3.5h-17.5zM174.5 634.5h10.5v3.5h-10.5zM370.5 634.5h35v3.5h-35zM150 638h17.5v3.5h-17.5zM174.5 638h10.5v3.5h-10.5zM346 638h3.5v3.5h-3.5zM370.5 638h7v3.5h-7zM150 641.5h21v3.5h-21zM178 641.5h7v3.5h-7zM353 641.5h7v3.5h-7zM370.5 641.5h7v3.5h-7zM129 645h3.5v3.5h-3.5zM153.5 645h17.5v3.5h-17.5zM178 645h24.5v3.5h-24.5zM349.5 645h3.5v3.5h-3.5zM370.5 645h7v3.5h-7zM153.5 648.5h24.5v3.5h-24.5zM192 648.5h10.5v3.5h-10.5zM356.5 648.5h3.5v3.5h-3.5zM370.5 648.5h7v3.5h-7zM153.5 652h24.5v3.5h-24.5zM192 652h10.5v3.5h-10.5zM346 652h7v3.5h-7zM356.5 652h3.5v3.5h-3.5zM370.5 652h3.5v3.5h-3.5zM164 655.5h14v3.5h-14zM192 655.5h7v3.5h-7zM346 655.5h7v3.5h-7zM164 659h14v3.5h-14zM192 659h7v3.5h-7zM346 659h7v3.5h-7zM367 659h3.5v3.5h-3.5zM167.5 662.5h28v3.5h-28zM353 662.5h28v3.5h-28zM150 666h14v3.5h-14zM167.5 666h38.5v3.5h-38.5zM346 666h7v3.5h-7zM356.5 666h21v3.5h-21zM419.5 666h3.5v3.5h-3.5zM150 669.5h14v3.5h-14zM192 669.5h14v3.5h-14zM220 669.5h3.5v3.5h-3.5zM353 669.5h24.5v3.5h-24.5zM419.5 669.5h3.5v3.5h-3.5zM150 673h14v3.5h-14zM195.5 673h10.5v3.5h-10.5zM220 673h3.5v3.5h-3.5zM353 673h24.5v3.5h-24.5zM195.5 676.5h10.5v3.5h-10.5zM220 676.5h3.5v3.5h-3.5zM353 676.5h17.5v3.5h-17.5zM195.5 680h10.5v3.5h-10.5zM220 680h3.5v3.5h-3.5zM335.5 680h3.5v3.5h-3.5zM353 680h14v3.5h-14zM374 680h3.5v3.5h-3.5zM157 683.5h7v3.5h-7zM171 683.5h10.5v3.5h-10.5zM202.5 683.5h21v3.5h-21zM251.5 683.5h10.5v3.5h-10.5zM353 683.5h14v3.5h-14zM370.5 683.5h3.5v3.5h-3.5zM381 683.5h10.5v3.5h-10.5zM153.5 687h10.5v3.5h-10.5zM171 687h10.5v3.5h-10.5zM209.5 687h10.5v3.5h-10.5zM251.5 687h10.5v3.5h-10.5zM360 687h7v3.5h-7zM370.5 687h3.5v3.5h-3.5zM381 687h10.5v3.5h-10.5zM160.5 690.5h3.5v3.5h-3.5zM209.5 690.5h7v3.5h-7zM251.5 690.5h10.5v3.5h-10.5zM360 690.5h10.5v3.5h-10.5zM381 690.5h7v3.5h-7zM209.5 694h3.5v3.5h-3.5zM251.5 694h10.5v3.5h-10.5zM360 694h14v3.5h-14zM381 694h3.5v3.5h-3.5zM209.5 697.5h3.5v3.5h-3.5zM244.5 697.5h17.5v3.5h-17.5zM314.5 697.5h10.5v3.5h-10.5zM360 697.5h3.5v3.5h-3.5zM374 697.5h14v3.5h-14zM209.5 701h3.5v3.5h-3.5zM227 701h7v3.5h-7zM244.5 701h24.5v3.5h-24.5zM307.5 701h7v3.5h-7zM328.5 701h42v3.5h-42zM374 701h3.5v3.5h-3.5zM230.5 704.5h3.5v3.5h-3.5zM244.5 704.5h24.5v3.5h-24.5zM297 704.5h17.5v3.5h-17.5zM328.5 704.5h42v3.5h-42zM384.5 704.5h3.5v3.5h-3.5zM227 708h7v3.5h-7zM244.5 708h24.5v3.5h-24.5zM283 708h31.5v3.5h-31.5zM328.5 708h56v3.5h-56zM213 711.5h3.5v3.5h-3.5zM283 711.5h31.5v3.5h-31.5zM328.5 711.5h10.5v3.5h-10.5zM356.5 711.5h24.5v3.5h-24.5zM384.5 711.5h3.5v3.5h-3.5zM216.5 715h14v3.5h-14zM300.5 715h14v3.5h-14zM328.5 715h10.5v3.5h-10.5zM374 715h10.5v3.5h-10.5zM195.5 718.5h7v3.5h-7zM216.5 718.5h14v3.5h-14zM300.5 718.5h14v3.5h-14zM328.5 718.5h10.5v3.5h-10.5zM374 718.5h14v3.5h-14zM195.5 722h7v3.5h-7zM216.5 722h14v3.5h-14zM314.5 722h14v3.5h-14zM374 722h14v3.5h-14zM195.5 725.5h7v3.5h-7zM216.5 725.5h31.5v3.5h-31.5zM314.5 725.5h14v3.5h-14zM374 725.5h10.5v3.5h-10.5zM143 729h17.5v3.5h-17.5zM220 729h28v3.5h-28zM314.5 729h14v3.5h-14zM342.5 729h42v3.5h-42zM143 732.5h17.5v3.5h-17.5zM220 732.5h7v3.5h-7zM237.5 732.5h10.5v3.5h-10.5zM314.5 732.5h3.5v3.5h-3.5zM342.5 732.5h3.5v3.5h-3.5zM360 732.5h21v3.5h-21zM146.5 736h14v3.5h-14zM216.5 736h10.5v3.5h-10.5zM237.5 736h10.5v3.5h-10.5zM269 736h14v3.5h-14zM300.5 736h14v3.5h-14zM363.5 736h17.5v3.5h-17.5zM146.5 739.5h14v3.5h-14zM216.5 739.5h10.5v3.5h-10.5zM237.5 739.5h7v3.5h-7zM269 739.5h14v3.5h-14zM300.5 739.5h14v3.5h-14zM374 739.5h3.5v3.5h-3.5zM384.5 739.5h3.5v3.5h-3.5zM150 743h10.5v3.5h-10.5zM199 743h7v3.5h-7zM213 743h31.5v3.5h-31.5zM262 743h21v3.5h-21zM300.5 743h10.5v3.5h-10.5zM377.5 743h7v3.5h-7zM199 746.5h7v3.5h-7zM213 746.5h21v3.5h-21zM262 746.5h21v3.5h-21zM300.5 746.5h10.5v3.5h-10.5zM377.5 746.5h7v3.5h-7zM199 750h35v3.5h-35zM262 750h21v3.5h-21zM300.5 750h10.5v3.5h-10.5zM381 750h3.5v3.5h-3.5zM216.5 753.5h17.5v3.5h-17.5zM269 753.5h38.5v3.5h-38.5zM269 757h38.5v3.5h-38.5zM269 760.5h17.5v3.5h-17.5zM290 760.5h3.5v3.5h-3.5zM367 760.5h3.5v3.5h-3.5zM220 764h3.5v3.5h-3.5zM269 764h14v3.5h-14zM269 767.5h31.5v3.5h-31.5zM265.5 771h35v3.5h-35zM195.5 774.5h14v3.5h-14zM265.5 774.5h35v3.5h-35zM199 778h10.5v3.5h-10.5zM230.5 778h3.5v3.5h-3.5zM265.5 778h35v3.5h-35zM230.5 781.5h3.5v3.5h-3.5zM265.5 781.5h35v3.5h-35zM321.5 781.5h3.5v3.5h-3.5zM230.5 785h3.5v3.5h-3.5zM230.5 788.5h3.5v3.5h-3.5z" fill="#d89430"/><path d="M297 575h3.5v3.5h-3.5zM300.5 578.5h7v3.5h-7zM300.5 582h10.5v3.5h-10.5zM304 585.5h10.5v3.5h-10.5zM164 589h3.5v3.5h-3.5zM307.5 589h10.5v3.5h-10.5zM164 592.5h21v3.5h-21zM311 592.5h3.5v3.5h-3.5zM164 596h21v3.5h-21zM164 599.5h21v3.5h-21zM167.5 603h17.5v3.5h-17.5zM167.5 606.5h17.5v3.5h-17.5zM171 610h14v3.5h-14zM171 613.5h3.5v3.5h-3.5zM374 624h10.5v3.5h-10.5zM185 627.5h14v3.5h-14zM374 627.5h10.5v3.5h-10.5zM185 631h14v3.5h-14zM374 631h10.5v3.5h-10.5zM185 634.5h14v3.5h-14zM185 638h14v3.5h-14zM185 641.5h14v3.5h-14zM178 648.5h14v3.5h-14zM178 652h14v3.5h-14zM178 655.5h14v3.5h-14zM178 659h14v3.5h-14zM206 669.5h14v3.5h-14zM206 673h14v3.5h-14zM206 676.5h14v3.5h-14zM206 680h14v3.5h-14zM342.5 687h17.5v3.5h-17.5zM342.5 690.5h17.5v3.5h-17.5zM342.5 694h17.5v3.5h-17.5zM342.5 697.5h17.5v3.5h-17.5zM314.5 701h14v3.5h-14zM314.5 704.5h14v3.5h-14zM314.5 708h14v3.5h-14zM314.5 711.5h14v3.5h-14zM339 711.5h17.5v3.5h-17.5zM283 715h17.5v3.5h-17.5zM314.5 715h14v3.5h-14zM339 715h14v3.5h-14zM283 718.5h17.5v3.5h-17.5zM314.5 718.5h14v3.5h-14zM339 718.5h14v3.5h-14zM283 722h10.5v3.5h-10.5zM342.5 722h10.5v3.5h-10.5zM283 725.5h10.5v3.5h-10.5zM342.5 725.5h10.5v3.5h-10.5zM283 729h10.5v3.5h-10.5zM227 732.5h10.5v3.5h-10.5zM283 732.5h10.5v3.5h-10.5zM227 736h10.5v3.5h-10.5zM283 736h17.5v3.5h-17.5zM227 739.5h10.5v3.5h-10.5zM283 739.5h17.5v3.5h-17.5zM206 743h7v3.5h-7zM283 743h17.5v3.5h-17.5zM206 746.5h7v3.5h-7zM283 746.5h17.5v3.5h-17.5zM283 750h17.5v3.5h-17.5z" fill="#ecb420"/><path d="M297 547h7v3.5h-7zM307.5 547h3.5v3.5h-3.5zM293.5 550.5h7v3.5h-7zM290 554h3.5v3.5h-3.5zM286.5 557.5h7v3.5h-7zM286.5 561h14v3.5h-14zM307.5 561h3.5v3.5h-3.5zM185 564.5h3.5v3.5h-3.5zM286.5 568h3.5v3.5h-3.5zM269 571.5h3.5v3.5h-3.5zM286.5 571.5h3.5v3.5h-3.5zM230.5 575h3.5v3.5h-3.5zM265.5 575h3.5v3.5h-3.5zM286.5 575h3.5v3.5h-3.5zM286.5 578.5h3.5v3.5h-3.5zM251.5 582h3.5v3.5h-3.5zM262 582h3.5v3.5h-3.5zM290 585.5h10.5v3.5h-10.5zM286.5 589h17.5v3.5h-17.5zM241 592.5h3.5v3.5h-3.5zM248 592.5h3.5v3.5h-3.5zM283 592.5h7v3.5h-7zM300.5 592.5h7v3.5h-7zM223.5 596h3.5v3.5h-3.5zM234 596h3.5v3.5h-3.5zM265.5 596h10.5v3.5h-10.5zM283 596h3.5v3.5h-3.5zM304 596h3.5v3.5h-3.5zM185 599.5h10.5v3.5h-10.5zM223.5 599.5h3.5v3.5h-3.5zM272.5 599.5h7v3.5h-7zM286.5 599.5h3.5v3.5h-3.5zM300.5 599.5h3.5v3.5h-3.5zM307.5 599.5h7v3.5h-7zM237.5 603h3.5v3.5h-3.5zM272.5 603h3.5v3.5h-3.5zM290 603h28v3.5h-28zM188.5 606.5h7v3.5h-7zM199 606.5h7v3.5h-7zM216.5 606.5h7v3.5h-7zM230.5 606.5h3.5v3.5h-3.5zM272.5 606.5h3.5v3.5h-3.5zM290 606.5h3.5v3.5h-3.5zM300.5 606.5h3.5v3.5h-3.5zM307.5 606.5h3.5v3.5h-3.5zM202.5 610h3.5v3.5h-3.5zM216.5 610h3.5v3.5h-3.5zM227 610h3.5v3.5h-3.5zM258.5 610h3.5v3.5h-3.5zM269 610h7v3.5h-7zM279.5 610h7v3.5h-7zM290 610h7v3.5h-7zM307.5 610h3.5v3.5h-3.5zM314.5 610h3.5v3.5h-3.5zM199 613.5h10.5v3.5h-10.5zM223.5 613.5h7v3.5h-7zM276 613.5h3.5v3.5h-3.5zM286.5 613.5h10.5v3.5h-10.5zM304 613.5h7v3.5h-7zM314.5 613.5h3.5v3.5h-3.5zM195.5 617h3.5v3.5h-3.5zM202.5 617h10.5v3.5h-10.5zM223.5 617h3.5v3.5h-3.5zM234 617h7v3.5h-7zM269 617h3.5v3.5h-3.5zM276 617h3.5v3.5h-3.5zM286.5 617h3.5v3.5h-3.5zM297 617h3.5v3.5h-3.5zM307.5 617h3.5v3.5h-3.5zM318 617h10.5v3.5h-10.5zM192 620.5h10.5v3.5h-10.5zM209.5 620.5h3.5v3.5h-3.5zM223.5 620.5h3.5v3.5h-3.5zM230.5 620.5h3.5v3.5h-3.5zM241 620.5h3.5v3.5h-3.5zM258.5 620.5h10.5v3.5h-10.5zM272.5 620.5h3.5v3.5h-3.5zM297 620.5h3.5v3.5h-3.5zM311 620.5h3.5v3.5h-3.5zM202.5 624h3.5v3.5h-3.5zM213 624h7v3.5h-7zM223.5 624h7v3.5h-7zM248 624h7v3.5h-7zM297 624h3.5v3.5h-3.5zM318 624h3.5v3.5h-3.5zM325 624h3.5v3.5h-3.5zM199 627.5h7v3.5h-7zM209.5 627.5h7v3.5h-7zM241 627.5h7v3.5h-7zM251.5 627.5h7v3.5h-7zM262 627.5h3.5v3.5h-3.5zM227 631h7v3.5h-7zM251.5 631h3.5v3.5h-3.5zM290 631h3.5v3.5h-3.5zM300.5 631h7v3.5h-7zM206 634.5h10.5v3.5h-10.5zM241 634.5h3.5v3.5h-3.5zM251.5 634.5h7v3.5h-7zM293.5 634.5h3.5v3.5h-3.5zM300.5 634.5h3.5v3.5h-3.5zM325 634.5h3.5v3.5h-3.5zM335.5 634.5h3.5v3.5h-3.5zM202.5 638h14v3.5h-14zM237.5 638h10.5v3.5h-10.5zM258.5 638h3.5v3.5h-3.5zM265.5 638h3.5v3.5h-3.5zM283 638h3.5v3.5h-3.5zM290 638h7v3.5h-7zM318 638h3.5v3.5h-3.5zM332 638h7v3.5h-7zM202.5 641.5h3.5v3.5h-3.5zM241 641.5h7v3.5h-7zM251.5 641.5h3.5v3.5h-3.5zM276 641.5h7v3.5h-7zM286.5 641.5h3.5v3.5h-3.5zM300.5 641.5h3.5v3.5h-3.5zM314.5 641.5h3.5v3.5h-3.5zM332 641.5h3.5v3.5h-3.5zM202.5 645h10.5v3.5h-10.5zM220 645h3.5v3.5h-3.5zM230.5 645h7v3.5h-7zM244.5 645h3.5v3.5h-3.5zM279.5 645h7v3.5h-7zM304 645h3.5v3.5h-3.5zM314.5 645h3.5v3.5h-3.5zM321.5 645h3.5v3.5h-3.5zM202.5 648.5h3.5v3.5h-3.5zM209.5 648.5h10.5v3.5h-10.5zM251.5 648.5h3.5v3.5h-3.5zM258.5 648.5h7v3.5h-7zM311 648.5h7v3.5h-7zM328.5 648.5h14v3.5h-14zM213 652h17.5v3.5h-17.5zM234 652h7v3.5h-7zM248 652h7v3.5h-7zM262 652h14v3.5h-14zM293.5 652h7v3.5h-7zM304 652h7v3.5h-7zM318 652h7v3.5h-7zM342.5 652h3.5v3.5h-3.5zM209.5 655.5h7v3.5h-7zM220 655.5h17.5v3.5h-17.5zM248 655.5h10.5v3.5h-10.5zM265.5 655.5h3.5v3.5h-3.5zM283 655.5h7v3.5h-7zM307.5 655.5h7v3.5h-7zM342.5 655.5h3.5v3.5h-3.5zM220 659h7v3.5h-7zM230.5 659h3.5v3.5h-3.5zM241 659h3.5v3.5h-3.5zM248 659h3.5v3.5h-3.5zM255 659h7v3.5h-7zM293.5 659h10.5v3.5h-10.5zM307.5 659h3.5v3.5h-3.5zM328.5 659h7v3.5h-7zM220 662.5h10.5v3.5h-10.5zM237.5 662.5h3.5v3.5h-3.5zM248 662.5h3.5v3.5h-3.5zM276 662.5h3.5v3.5h-3.5zM304 662.5h3.5v3.5h-3.5zM328.5 662.5h10.5v3.5h-10.5zM237.5 666h3.5v3.5h-3.5zM265.5 666h3.5v3.5h-3.5zM304 666h7v3.5h-7zM332 666h3.5v3.5h-3.5zM227 669.5h3.5v3.5h-3.5zM269 669.5h3.5v3.5h-3.5zM311 669.5h3.5v3.5h-3.5zM318 669.5h3.5v3.5h-3.5zM234 673h3.5v3.5h-3.5zM248 673h3.5v3.5h-3.5zM262 673h7v3.5h-7zM293.5 673h3.5v3.5h-3.5zM300.5 673h3.5v3.5h-3.5zM307.5 673h7v3.5h-7zM258.5 676.5h28v3.5h-28zM265.5 680h3.5v3.5h-3.5zM279.5 680h3.5v3.5h-3.5zM290 680h3.5v3.5h-3.5zM269 683.5h3.5v3.5h-3.5zM279.5 683.5h3.5v3.5h-3.5z" fill="#00b0e0"/><path d="M230.5 596h3.5v3.5h-3.5zM241 596h3.5v3.5h-3.5zM283 599.5h3.5v3.5h-3.5zM220 603h3.5v3.5h-3.5zM276 603h3.5v3.5h-3.5zM258.5 606.5h3.5v3.5h-3.5zM251.5 610h7v3.5h-7zM286.5 610h3.5v3.5h-3.5zM248 613.5h10.5v3.5h-10.5zM262 613.5h3.5v3.5h-3.5zM269 613.5h7v3.5h-7zM216.5 617h3.5v3.5h-3.5zM272.5 617h3.5v3.5h-3.5zM293.5 617h3.5v3.5h-3.5zM216.5 620.5h7v3.5h-7zM276 620.5h3.5v3.5h-3.5zM293.5 620.5h3.5v3.5h-3.5zM318 620.5h7v3.5h-7zM230.5 624h3.5v3.5h-3.5zM237.5 624h3.5v3.5h-3.5zM244.5 624h3.5v3.5h-3.5zM262 624h10.5v3.5h-10.5zM293.5 624h3.5v3.5h-3.5zM300.5 624h14v3.5h-14zM321.5 624h3.5v3.5h-3.5zM248 627.5h3.5v3.5h-3.5zM258.5 627.5h3.5v3.5h-3.5zM265.5 627.5h24.5v3.5h-24.5zM293.5 627.5h10.5v3.5h-10.5zM307.5 627.5h10.5v3.5h-10.5zM321.5 627.5h7v3.5h-7zM234 631h3.5v3.5h-3.5zM244.5 631h7v3.5h-7zM276 631h14v3.5h-14zM297 631h3.5v3.5h-3.5zM318 631h3.5v3.5h-3.5zM230.5 634.5h3.5v3.5h-3.5zM244.5 634.5h7v3.5h-7zM258.5 634.5h7v3.5h-7zM276 634.5h3.5v3.5h-3.5zM321.5 634.5h3.5v3.5h-3.5zM234 638h3.5v3.5h-3.5zM251.5 638h7v3.5h-7zM262 638h3.5v3.5h-3.5zM269 638h7v3.5h-7zM279.5 638h3.5v3.5h-3.5zM304 638h3.5v3.5h-3.5zM237.5 641.5h3.5v3.5h-3.5zM269 641.5h7v3.5h-7zM290 641.5h7v3.5h-7zM304 641.5h7v3.5h-7zM241 645h3.5v3.5h-3.5zM272.5 645h7v3.5h-7zM293.5 645h3.5v3.5h-3.5zM307.5 645h3.5v3.5h-3.5zM241 648.5h3.5v3.5h-3.5zM269 648.5h14v3.5h-14zM304 648.5h3.5v3.5h-3.5zM258.5 652h3.5v3.5h-3.5zM258.5 655.5h3.5v3.5h-3.5zM272.5 655.5h3.5v3.5h-3.5zM283 662.5h7v3.5h-7zM251.5 666h3.5v3.5h-3.5zM283 666h3.5v3.5h-3.5zM300.5 666h3.5v3.5h-3.5zM251.5 669.5h3.5v3.5h-3.5zM255 673h3.5v3.5h-3.5zM276 673h3.5v3.5h-3.5z" fill="#0064e0"/><path d="M265.5 610h3.5v3.5h-3.5zM283 613.5h3.5v3.5h-3.5zM248 617h3.5v3.5h-3.5zM290 617h3.5v3.5h-3.5zM251.5 620.5h3.5v3.5h-3.5zM269 620.5h3.5v3.5h-3.5zM283 620.5h3.5v3.5h-3.5zM300.5 620.5h3.5v3.5h-3.5zM272.5 624h10.5v3.5h-10.5zM286.5 624h3.5v3.5h-3.5zM255 631h3.5v3.5h-3.5zM265.5 631h10.5v3.5h-10.5zM269 634.5h7v3.5h-7zM290 634.5h3.5v3.5h-3.5zM297 638h3.5v3.5h-3.5zM265.5 641.5h3.5v3.5h-3.5zM297 641.5h3.5v3.5h-3.5zM251.5 645h3.5v3.5h-3.5zM258.5 645h14v3.5h-14z" fill="#2040e0"/><path d="M346 669.5h7v3.5h-7zM346 673h7v3.5h-7zM339 676.5h14v3.5h-14zM339 680h14v3.5h-14zM339 683.5h14v3.5h-14z" fill="#fcd814"/></g><defs><clipPath id="rclip"><rect x="55" y="459" width="432" height="337"/></clipPath></defs><g clip-path="url(#rclip)" fill="none" stroke="#fff" stroke-width="1"><circle cx="272.5" cy="627.5" r="28"/><circle cx="272.5" cy="627.5" r="56"/><circle cx="272.5" cy="627.5" r="84"/><circle cx="272.5" cy="627.5" r="112"/><circle cx="272.5" cy="627.5" r="140"/><circle cx="272.5" cy="627.5" r="168"/><circle cx="272.5" cy="627.5" r="196"/><circle cx="272.5" cy="627.5" r="224"/><path d="M55 627.5H487M272.5 459V796"/><path d="M292.3 647.3L430.9 785.9"/><path d="M252.7 647.3L114.1 785.9"/><path d="M252.7 607.7L114.1 469.1"/><path d="M292.3 607.7L430.9 469.1"/></g><path d="M273.5 628.5L260.5 670.5" stroke="#ff0000" stroke-width="3.5"/><path d="M265.5 629.5h12M270.5 625.5v5" stroke="#ff0000" stroke-width="1.5"/><circle cx="230.3" cy="505.4" r="7" fill="none" stroke="#e89010" stroke-width="1.2"/><circle cx="258.5" cy="659" r="6.5" fill="none" stroke="#e89010" stroke-width="1"/><path d="M219 518.5h22M248 672.5h22" stroke="#e89010" stroke-width="2" stroke-dasharray="2 1 3 1 1 1"/><path d="M254.5 504.5h11M260 499v11" stroke="#ffec8b" stroke-width="1" shape-rendering="crispEdges"/><text x="40" y="503" font-family="Liberation Sans" font-size="5" fill="#ffec8b">10</text><text x="252" y="808" font-family="Liberation Sans" font-size="5" fill="#ffec8b">-125</text><g shape-rendering="crispEdges"><path d="M488 458.5H573M488 627.5H573M488 794.5H573M488 819.5H573" stroke="#a0a0a0" stroke-width="1"/><rect x="490" y="485" width="10" height="7" fill="#ff8484"/><rect x="490" y="492" width="10" height="7" fill="#ff9494"/><rect x="490" y="499" width="10" height="7" fill="#ffb060"/><rect x="490" y="506" width="10" height="7" fill="#ffd8a8"/><rect x="490" y="513" width="10" height="7" fill="#fcd814"/><rect x="490" y="520" width="10" height="7" fill="#ecb420"/><rect x="490" y="527" width="10" height="7" fill="#d89430"/><rect x="490" y="534" width="10" height="7" fill="#c8c8c8"/><rect x="490" y="541" width="10" height="7" fill="#007048"/><rect x="490" y="548" width="10" height="7" fill="#00e898"/><rect x="490" y="555" width="10" height="7" fill="#00b0e0"/><rect x="490" y="562" width="10" height="7" fill="#0064e0"/><rect x="490" y="569" width="10" height="7" fill="#2040e0"/><rect x="490" y="576" width="10" height="7" fill="#4424e0"/><rect x="490" y="583" width="10" height="7" fill="#7020f0"/><rect x="490" y="590" width="10" height="7" fill="#9020ff"/><rect x="490" y="653" width="10" height="7" fill="#ff8484"/><rect x="490" y="660" width="10" height="7" fill="#ff9494"/><rect x="490" y="667" width="10" height="7" fill="#ffb060"/><rect x="490" y="674" width="10" height="7" fill="#ffd8a8"/><rect x="490" y="681" width="10" height="7" fill="#fcd814"/><rect x="490" y="688" width="10" height="7" fill="#ecb420"/><rect x="490" y="695" width="10" height="7" fill="#d89430"/><rect x="490" y="702" width="10" height="7" fill="#c8c8c8"/><rect x="490" y="709" width="10" height="7" fill="#007048"/><rect x="490" y="716" width="10" height="7" fill="#00e898"/><rect x="490" y="723" width="10" height="7" fill="#00b0e0"/><rect x="490" y="730" width="10" height="7" fill="#0064e0"/><rect x="490" y="737" width="10" height="7" fill="#2040e0"/><rect x="490" y="744" width="10" height="7" fill="#4424e0"/><rect x="490" y="751" width="10" height="7" fill="#7020f0"/><rect x="490" y="758" width="10" height="7" fill="#9020ff"/></g></svg>
<div class="t" style="left:13.5px;top:447px;font-size:24px;color:#fff;letter-spacing:0.27px;"><span style="color:#ffff00;letter-spacing:-0.06px;margin-right:-4px">24−aug−1997,01:05:00</span>  maxdz plot.  maxdz plot.</div>
<div class="t" style="left:15px;top:479px;font-size:24px;color:#fff;letter-spacing:0.5px;">rhb_met track.</div>
<div class="t" style="left:490px;top:471px;font-size:17px;color:#fff;">maxdz</div>
<div class="t" style="left:505px;top:493.5px;font-size:17px;color:#fff;">65.0</div>
<div class="t" style="left:505px;top:521.5px;font-size:17px;color:#fff;">45.0</div>
<div class="t" style="left:505px;top:549.5px;font-size:17px;color:#fff;">25.0</div>
<div class="t" style="left:505px;top:577.5px;font-size:17px;color:#fff;">5.0</div>
<div class="t" style="left:505px;top:605.5px;font-size:17px;color:#fff;">−15.0</div>
<div class="t" style="left:490px;top:639px;font-size:17px;color:#fff;">maxdz</div>
<div class="t" style="left:505px;top:661.5px;font-size:17px;color:#fff;">65.0</div>
<div class="t" style="left:505px;top:689.5px;font-size:17px;color:#fff;">45.0</div>
<div class="t" style="left:505px;top:717.5px;font-size:17px;color:#fff;">25.0</div>
<div class="t" style="left:505px;top:745.5px;font-size:17px;color:#fff;">5.0</div>
<div class="t" style="left:505px;top:773.5px;font-size:17px;color:#fff;">−15.0</div>
<div class="t" style="left:489px;top:808px;font-size:10px;color:#ff0000;">rhb_met</div>
<div class="t" style="left:380px;top:860px;font-size:24px;color:#fff;">Alt: 0.50 km MSL</div>
<div class="ic" style="left:10px;top:822px;width:46px;height:47px;"><svg width="46" height="47" viewBox="0 0 46 47" style="left:-1px;top:-1px"><path d="M6.5 12.5C9 8 13 6.5 17 7.5S27 11 32 11.5S37 10 38.5 8.5C28 16 20 24 6 39.5C10 36 14 35 18 36S28 40.5 32 40.5S37 38.5 38.5 36" fill="none" stroke="#ffff00" stroke-width="1.4" stroke-linejoin="round" stroke-linecap="round"/><path d="M38.5 8.5C28 16 20 24 6 39.5" fill="none" stroke="#ffff00" stroke-width="2.0"/></svg></div><div class="ig" style="left:57px;top:822px;width:46px;height:47px;"><svg width="46" height="47" viewBox="0 0 46 47" style="left:-1px;top:-1px"><defs><pattern id="gd2" width="2" height="2" patternUnits="userSpaceOnUse"><rect width="1" height="1" fill="#e0e0e0"/><rect x="1" y="1" width="1" height="1" fill="#e0e0e0"/></pattern></defs><text x="3" y="16.5" font-family="Liberation Sans" font-weight="bold" font-size="14.5" fill="#e0e0e0" textLength="31" lengthAdjust="spacingAndGlyphs">GOES</text><path d="M3 17h4c8 1 14 8 16 16v10h-20z" fill="url(#gd2)"/><path d="M3 37c4-2 8-1 9 3v3h-9zM14 25c3 0 7 4 8 9c-4 0-8-4-8-9zM3 17h4l-4 4z" fill="#e0e0e0"/><path d="M23 25l15-3M24 32l14-9" stroke="#e0e0e0" stroke-width="1" stroke-dasharray="1 1.5" fill="none"/><path d="M40 18.5l3 3l-3 3l-3-3z" fill="#e0e0e0"/><text x="25" y="43" font-family="Liberation Sans" font-size="10" fill="#e0e0e0" letter-spacing="0.5">.IR</text></svg></div><div class="ic" style="left:104px;top:822px;width:46px;height:47px;"><svg width="46" height="47" viewBox="0 0 46 47" style="left:-1px;top:-1px"><g transform="translate(0 3)"><path d="M6 9C8 20 16 28 27 30" fill="none" stroke="#ffff00" stroke-width="1.8"/><path d="M11 22h5v-5" fill="none" stroke="#ffff00" stroke-width="1"/><path d="M12 24h3l2 11h2v5h-9v-5h1z" fill="#ffff00"/></g><text x="36" y="15.0" font-family="Liberation Sans" font-size="11" text-anchor="middle" fill="#ffff00">S</text><text x="36" y="27.5" font-family="Liberation Sans" font-size="11" text-anchor="middle" fill="#ffff00">U</text><text x="36" y="40.0" font-family="Liberation Sans" font-size="11" text-anchor="middle" fill="#ffff00">R</text></svg></div><div class="ic" style="left:151px;top:822px;width:46px;height:47px;"><svg width="46" height="47" viewBox="0 0 46 47" style="left:-1px;top:-1px"><g fill="none" stroke="#ffff00" stroke-width="1.4"><rect x="5.5" y="5.5" width="35" height="36"/><path d="M14.2 5.5v36M23 5.5v36M31.8 5.5v36M5.5 14.5h35M5.5 23.5h35M5.5 32.5h35"/></g><path d="M12 8C14 18 20 27 30 30" fill="none" stroke="#ffff00" stroke-width="1.8"/><path d="M17 24h3l2 10h2v5h-9v-5h1z" fill="#ffff00"/></svg></div><div class="ic" style="left:198px;top:822px;width:14px;height:47px;"><svg width="14" height="47" viewBox="0 0 14 47" style="left:-1px;top:-1px"><text x="7" y="9.5" font-family="Liberation Sans" font-weight="bold" font-size="6.5" text-anchor="middle" fill="#ffff00">B</text><text x="7" y="16.1" font-family="Liberation Sans" font-weight="bold" font-size="6.5" text-anchor="middle" fill="#ffff00">O</text><text x="7" y="22.7" font-family="Liberation Sans" font-weight="bold" font-size="6.5" text-anchor="middle" fill="#ffff00">U</text><text x="7" y="29.299999999999997" font-family="Liberation Sans" font-weight="bold" font-size="6.5" text-anchor="middle" fill="#ffff00">N</text><text x="7" y="35.9" font-family="Liberation Sans" font-weight="bold" font-size="6.5" text-anchor="middle" fill="#ffff00">D</text><text x="7" y="42.5" font-family="Liberation Sans" font-weight="bold" font-size="6.5" text-anchor="middle" fill="#ffff00">S</text></svg></div><div class="ic" style="left:213px;top:845px;width:22px;height:24px;"><svg width="22" height="24" viewBox="0 0 22 24" style="left:-1px;top:-1px"><g fill="none" stroke="#ffff00" stroke-width="1.3"><rect x="3.5" y="4.5" width="15" height="15"/><path d="M8.5 4.5v15M13.5 4.5v15M3.5 9.5h15M3.5 14.5h15"/></g></svg></div><div class="ic" style="left:236px;top:822px;width:21px;height:47px;"><svg width="21" height="47" viewBox="0 0 21 47" style="left:-1px;top:-1px"><path d="M3 5l5-1l-1 5l-3 1zM9 4h5l-3 4zM4 13l3-2l1 3zM10 9l4 1l1 4l-3-1zM13 4l4 0l-2 3z" fill="#ffff00"/><text x="10.5" y="26.0" font-family="Liberation Sans" font-size="8.5" text-anchor="middle" fill="#ffff00">M</text><text x="10.5" y="33.5" font-family="Liberation Sans" font-size="8.5" text-anchor="middle" fill="#ffff00">A</text><text x="10.5" y="41.0" font-family="Liberation Sans" font-size="8.5" text-anchor="middle" fill="#ffff00">P</text></svg></div><div class="ic" style="left:258px;top:822px;width:21px;height:47px;"><svg width="21" height="47" viewBox="0 0 21 47" style="left:-1px;top:-1px"><g fill="none" stroke="#ffff00" stroke-width="1"><circle cx="10.5" cy="27" r="7.5"/><circle cx="10.5" cy="27" r="4.7"/><circle cx="10.5" cy="27" r="2.2"/><path d="M12.8 27.0L18.0 27.0"/><path d="M12.1 28.6L15.8 32.3"/><path d="M10.5 29.2L10.5 34.5"/><path d="M8.9 28.6L5.2 32.3"/><path d="M8.2 27.0L3.0 27.0"/><path d="M8.9 25.4L5.2 21.7"/><path d="M10.5 24.8L10.5 19.5"/><path d="M12.1 25.4L15.8 21.7"/></g></svg></div><div class="ic" style="left:280px;top:845px;width:22px;height:24px;"><svg width="22" height="24" viewBox="0 0 22 24" style="left:-1px;top:-1px"><circle cx="11" cy="12.5" r="5.5" fill="none" stroke="#ffff00" stroke-width="1.2"/></svg></div><div class="ic" style="left:303px;top:822px;width:46px;height:47px;"><svg width="46" height="47" viewBox="0 0 46 47" style="left:-1px;top:-1px"><g transform="translate(0 0)"><path d="M3 44v-5l2 2l2.5-2l2.5 2l2.5-2l2.5 2l2.5-2l2.5 2l2.5-2l2.5 2l2.5-2l2.5 2l2.5-2l2.5 2l2-2v5z" fill="#ffff00"/><g fill="none" stroke="#ffff00" stroke-width="1.2"><path d="M6 33h33l-3 7M6 33l2 6M8 33v-8h4l2 8"/><circle cx="22" cy="24" r="3.2"/><path d="M21 27v6M23 27v6M34.5 16v17"/></g></g></svg></div>
<div style="left:1160px;top:97px;width:102px;height:662px;background:#5f9ea0;border:1px dotted #e8e8e8;"></div>
<div style="left:1161px;top:98px;width:100px;height:20px;background:#006400;border-bottom:1px dotted #e8e8e8;"></div>
<div style="left:1163px;top:100px;width:15px;height:15px;border:1px solid #e8e8e8;"></div>
<div style="left:1166px;top:103px;width:9px;height:9px;background:#d8d8d8;border-radius:50%;"></div>
<div style="left:1182px;top:100px;width:15px;height:15px;border:1px solid #e8e8e8;"></div>
<div style="left:1185px;top:102px;width:8px;height:11px;border:1px solid #e8e8e8;"></div>
<svg width="1280" height="1024"><path d="M1187.5 105.5h3M1187.5 107.5h3M1187.5 109.5h3" stroke="#e8e8e8" stroke-width="1"/></svg>
<div class="t" style="left:1204px;top:112px;font-size:13px;font-weight:bold;color:#fff;">icon</div>
<div style="left:1225px;top:100px;width:15px;height:15px;border:1px solid #e8e8e8;background:#006400;"></div>
<div style="left:1231px;top:106px;width:4px;height:4px;border:1px solid #e8e8e8;border-radius:50%;"></div>
<div style="left:1244px;top:100px;width:15px;height:15px;border:1px solid #e8e8e8;background:#006400;"></div>
<div style="left:1246px;top:100px;width:9px;height:9px;border:1px solid #e8e8e8;"></div>
<div style="left:1165px;top:122px;width:92px;height:632px;border:2px solid #000;"></div>
<div style="left:1171px;top:128px;width:52px;height:48px;background:#191970;border:2px solid #000;"><svg width="48" height="44" viewBox="0 0 48 44" style="left:0;top:0"><g transform="translate(2 -1) scale(0.95)"><path d="M6.5 12.5C9 8 13 6.5 17 7.5S27 11 32 11.5S37 10 38.5 8.5C28 16 20 24 6 39.5C10 36 14 35 18 36S28 40.5 32 40.5S37 38.5 38.5 36" fill="none" stroke="#ffff00" stroke-width="1.4" stroke-linejoin="round" stroke-linecap="round"/><path d="M38.5 8.5C28 16 20 24 6 39.5" fill="none" stroke="#ffff00" stroke-width="2.0"/></g></svg></div>
<div style="left:1171px;top:180px;width:52px;height:48px;background:#191970;border:2px solid #000;"><svg width="48" height="44" viewBox="0 0 48 44" style="left:0;top:0"><defs><pattern id="pd" width="2" height="2" patternUnits="userSpaceOnUse"><rect width="1" height="1" fill="#ffff00"/><rect x="1" y="1" width="1" height="1" fill="#ffff00"/></pattern></defs><path d="M17 5h8l5 5v8h-13z" fill="url(#pd)"/><path d="M17 5h8l5 5v8h-13z" fill="none" stroke="#ffff00" stroke-width="1"/><path d="M25 5v5h5" fill="#ffff00"/><path d="M12 12h5v6h13v-6h4l6 9h-34z" fill="#ffff00"/><rect x="6" y="21" width="34" height="7" fill="url(#pd)"/><path d="M6 21h34" stroke="#ffff00" stroke-width="1.5"/><rect x="30" y="23" width="7" height="2" fill="#ffff00"/><text x="23.5" y="38" font-family="Liberation Sans" font-weight="bold" font-size="8" text-anchor="middle" fill="#ffff00" letter-spacing="0.8">PRINT</text></svg></div>
<div style="left:1171px;top:232px;width:52px;height:48px;background:#191970;border:2px solid #000;"><svg width="48" height="44" viewBox="0 0 48 44" style="left:0;top:0"><defs><pattern id="pe" width="2" height="2" patternUnits="userSpaceOnUse"><rect width="1" height="1" fill="#ffff00"/><rect x="1" y="1" width="1" height="1" fill="#ffff00"/></pattern></defs><path d="M3 16h4c8 1 14 8 16 16v11h-20z" fill="url(#pe)"/><path d="M3 36c4-2 8-1 9 3v4h-9zM14 24c3 0 7 4 8 9c-4 0-8-4-8-9zM3 16h5l-5 5z" fill="#ffff00"/><path d="M22 26l11-17" stroke="#ffff00" stroke-width="2" stroke-dasharray="1 1.5" fill="none"/><path d="M35 3l3 3l-3 3l-3-3z" fill="#ffff00"/><g fill="#ffff00"><rect x="7" y="6" width="2" height="2"/><rect x="22" y="4" width="1.5" height="1.5"/><rect x="16" y="11" width="1.5" height="1.5"/><rect x="41" y="3" width="1.5" height="1.5"/><rect x="42" y="12" width="1.5" height="1.5"/><rect x="30" y="27" width="1.5" height="1.5"/><rect x="35" y="31" width="3" height="1.5"/><rect x="40" y="29" width="1.5" height="1.5"/><rect x="31" y="35" width="1.5" height="1.5"/><rect x="40" y="40" width="1.5" height="1.5"/><rect x="26" y="41" width="1.5" height="1.5"/></g></svg></div>
<div style="left:1171px;top:284px;width:52px;height:48px;background:#191970;border:2px solid #000;"><svg width="48" height="44" viewBox="0 0 48 44" style="left:0;top:0"><g fill="none" stroke="#ffff00" stroke-width="1"><circle cx="24" cy="17" r="14"/><circle cx="24" cy="17" r="8.7"/><circle cx="24" cy="17" r="4.2"/><path d="M28.2 17.0L38.0 17.0"/><path d="M27.0 20.0L33.9 26.9"/><path d="M24.0 21.2L24.0 31.0"/><path d="M21.0 20.0L14.1 26.9"/><path d="M19.8 17.0L10.0 17.0"/><path d="M21.0 14.0L14.1 7.1"/><path d="M24.0 12.8L24.0 3.0"/><path d="M27.0 14.0L33.9 7.1"/></g><text x="24" y="41" font-family="Liberation Sans" font-size="8.5" text-anchor="middle" fill="#ffff00" textLength="36" lengthAdjust="spacingAndGlyphs">OVERLAYS</text></svg></div>
<div style="left:1171px;top:336px;width:52px;height:48px;background:#191970;border:2px solid #000;"><svg width="48" height="44" viewBox="0 0 48 44" style="left:0;top:0"><g transform="translate(8 -2)"><path d="M6 9C8 20 16 28 27 30" fill="none" stroke="#ffff00" stroke-width="1.8"/><path d="M11 22h5v-5" fill="none" stroke="#ffff00" stroke-width="1"/><path d="M12 24h3l2 11h2v5h-9v-5h1z" fill="#ffff00"/></g></svg></div>
<div style="left:1171px;top:388px;width:52px;height:48px;background:#191970;border:2px solid #000;"><svg width="48" height="44" viewBox="0 0 48 44" style="left:0;top:0"><g transform="translate(2 -2)"><path d="M3 44v-5l2 2l2.5-2l2.5 2l2.5-2l2.5 2l2.5-2l2.5 2l2.5-2l2.5 2l2.5-2l2.5 2l2.5-2l2.5 2l2-2v5z" fill="#ffff00"/><g fill="none" stroke="#ffff00" stroke-width="1.2"><path d="M6 33h33l-3 7M6 33l2 6M8 33v-8h4l2 8"/><circle cx="22" cy="24" r="3.2"/><path d="M21 27v6M23 27v6M34.5 16v17"/></g></g></svg></div>
<div style="left:0px;top:0px;width:1102px;height:2px;background:#000;border-top:1px dotted #fff;"></div><div style="left:0px;top:0px;width:145px;height:2px;background:#006400;"></div><div style="left:572px;top:0px;width:161px;height:2px;background:#006400;"></div><div style="left:222px;top:0px;width:30px;height:2px;background:#0000cd;"></div><div style="left:973px;top:0px;width:47px;height:2px;background:#0000cd;"></div>
<div style="left:1135px;top:420px;width:6px;height:286px;background:#fff;border-right:1px dotted #000;"></div>
</body></html>
